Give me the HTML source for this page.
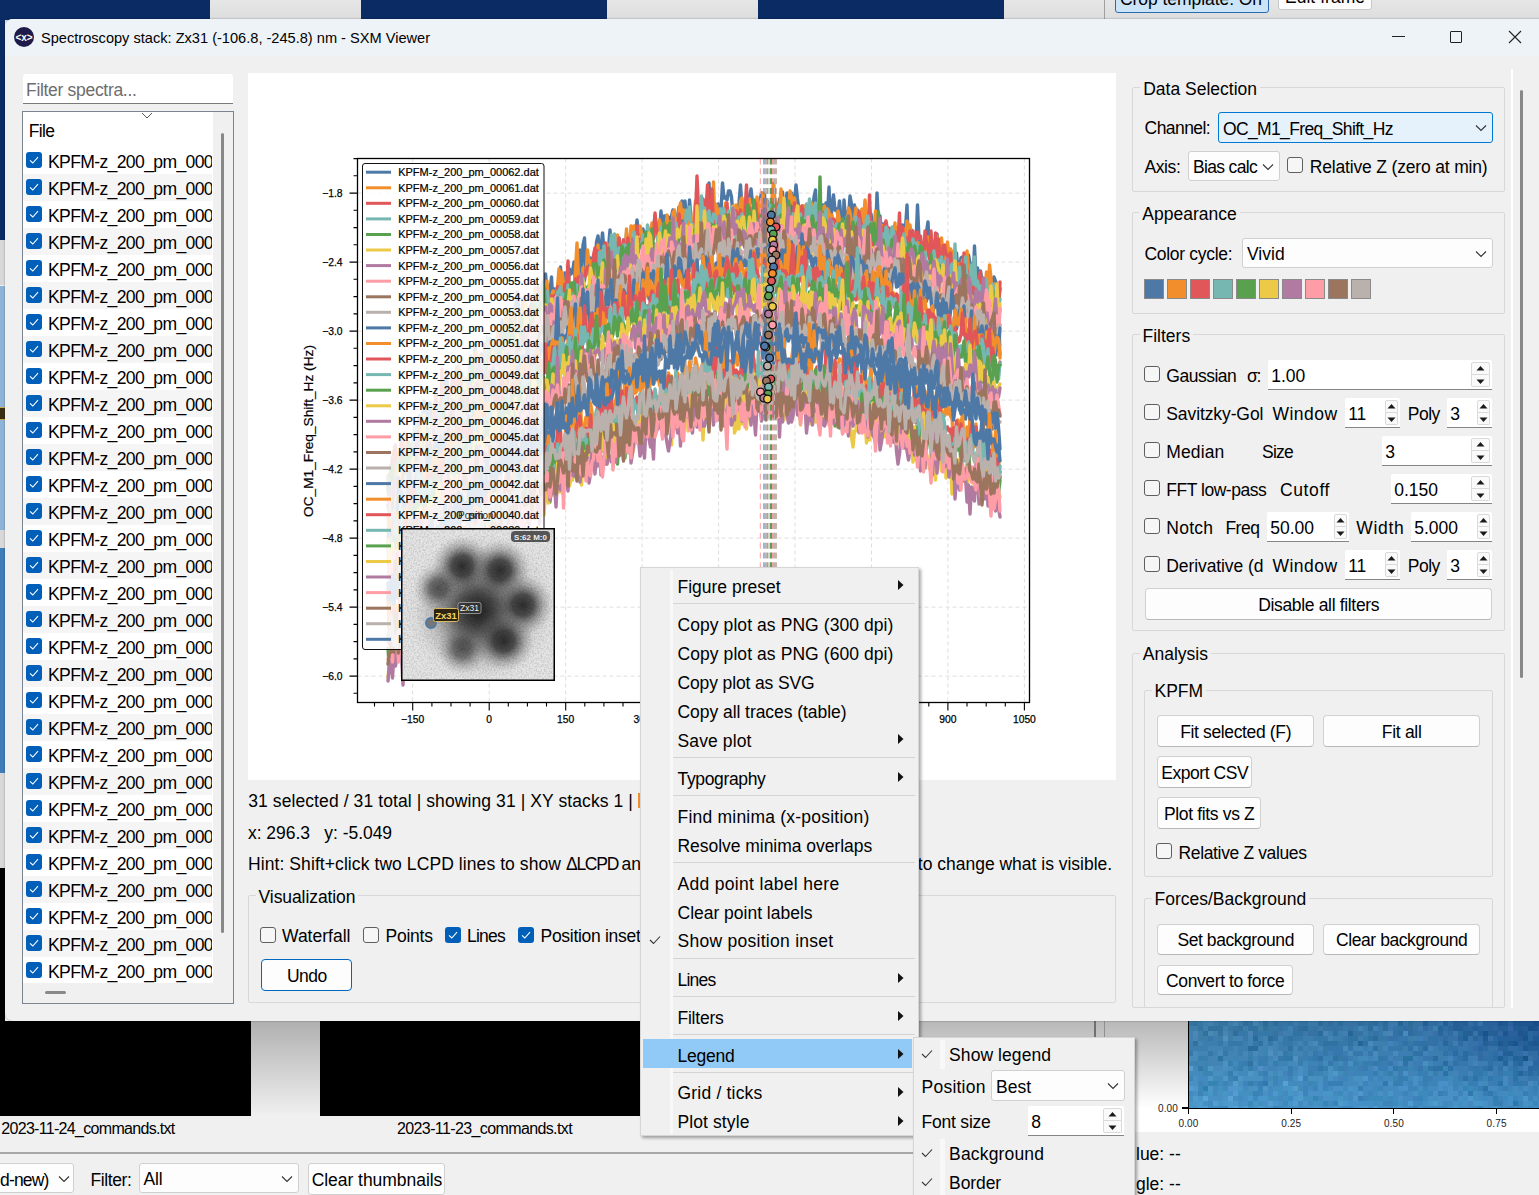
<!DOCTYPE html><html><head><meta charset="utf-8"><style>
html,body{margin:0;padding:0;width:1539px;height:1195px;overflow:hidden;background:#f0f0f0;font-family:"Liberation Sans",sans-serif;}
.a{position:absolute;box-sizing:border-box;}
.t{position:absolute;white-space:pre;line-height:1;}
</style></head><body>
<div class="a" style="left:0px;top:0px;width:1539px;height:22px;background:linear-gradient(#e6e6e6,#dcdcdc)"></div>
<div class="a" style="left:0px;top:0px;width:210px;height:20px;background:#0a2b63"></div>
<div class="a" style="left:361px;top:0px;width:246px;height:20px;background:#0a2b63"></div>
<div class="a" style="left:758px;top:0px;width:246px;height:20px;background:#0a2b63"></div>
<div class="a" style="left:1104px;top:0px;width:1px;height:20px;background:#a0a0a0"></div>
<div class="a" style="left:1115px;top:-6px;width:154px;height:19px;background:#cce4f7;border:1px solid #2b6cb0;border-radius:3px"></div>
<div class="t" style="left:1120.0px;top:-9.2px;font-size:17.5px;color:#000;letter-spacing:-0.058px;">Crop template: On</div>
<div class="a" style="left:1278px;top:-6px;width:94px;height:16px;background:#fdfdfd;border:1px solid #c8c8c8;border-radius:3px"></div>
<div class="t" style="left:1285.0px;top:-10.7px;font-size:17.5px;color:#000;letter-spacing:0.025px;">Edit frame</div>
<div class="a" style="left:0px;top:0px;width:5px;height:240px;background:#0a2b63"></div>
<div class="a" style="left:0px;top:240px;width:5px;height:45px;background:#d8d8d8"></div>
<div class="a" style="left:0px;top:286px;width:5px;height:244px;background:#8fb3d6"></div>
<div class="a" style="left:0px;top:407px;width:5px;height:13px;background:#3b2d12;border-top:1px solid #c8a850;border-bottom:1px solid #c8a850"></div>
<div class="a" style="left:0px;top:530px;width:5px;height:18px;background:#d8d8d8"></div>
<div class="a" style="left:0px;top:548px;width:5px;height:225px;background:#3f7db8"></div>
<div class="a" style="left:0px;top:773px;width:5px;height:95px;background:#d8d8d8"></div>
<div class="a" style="left:0px;top:868px;width:5px;height:153px;background:#000"></div>
<div class="a" style="left:0px;top:1021px;width:1539px;height:174px;background:#f0f0f0"></div>
<div class="a" style="left:0px;top:1021px;width:251px;height:95px;background:#000"></div>
<div class="a" style="left:251px;top:1021px;width:69px;height:95px;background:linear-gradient(#b0b0b0,#f0f0f0)"></div>
<div class="a" style="left:320px;top:1021px;width:320px;height:95px;background:#000"></div>
<div class="a" style="left:640px;top:1021px;width:548px;height:87px;background:linear-gradient(#b8b8b8,#ffffff)"></div>
<div class="a" style="left:1094px;top:1021px;width:2px;height:19px;background:#707070"></div>
<div class="a" style="left:1104px;top:1021px;width:1px;height:19px;background:#909090"></div>
<div class="a" style="left:1113px;top:1108px;width:426px;height:24px;background:#fff"></div>
<svg class="a" style="left:0;top:0" width="1539" height="1195" shape-rendering="crispEdges"><path fill="rgb(54,114,162)" d="M1188 1021h5v5h-5zM1218 1021h5v5h-5zM1223 1021h5v5h-5zM1278 1021h5v5h-5zM1283 1021h5v5h-5zM1298 1021h5v5h-5zM1323 1021h5v5h-5zM1333 1021h5v5h-5zM1343 1021h5v5h-5zM1348 1021h5v5h-5zM1353 1021h5v5h-5zM1378 1021h5v5h-5zM1413 1021h5v5h-5zM1418 1021h5v5h-5zM1198 1026h5v5h-5zM1233 1026h5v5h-5zM1278 1026h5v5h-5zM1293 1026h5v5h-5zM1313 1026h5v5h-5zM1323 1026h5v5h-5zM1328 1026h5v5h-5zM1338 1026h5v5h-5zM1348 1026h5v5h-5zM1218 1031h5v5h-5zM1253 1031h5v5h-5zM1273 1031h5v5h-5zM1308 1031h5v5h-5zM1313 1031h5v5h-5zM1353 1031h5v5h-5zM1358 1031h5v5h-5z"/><path fill="rgb(48,114,156)" d="M1193 1021h5v5h-5zM1248 1021h5v5h-5zM1208 1026h5v5h-5zM1213 1026h5v5h-5zM1218 1026h5v5h-5zM1238 1026h5v5h-5zM1253 1026h5v5h-5zM1263 1026h5v5h-5zM1203 1031h5v5h-5zM1193 1041h5v5h-5z"/><path fill="rgb(54,120,162)" d="M1198 1021h5v5h-5zM1268 1021h5v5h-5zM1228 1026h5v5h-5zM1268 1026h5v5h-5zM1308 1026h5v5h-5z"/><path fill="rgb(60,126,168)" d="M1203 1021h5v5h-5zM1228 1021h5v5h-5zM1188 1026h5v5h-5zM1193 1026h5v5h-5zM1243 1026h5v5h-5zM1258 1026h5v5h-5zM1198 1031h5v5h-5zM1228 1031h5v5h-5zM1198 1036h5v5h-5zM1203 1036h5v5h-5zM1218 1036h5v5h-5zM1228 1036h5v5h-5zM1223 1046h5v5h-5z"/><path fill="rgb(66,126,174)" d="M1208 1021h5v5h-5zM1203 1026h5v5h-5zM1223 1026h5v5h-5zM1288 1026h5v5h-5zM1188 1031h5v5h-5zM1283 1031h5v5h-5zM1188 1036h5v5h-5z"/><path fill="rgb(60,120,168)" d="M1213 1021h5v5h-5zM1238 1021h5v5h-5zM1258 1021h5v5h-5zM1293 1021h5v5h-5zM1308 1021h5v5h-5zM1313 1021h5v5h-5zM1393 1021h5v5h-5zM1318 1026h5v5h-5zM1363 1026h5v5h-5zM1278 1031h5v5h-5zM1303 1031h5v5h-5zM1243 1036h5v5h-5zM1303 1041h5v5h-5z"/><path fill="rgb(66,132,174)" d="M1233 1021h5v5h-5zM1253 1021h5v5h-5zM1213 1031h5v5h-5zM1263 1036h5v5h-5z"/><path fill="rgb(48,108,156)" d="M1243 1021h5v5h-5zM1273 1021h5v5h-5zM1328 1021h5v5h-5zM1358 1021h5v5h-5zM1368 1021h5v5h-5zM1433 1021h5v5h-5zM1298 1026h5v5h-5zM1383 1026h5v5h-5zM1408 1026h5v5h-5zM1233 1031h5v5h-5z"/><path fill="rgb(42,108,150)" d="M1263 1021h5v5h-5zM1318 1021h5v5h-5z"/><path fill="rgb(48,114,162)" d="M1288 1021h5v5h-5zM1303 1021h5v5h-5zM1363 1021h5v5h-5zM1248 1026h5v5h-5zM1333 1026h5v5h-5zM1398 1026h5v5h-5zM1293 1031h5v5h-5zM1298 1031h5v5h-5zM1333 1031h5v5h-5zM1393 1031h5v5h-5zM1413 1031h5v5h-5zM1273 1036h5v5h-5zM1288 1036h5v5h-5zM1348 1036h5v5h-5zM1353 1036h5v5h-5zM1368 1036h5v5h-5zM1428 1036h5v5h-5zM1258 1041h5v5h-5zM1323 1041h5v5h-5zM1328 1041h5v5h-5zM1333 1041h5v5h-5zM1348 1041h5v5h-5zM1363 1041h5v5h-5zM1403 1041h5v5h-5zM1423 1041h5v5h-5zM1448 1041h5v5h-5zM1288 1046h5v5h-5zM1413 1051h5v5h-5zM1318 1056h5v5h-5zM1333 1056h5v5h-5zM1248 1061h5v5h-5z"/><path fill="rgb(42,108,156)" d="M1338 1021h5v5h-5zM1373 1021h5v5h-5zM1383 1021h5v5h-5zM1408 1021h5v5h-5zM1303 1026h5v5h-5zM1368 1026h5v5h-5zM1318 1031h5v5h-5zM1458 1031h5v5h-5zM1253 1036h5v5h-5zM1268 1036h5v5h-5zM1373 1036h5v5h-5zM1248 1046h5v5h-5zM1253 1046h5v5h-5z"/><path fill="rgb(60,120,174)" d="M1388 1021h5v5h-5zM1388 1026h5v5h-5zM1418 1026h5v5h-5zM1428 1031h5v5h-5zM1453 1031h5v5h-5zM1423 1036h5v5h-5z"/><path fill="rgb(36,102,150)" d="M1398 1021h5v5h-5zM1438 1026h5v5h-5zM1348 1031h5v5h-5z"/><path fill="rgb(54,114,168)" d="M1403 1021h5v5h-5zM1438 1021h5v5h-5zM1478 1021h5v5h-5zM1393 1026h5v5h-5zM1413 1026h5v5h-5zM1428 1026h5v5h-5zM1373 1031h5v5h-5zM1418 1031h5v5h-5zM1433 1031h5v5h-5zM1443 1031h5v5h-5zM1473 1031h5v5h-5zM1388 1036h5v5h-5zM1393 1036h5v5h-5zM1438 1036h5v5h-5zM1448 1036h5v5h-5zM1453 1036h5v5h-5zM1468 1036h5v5h-5zM1488 1036h5v5h-5zM1428 1041h5v5h-5zM1468 1041h5v5h-5zM1473 1041h5v5h-5zM1468 1046h5v5h-5zM1488 1046h5v5h-5zM1493 1046h5v5h-5zM1473 1051h5v5h-5zM1483 1051h5v5h-5zM1528 1056h5v5h-5z"/><path fill="rgb(36,96,150)" d="M1423 1021h5v5h-5zM1443 1021h5v5h-5zM1453 1021h5v5h-5zM1463 1021h5v5h-5zM1453 1026h5v5h-5zM1458 1026h5v5h-5zM1473 1026h5v5h-5zM1498 1026h5v5h-5zM1503 1026h5v5h-5zM1463 1031h5v5h-5zM1468 1031h5v5h-5zM1478 1031h5v5h-5zM1488 1031h5v5h-5zM1493 1031h5v5h-5zM1503 1036h5v5h-5zM1513 1036h5v5h-5zM1483 1041h5v5h-5zM1503 1041h5v5h-5zM1523 1041h5v5h-5zM1528 1046h5v5h-5zM1533 1046h5v5h-5zM1503 1051h5v5h-5zM1538 1051h5v5h-5z"/><path fill="rgb(48,108,162)" d="M1428 1021h5v5h-5zM1448 1021h5v5h-5zM1468 1021h5v5h-5zM1403 1026h5v5h-5zM1423 1026h5v5h-5zM1443 1026h5v5h-5zM1398 1031h5v5h-5zM1408 1031h5v5h-5zM1448 1031h5v5h-5zM1443 1036h5v5h-5zM1478 1036h5v5h-5zM1458 1041h5v5h-5zM1513 1046h5v5h-5zM1478 1051h5v5h-5zM1513 1051h5v5h-5zM1528 1051h5v5h-5zM1533 1051h5v5h-5zM1478 1056h5v5h-5zM1533 1056h5v5h-5z"/><path fill="rgb(42,96,150)" d="M1458 1021h5v5h-5z"/><path fill="rgb(42,102,156)" d="M1473 1021h5v5h-5zM1448 1026h5v5h-5zM1463 1026h5v5h-5zM1468 1026h5v5h-5zM1483 1026h5v5h-5zM1493 1026h5v5h-5zM1438 1031h5v5h-5zM1528 1031h5v5h-5zM1458 1036h5v5h-5zM1473 1036h5v5h-5zM1528 1036h5v5h-5zM1443 1041h5v5h-5zM1488 1041h5v5h-5zM1498 1046h5v5h-5z"/><path fill="rgb(42,96,156)" d="M1483 1021h5v5h-5zM1488 1021h5v5h-5zM1493 1021h5v5h-5zM1508 1021h5v5h-5zM1478 1026h5v5h-5zM1488 1026h5v5h-5zM1508 1031h5v5h-5zM1513 1031h5v5h-5zM1533 1031h5v5h-5zM1518 1041h5v5h-5z"/><path fill="rgb(30,84,144)" d="M1498 1021h5v5h-5zM1513 1021h5v5h-5zM1518 1021h5v5h-5zM1523 1021h5v5h-5zM1528 1021h5v5h-5zM1503 1031h5v5h-5zM1518 1031h5v5h-5zM1533 1041h5v5h-5z"/><path fill="rgb(30,90,144)" d="M1503 1021h5v5h-5zM1518 1026h5v5h-5zM1523 1031h5v5h-5zM1498 1041h5v5h-5zM1508 1041h5v5h-5zM1538 1041h5v5h-5zM1523 1046h5v5h-5z"/><path fill="rgb(24,78,138)" d="M1533 1021h5v5h-5zM1538 1021h5v5h-5zM1528 1026h5v5h-5z"/><path fill="rgb(54,120,168)" d="M1273 1026h5v5h-5zM1283 1026h5v5h-5zM1343 1026h5v5h-5zM1353 1026h5v5h-5zM1378 1026h5v5h-5zM1238 1031h5v5h-5zM1243 1031h5v5h-5zM1258 1031h5v5h-5zM1263 1031h5v5h-5zM1268 1031h5v5h-5zM1368 1031h5v5h-5zM1378 1031h5v5h-5zM1423 1031h5v5h-5zM1208 1036h5v5h-5zM1283 1036h5v5h-5zM1293 1036h5v5h-5zM1298 1036h5v5h-5zM1313 1036h5v5h-5zM1318 1036h5v5h-5zM1323 1036h5v5h-5zM1343 1036h5v5h-5zM1363 1036h5v5h-5zM1378 1036h5v5h-5zM1383 1036h5v5h-5zM1218 1041h5v5h-5zM1228 1041h5v5h-5zM1233 1041h5v5h-5zM1238 1041h5v5h-5zM1253 1041h5v5h-5zM1268 1041h5v5h-5zM1283 1041h5v5h-5zM1288 1041h5v5h-5zM1318 1041h5v5h-5zM1338 1041h5v5h-5zM1343 1041h5v5h-5zM1408 1041h5v5h-5zM1298 1046h5v5h-5zM1323 1046h5v5h-5zM1333 1046h5v5h-5zM1388 1046h5v5h-5zM1398 1046h5v5h-5zM1418 1046h5v5h-5zM1188 1051h5v5h-5zM1208 1051h5v5h-5zM1223 1051h5v5h-5zM1283 1051h5v5h-5zM1313 1051h5v5h-5zM1323 1051h5v5h-5zM1353 1051h5v5h-5zM1278 1056h5v5h-5zM1338 1056h5v5h-5zM1198 1066h5v5h-5z"/><path fill="rgb(66,132,180)" d="M1358 1026h5v5h-5zM1383 1031h5v5h-5zM1233 1036h5v5h-5zM1238 1036h5v5h-5zM1248 1036h5v5h-5zM1278 1036h5v5h-5zM1328 1036h5v5h-5zM1198 1041h5v5h-5zM1223 1041h5v5h-5zM1248 1041h5v5h-5zM1263 1041h5v5h-5zM1273 1041h5v5h-5zM1298 1041h5v5h-5zM1308 1041h5v5h-5zM1208 1046h5v5h-5zM1213 1046h5v5h-5zM1218 1046h5v5h-5zM1233 1046h5v5h-5zM1258 1046h5v5h-5zM1273 1046h5v5h-5zM1293 1046h5v5h-5zM1318 1046h5v5h-5zM1353 1046h5v5h-5zM1358 1046h5v5h-5zM1198 1051h5v5h-5zM1203 1051h5v5h-5zM1228 1051h5v5h-5zM1233 1051h5v5h-5zM1258 1051h5v5h-5zM1273 1051h5v5h-5zM1293 1051h5v5h-5zM1298 1051h5v5h-5zM1308 1051h5v5h-5zM1363 1051h5v5h-5zM1208 1056h5v5h-5zM1213 1056h5v5h-5zM1223 1056h5v5h-5zM1228 1056h5v5h-5zM1238 1056h5v5h-5zM1243 1056h5v5h-5zM1253 1056h5v5h-5zM1268 1056h5v5h-5zM1188 1061h5v5h-5zM1198 1061h5v5h-5zM1208 1061h5v5h-5zM1213 1061h5v5h-5zM1218 1061h5v5h-5z"/><path fill="rgb(66,126,180)" d="M1373 1026h5v5h-5zM1343 1031h5v5h-5zM1373 1041h5v5h-5z"/><path fill="rgb(60,126,174)" d="M1433 1026h5v5h-5zM1288 1031h5v5h-5zM1328 1031h5v5h-5zM1338 1031h5v5h-5zM1363 1031h5v5h-5zM1213 1036h5v5h-5zM1258 1036h5v5h-5zM1303 1036h5v5h-5zM1308 1036h5v5h-5zM1333 1036h5v5h-5zM1338 1036h5v5h-5zM1358 1036h5v5h-5zM1408 1036h5v5h-5zM1413 1036h5v5h-5zM1188 1041h5v5h-5zM1203 1041h5v5h-5zM1208 1041h5v5h-5zM1213 1041h5v5h-5zM1243 1041h5v5h-5zM1278 1041h5v5h-5zM1293 1041h5v5h-5zM1353 1041h5v5h-5zM1378 1041h5v5h-5zM1383 1041h5v5h-5zM1393 1041h5v5h-5zM1188 1046h5v5h-5zM1193 1046h5v5h-5zM1198 1046h5v5h-5zM1203 1046h5v5h-5zM1228 1046h5v5h-5zM1238 1046h5v5h-5zM1243 1046h5v5h-5zM1278 1046h5v5h-5zM1283 1046h5v5h-5zM1308 1046h5v5h-5zM1313 1046h5v5h-5zM1378 1046h5v5h-5zM1403 1046h5v5h-5zM1433 1046h5v5h-5zM1238 1051h5v5h-5zM1248 1051h5v5h-5zM1303 1051h5v5h-5zM1343 1051h5v5h-5zM1378 1051h5v5h-5zM1383 1051h5v5h-5zM1408 1051h5v5h-5zM1433 1051h5v5h-5zM1438 1051h5v5h-5zM1203 1056h5v5h-5zM1298 1056h5v5h-5zM1398 1056h5v5h-5zM1438 1056h5v5h-5zM1263 1061h5v5h-5z"/><path fill="rgb(48,102,162)" d="M1508 1026h5v5h-5zM1498 1031h5v5h-5z"/><path fill="rgb(36,90,150)" d="M1513 1026h5v5h-5zM1523 1026h5v5h-5zM1538 1026h5v5h-5zM1538 1031h5v5h-5zM1518 1036h5v5h-5z"/><path fill="rgb(24,84,138)" d="M1533 1026h5v5h-5zM1483 1031h5v5h-5zM1523 1056h5v5h-5z"/><path fill="rgb(72,138,180)" d="M1193 1031h5v5h-5zM1208 1031h5v5h-5z"/><path fill="rgb(72,132,180)" d="M1223 1031h5v5h-5zM1248 1031h5v5h-5zM1323 1031h5v5h-5zM1388 1031h5v5h-5zM1193 1036h5v5h-5z"/><path fill="rgb(72,138,186)" d="M1403 1031h5v5h-5zM1313 1041h5v5h-5zM1368 1041h5v5h-5zM1268 1046h5v5h-5zM1343 1046h5v5h-5zM1193 1051h5v5h-5zM1218 1051h5v5h-5zM1253 1051h5v5h-5zM1278 1051h5v5h-5zM1348 1051h5v5h-5zM1373 1051h5v5h-5zM1393 1051h5v5h-5zM1188 1056h5v5h-5zM1193 1056h5v5h-5zM1293 1061h5v5h-5zM1213 1066h5v5h-5zM1228 1066h5v5h-5z"/><path fill="rgb(78,144,192)" d="M1223 1036h5v5h-5zM1268 1051h5v5h-5zM1293 1056h5v5h-5zM1223 1061h5v5h-5z"/><path fill="rgb(54,120,174)" d="M1398 1036h5v5h-5zM1403 1036h5v5h-5zM1398 1041h5v5h-5zM1438 1041h5v5h-5zM1463 1041h5v5h-5zM1328 1046h5v5h-5zM1338 1046h5v5h-5zM1348 1046h5v5h-5zM1393 1046h5v5h-5zM1438 1046h5v5h-5zM1443 1046h5v5h-5zM1458 1046h5v5h-5zM1463 1046h5v5h-5zM1333 1051h5v5h-5zM1338 1051h5v5h-5zM1358 1051h5v5h-5zM1368 1051h5v5h-5zM1448 1051h5v5h-5zM1458 1051h5v5h-5zM1313 1056h5v5h-5zM1343 1056h5v5h-5zM1383 1056h5v5h-5zM1423 1056h5v5h-5zM1428 1056h5v5h-5zM1453 1056h5v5h-5zM1328 1061h5v5h-5zM1373 1061h5v5h-5zM1388 1061h5v5h-5zM1458 1061h5v5h-5zM1463 1061h5v5h-5zM1493 1061h5v5h-5zM1498 1061h5v5h-5zM1418 1066h5v5h-5zM1468 1066h5v5h-5zM1478 1066h5v5h-5zM1508 1066h5v5h-5zM1518 1066h5v5h-5zM1498 1071h5v5h-5zM1528 1076h5v5h-5zM1533 1076h5v5h-5zM1523 1081h5v5h-5z"/><path fill="rgb(60,126,180)" d="M1418 1036h5v5h-5zM1453 1041h5v5h-5zM1363 1046h5v5h-5zM1318 1051h5v5h-5zM1328 1051h5v5h-5zM1388 1051h5v5h-5zM1398 1051h5v5h-5zM1403 1051h5v5h-5zM1428 1051h5v5h-5zM1258 1056h5v5h-5zM1303 1056h5v5h-5zM1348 1056h5v5h-5zM1393 1056h5v5h-5zM1418 1056h5v5h-5zM1443 1056h5v5h-5zM1468 1056h5v5h-5zM1473 1056h5v5h-5zM1238 1061h5v5h-5zM1318 1061h5v5h-5zM1343 1061h5v5h-5zM1383 1061h5v5h-5zM1413 1061h5v5h-5zM1418 1061h5v5h-5zM1433 1061h5v5h-5zM1448 1061h5v5h-5zM1468 1061h5v5h-5zM1478 1061h5v5h-5zM1483 1061h5v5h-5zM1508 1061h5v5h-5zM1528 1061h5v5h-5zM1308 1066h5v5h-5zM1313 1066h5v5h-5zM1343 1066h5v5h-5zM1358 1066h5v5h-5zM1413 1066h5v5h-5zM1453 1066h5v5h-5zM1458 1066h5v5h-5zM1463 1066h5v5h-5zM1493 1066h5v5h-5zM1523 1066h5v5h-5zM1263 1071h5v5h-5zM1288 1071h5v5h-5zM1398 1071h5v5h-5zM1423 1071h5v5h-5zM1458 1071h5v5h-5zM1493 1071h5v5h-5zM1303 1076h5v5h-5zM1428 1076h5v5h-5zM1508 1076h5v5h-5zM1518 1076h5v5h-5zM1523 1076h5v5h-5zM1538 1076h5v5h-5zM1488 1081h5v5h-5zM1508 1081h5v5h-5z"/><path fill="rgb(48,114,168)" d="M1433 1036h5v5h-5zM1413 1041h5v5h-5zM1418 1041h5v5h-5zM1433 1041h5v5h-5zM1373 1046h5v5h-5zM1408 1046h5v5h-5zM1448 1046h5v5h-5zM1453 1046h5v5h-5zM1418 1051h5v5h-5zM1443 1051h5v5h-5zM1468 1051h5v5h-5zM1488 1051h5v5h-5zM1458 1056h5v5h-5zM1483 1056h5v5h-5zM1488 1056h5v5h-5zM1508 1056h5v5h-5zM1403 1061h5v5h-5zM1453 1061h5v5h-5zM1488 1061h5v5h-5zM1433 1066h5v5h-5zM1483 1066h5v5h-5zM1498 1066h5v5h-5zM1513 1066h5v5h-5zM1523 1071h5v5h-5zM1533 1071h5v5h-5zM1463 1076h5v5h-5zM1473 1076h5v5h-5z"/><path fill="rgb(30,96,150)" d="M1463 1036h5v5h-5zM1508 1051h5v5h-5zM1498 1056h5v5h-5z"/><path fill="rgb(30,90,150)" d="M1483 1036h5v5h-5zM1533 1036h5v5h-5zM1538 1036h5v5h-5zM1528 1041h5v5h-5z"/><path fill="rgb(42,102,162)" d="M1493 1036h5v5h-5zM1478 1046h5v5h-5zM1518 1046h5v5h-5zM1538 1056h5v5h-5zM1533 1061h5v5h-5zM1538 1061h5v5h-5zM1528 1066h5v5h-5z"/><path fill="rgb(36,96,156)" d="M1498 1036h5v5h-5zM1508 1036h5v5h-5zM1538 1046h5v5h-5zM1513 1056h5v5h-5z"/><path fill="rgb(24,84,144)" d="M1523 1036h5v5h-5zM1513 1041h5v5h-5z"/><path fill="rgb(36,102,156)" d="M1358 1041h5v5h-5zM1493 1041h5v5h-5zM1503 1046h5v5h-5zM1518 1056h5v5h-5zM1503 1061h5v5h-5zM1518 1061h5v5h-5zM1518 1071h5v5h-5z"/><path fill="rgb(66,132,186)" d="M1388 1041h5v5h-5zM1383 1046h5v5h-5zM1413 1046h5v5h-5zM1428 1046h5v5h-5zM1423 1051h5v5h-5zM1368 1056h5v5h-5zM1388 1056h5v5h-5zM1448 1056h5v5h-5zM1393 1061h5v5h-5zM1408 1061h5v5h-5zM1428 1061h5v5h-5zM1473 1061h5v5h-5zM1253 1066h5v5h-5zM1268 1066h5v5h-5zM1273 1066h5v5h-5zM1293 1066h5v5h-5zM1368 1066h5v5h-5zM1503 1066h5v5h-5zM1283 1071h5v5h-5zM1348 1071h5v5h-5zM1408 1071h5v5h-5zM1438 1071h5v5h-5zM1453 1071h5v5h-5zM1468 1071h5v5h-5zM1488 1071h5v5h-5zM1338 1076h5v5h-5z"/><path fill="rgb(48,108,168)" d="M1478 1041h5v5h-5zM1473 1046h5v5h-5zM1508 1046h5v5h-5zM1493 1051h5v5h-5zM1518 1051h5v5h-5z"/><path fill="rgb(60,132,180)" d="M1263 1046h5v5h-5zM1303 1046h5v5h-5zM1368 1046h5v5h-5zM1213 1051h5v5h-5zM1263 1051h5v5h-5zM1233 1056h5v5h-5zM1323 1056h5v5h-5zM1328 1056h5v5h-5zM1353 1056h5v5h-5zM1413 1056h5v5h-5zM1193 1061h5v5h-5zM1203 1061h5v5h-5zM1278 1061h5v5h-5zM1283 1061h5v5h-5zM1308 1061h5v5h-5zM1313 1061h5v5h-5zM1333 1061h5v5h-5zM1358 1061h5v5h-5zM1203 1066h5v5h-5zM1233 1066h5v5h-5zM1333 1066h5v5h-5zM1348 1066h5v5h-5zM1353 1066h5v5h-5zM1408 1066h5v5h-5zM1423 1066h5v5h-5zM1443 1066h5v5h-5zM1203 1071h5v5h-5zM1208 1071h5v5h-5zM1258 1071h5v5h-5zM1313 1071h5v5h-5zM1318 1071h5v5h-5zM1343 1071h5v5h-5zM1358 1071h5v5h-5zM1383 1071h5v5h-5zM1448 1071h5v5h-5zM1228 1076h5v5h-5zM1273 1076h5v5h-5zM1323 1076h5v5h-5zM1393 1076h5v5h-5zM1483 1076h5v5h-5zM1223 1081h5v5h-5zM1308 1081h5v5h-5zM1433 1081h5v5h-5zM1453 1081h5v5h-5zM1198 1091h5v5h-5z"/><path fill="rgb(42,108,162)" d="M1423 1046h5v5h-5zM1483 1046h5v5h-5zM1453 1051h5v5h-5zM1463 1051h5v5h-5zM1433 1056h5v5h-5zM1463 1056h5v5h-5zM1493 1056h5v5h-5zM1503 1056h5v5h-5zM1443 1061h5v5h-5zM1513 1061h5v5h-5zM1488 1066h5v5h-5zM1533 1066h5v5h-5zM1538 1066h5v5h-5zM1528 1071h5v5h-5zM1538 1071h5v5h-5z"/><path fill="rgb(66,138,180)" d="M1243 1051h5v5h-5z"/><path fill="rgb(54,126,174)" d="M1288 1051h5v5h-5zM1198 1056h5v5h-5zM1248 1056h5v5h-5zM1263 1056h5v5h-5zM1308 1056h5v5h-5zM1228 1061h5v5h-5zM1243 1061h5v5h-5zM1258 1061h5v5h-5zM1273 1061h5v5h-5zM1298 1061h5v5h-5zM1353 1061h5v5h-5zM1363 1061h5v5h-5zM1368 1061h5v5h-5zM1378 1061h5v5h-5zM1238 1066h5v5h-5zM1248 1066h5v5h-5zM1288 1066h5v5h-5zM1323 1066h5v5h-5zM1338 1066h5v5h-5zM1363 1066h5v5h-5zM1398 1066h5v5h-5zM1228 1071h5v5h-5zM1308 1071h5v5h-5zM1373 1071h5v5h-5zM1388 1071h5v5h-5zM1433 1071h5v5h-5zM1398 1076h5v5h-5zM1423 1076h5v5h-5zM1248 1081h5v5h-5zM1393 1081h5v5h-5z"/><path fill="rgb(54,114,174)" d="M1498 1051h5v5h-5zM1523 1051h5v5h-5z"/><path fill="rgb(42,114,162)" d="M1218 1056h5v5h-5zM1403 1056h5v5h-5zM1408 1056h5v5h-5zM1438 1066h5v5h-5z"/><path fill="rgb(72,138,192)" d="M1273 1056h5v5h-5zM1398 1061h5v5h-5zM1218 1066h5v5h-5zM1283 1066h5v5h-5zM1373 1066h5v5h-5zM1193 1071h5v5h-5zM1503 1076h5v5h-5zM1528 1081h5v5h-5z"/><path fill="rgb(48,120,168)" d="M1283 1056h5v5h-5zM1288 1056h5v5h-5zM1378 1056h5v5h-5zM1318 1066h5v5h-5zM1393 1066h5v5h-5zM1428 1066h5v5h-5zM1473 1066h5v5h-5z"/><path fill="rgb(66,138,186)" d="M1358 1056h5v5h-5zM1363 1056h5v5h-5zM1373 1056h5v5h-5zM1233 1061h5v5h-5zM1253 1061h5v5h-5zM1268 1061h5v5h-5zM1288 1061h5v5h-5zM1303 1061h5v5h-5zM1323 1061h5v5h-5zM1338 1061h5v5h-5zM1193 1066h5v5h-5zM1243 1066h5v5h-5zM1263 1066h5v5h-5zM1278 1066h5v5h-5zM1303 1066h5v5h-5zM1188 1071h5v5h-5zM1198 1071h5v5h-5zM1223 1071h5v5h-5zM1238 1071h5v5h-5zM1243 1071h5v5h-5zM1273 1071h5v5h-5zM1293 1071h5v5h-5zM1303 1071h5v5h-5zM1323 1071h5v5h-5zM1338 1071h5v5h-5zM1378 1071h5v5h-5zM1393 1071h5v5h-5zM1428 1071h5v5h-5zM1213 1076h5v5h-5zM1218 1076h5v5h-5zM1268 1076h5v5h-5zM1278 1076h5v5h-5zM1348 1076h5v5h-5zM1388 1076h5v5h-5zM1408 1076h5v5h-5zM1448 1076h5v5h-5zM1203 1081h5v5h-5zM1218 1081h5v5h-5zM1228 1081h5v5h-5zM1293 1081h5v5h-5zM1343 1081h5v5h-5zM1373 1081h5v5h-5zM1483 1081h5v5h-5zM1213 1086h5v5h-5zM1223 1086h5v5h-5zM1298 1086h5v5h-5z"/><path fill="rgb(72,144,192)" d="M1348 1061h5v5h-5zM1423 1061h5v5h-5zM1223 1066h5v5h-5zM1298 1066h5v5h-5zM1328 1066h5v5h-5zM1213 1071h5v5h-5zM1218 1071h5v5h-5zM1233 1071h5v5h-5zM1253 1071h5v5h-5zM1268 1071h5v5h-5zM1278 1071h5v5h-5zM1328 1071h5v5h-5zM1193 1076h5v5h-5zM1243 1076h5v5h-5zM1248 1076h5v5h-5zM1253 1076h5v5h-5zM1258 1076h5v5h-5zM1293 1076h5v5h-5zM1308 1076h5v5h-5zM1313 1076h5v5h-5zM1318 1076h5v5h-5zM1353 1076h5v5h-5zM1358 1076h5v5h-5zM1193 1081h5v5h-5zM1238 1081h5v5h-5zM1268 1081h5v5h-5zM1358 1081h5v5h-5zM1248 1086h5v5h-5zM1218 1091h5v5h-5z"/><path fill="rgb(54,126,180)" d="M1438 1061h5v5h-5zM1378 1066h5v5h-5zM1383 1066h5v5h-5zM1403 1066h5v5h-5zM1418 1071h5v5h-5zM1463 1071h5v5h-5zM1483 1071h5v5h-5zM1503 1071h5v5h-5zM1508 1071h5v5h-5zM1233 1076h5v5h-5zM1403 1076h5v5h-5zM1458 1076h5v5h-5zM1468 1076h5v5h-5zM1478 1076h5v5h-5zM1493 1076h5v5h-5zM1498 1076h5v5h-5zM1258 1081h5v5h-5zM1328 1081h5v5h-5zM1333 1081h5v5h-5zM1338 1081h5v5h-5zM1398 1081h5v5h-5zM1423 1081h5v5h-5zM1468 1081h5v5h-5zM1473 1081h5v5h-5zM1493 1081h5v5h-5zM1358 1086h5v5h-5zM1478 1086h5v5h-5zM1503 1086h5v5h-5zM1533 1086h5v5h-5zM1438 1091h5v5h-5zM1483 1091h5v5h-5zM1523 1091h5v5h-5zM1358 1096h5v5h-5zM1493 1101h5v5h-5zM1498 1101h5v5h-5z"/><path fill="rgb(60,120,180)" d="M1523 1061h5v5h-5z"/><path fill="rgb(90,156,204)" d="M1188 1066h5v5h-5z"/><path fill="rgb(78,150,198)" d="M1208 1066h5v5h-5zM1248 1071h5v5h-5zM1333 1071h5v5h-5zM1208 1076h5v5h-5zM1223 1076h5v5h-5zM1238 1076h5v5h-5zM1208 1086h5v5h-5zM1263 1086h5v5h-5z"/><path fill="rgb(78,144,198)" d="M1258 1066h5v5h-5z"/><path fill="rgb(66,138,192)" d="M1388 1066h5v5h-5zM1198 1076h5v5h-5zM1203 1076h5v5h-5zM1283 1076h5v5h-5zM1333 1076h5v5h-5zM1373 1076h5v5h-5zM1383 1076h5v5h-5zM1418 1076h5v5h-5zM1278 1081h5v5h-5zM1288 1081h5v5h-5zM1298 1081h5v5h-5zM1348 1081h5v5h-5zM1353 1081h5v5h-5zM1368 1081h5v5h-5zM1378 1081h5v5h-5zM1403 1081h5v5h-5zM1448 1081h5v5h-5zM1463 1081h5v5h-5zM1478 1081h5v5h-5zM1503 1081h5v5h-5zM1243 1086h5v5h-5zM1268 1086h5v5h-5zM1308 1086h5v5h-5zM1328 1086h5v5h-5zM1343 1086h5v5h-5zM1363 1086h5v5h-5zM1368 1086h5v5h-5zM1383 1086h5v5h-5zM1388 1086h5v5h-5zM1393 1086h5v5h-5zM1428 1086h5v5h-5zM1433 1086h5v5h-5zM1443 1086h5v5h-5zM1458 1086h5v5h-5zM1488 1086h5v5h-5zM1493 1086h5v5h-5zM1513 1086h5v5h-5zM1523 1086h5v5h-5zM1538 1086h5v5h-5zM1188 1091h5v5h-5zM1213 1091h5v5h-5zM1268 1091h5v5h-5zM1283 1091h5v5h-5zM1333 1091h5v5h-5zM1348 1091h5v5h-5zM1363 1091h5v5h-5zM1373 1091h5v5h-5zM1383 1091h5v5h-5zM1393 1091h5v5h-5zM1398 1091h5v5h-5zM1408 1091h5v5h-5zM1478 1091h5v5h-5zM1498 1091h5v5h-5zM1503 1091h5v5h-5zM1513 1091h5v5h-5zM1518 1091h5v5h-5zM1538 1091h5v5h-5zM1238 1096h5v5h-5zM1278 1096h5v5h-5zM1318 1096h5v5h-5zM1348 1096h5v5h-5zM1383 1096h5v5h-5zM1393 1096h5v5h-5zM1403 1096h5v5h-5zM1408 1096h5v5h-5zM1478 1096h5v5h-5zM1488 1096h5v5h-5zM1208 1101h5v5h-5zM1298 1101h5v5h-5zM1308 1101h5v5h-5zM1328 1101h5v5h-5zM1373 1101h5v5h-5zM1403 1101h5v5h-5zM1413 1101h5v5h-5zM1448 1101h5v5h-5zM1468 1101h5v5h-5zM1488 1101h5v5h-5zM1503 1101h5v5h-5zM1218 1106h5v2h-5zM1388 1106h5v2h-5zM1408 1106h5v2h-5zM1423 1106h5v2h-5zM1428 1106h5v2h-5zM1468 1106h5v2h-5zM1473 1106h5v2h-5zM1503 1106h5v2h-5zM1513 1106h5v2h-5z"/><path fill="rgb(42,114,168)" d="M1448 1066h5v5h-5zM1443 1071h5v5h-5zM1513 1071h5v5h-5zM1513 1076h5v5h-5zM1498 1081h5v5h-5zM1483 1086h5v5h-5z"/><path fill="rgb(72,144,198)" d="M1298 1071h5v5h-5zM1403 1071h5v5h-5zM1328 1076h5v5h-5zM1413 1076h5v5h-5zM1188 1081h5v5h-5zM1318 1081h5v5h-5zM1388 1081h5v5h-5zM1413 1081h5v5h-5zM1438 1081h5v5h-5zM1443 1081h5v5h-5zM1253 1086h5v5h-5zM1283 1086h5v5h-5zM1318 1086h5v5h-5zM1333 1086h5v5h-5zM1338 1086h5v5h-5zM1353 1086h5v5h-5zM1398 1086h5v5h-5zM1403 1086h5v5h-5zM1438 1086h5v5h-5zM1448 1086h5v5h-5zM1193 1091h5v5h-5zM1228 1091h5v5h-5zM1263 1091h5v5h-5zM1293 1091h5v5h-5zM1308 1091h5v5h-5zM1313 1091h5v5h-5zM1318 1091h5v5h-5zM1343 1091h5v5h-5zM1353 1091h5v5h-5zM1378 1091h5v5h-5zM1413 1091h5v5h-5zM1433 1091h5v5h-5zM1448 1091h5v5h-5zM1453 1091h5v5h-5zM1463 1091h5v5h-5zM1208 1096h5v5h-5zM1213 1096h5v5h-5zM1218 1096h5v5h-5zM1323 1096h5v5h-5zM1328 1096h5v5h-5zM1398 1096h5v5h-5zM1428 1096h5v5h-5zM1438 1096h5v5h-5zM1443 1096h5v5h-5zM1448 1096h5v5h-5zM1458 1096h5v5h-5zM1243 1101h5v5h-5zM1263 1101h5v5h-5zM1278 1101h5v5h-5zM1353 1101h5v5h-5zM1438 1101h5v5h-5zM1453 1101h5v5h-5zM1463 1101h5v5h-5zM1483 1101h5v5h-5zM1523 1101h5v5h-5zM1293 1106h5v2h-5zM1308 1106h5v2h-5zM1318 1106h5v2h-5zM1353 1106h5v2h-5zM1483 1106h5v2h-5z"/><path fill="rgb(60,132,186)" d="M1353 1071h5v5h-5zM1363 1071h5v5h-5zM1368 1071h5v5h-5zM1413 1071h5v5h-5zM1188 1076h5v5h-5zM1263 1076h5v5h-5zM1288 1076h5v5h-5zM1343 1076h5v5h-5zM1368 1076h5v5h-5zM1378 1076h5v5h-5zM1433 1076h5v5h-5zM1438 1076h5v5h-5zM1443 1076h5v5h-5zM1453 1076h5v5h-5zM1198 1081h5v5h-5zM1243 1081h5v5h-5zM1253 1081h5v5h-5zM1273 1081h5v5h-5zM1323 1081h5v5h-5zM1363 1081h5v5h-5zM1408 1081h5v5h-5zM1418 1081h5v5h-5zM1428 1081h5v5h-5zM1458 1081h5v5h-5zM1533 1081h5v5h-5zM1303 1086h5v5h-5zM1313 1086h5v5h-5zM1323 1086h5v5h-5zM1378 1086h5v5h-5zM1408 1086h5v5h-5zM1413 1086h5v5h-5zM1423 1086h5v5h-5zM1453 1086h5v5h-5zM1473 1086h5v5h-5zM1498 1086h5v5h-5zM1508 1086h5v5h-5zM1518 1086h5v5h-5zM1528 1086h5v5h-5zM1258 1091h5v5h-5zM1303 1091h5v5h-5zM1368 1091h5v5h-5zM1403 1091h5v5h-5zM1428 1091h5v5h-5zM1443 1091h5v5h-5zM1458 1091h5v5h-5zM1493 1091h5v5h-5zM1528 1091h5v5h-5zM1363 1096h5v5h-5zM1413 1096h5v5h-5zM1453 1096h5v5h-5zM1498 1096h5v5h-5zM1513 1096h5v5h-5zM1528 1096h5v5h-5zM1538 1096h5v5h-5zM1383 1101h5v5h-5zM1388 1101h5v5h-5zM1518 1101h5v5h-5zM1533 1101h5v5h-5zM1508 1106h5v2h-5z"/><path fill="rgb(48,120,174)" d="M1473 1071h5v5h-5zM1478 1071h5v5h-5zM1488 1076h5v5h-5zM1263 1081h5v5h-5zM1383 1081h5v5h-5zM1513 1081h5v5h-5zM1518 1081h5v5h-5zM1538 1081h5v5h-5zM1468 1091h5v5h-5zM1488 1091h5v5h-5z"/><path fill="rgb(84,156,210)" d="M1298 1076h5v5h-5zM1233 1091h5v5h-5zM1213 1101h5v5h-5zM1268 1101h5v5h-5z"/><path fill="rgb(78,150,204)" d="M1363 1076h5v5h-5zM1193 1086h5v5h-5zM1228 1086h5v5h-5zM1233 1086h5v5h-5zM1273 1091h5v5h-5zM1298 1091h5v5h-5zM1358 1091h5v5h-5zM1293 1096h5v5h-5zM1353 1096h5v5h-5zM1468 1096h5v5h-5zM1193 1101h5v5h-5zM1223 1101h5v5h-5zM1233 1101h5v5h-5zM1363 1106h5v2h-5z"/><path fill="rgb(54,132,180)" d="M1208 1081h5v5h-5zM1213 1081h5v5h-5zM1258 1086h5v5h-5zM1463 1086h5v5h-5zM1253 1091h5v5h-5zM1313 1096h5v5h-5z"/><path fill="rgb(84,156,204)" d="M1233 1081h5v5h-5zM1188 1086h5v5h-5zM1293 1086h5v5h-5z"/><path fill="rgb(84,162,210)" d="M1283 1081h5v5h-5z"/><path fill="rgb(60,138,186)" d="M1303 1081h5v5h-5zM1313 1081h5v5h-5zM1198 1086h5v5h-5zM1373 1086h5v5h-5zM1468 1086h5v5h-5zM1338 1091h5v5h-5zM1418 1091h5v5h-5zM1423 1091h5v5h-5zM1508 1091h5v5h-5zM1368 1096h5v5h-5zM1373 1096h5v5h-5zM1378 1096h5v5h-5zM1388 1096h5v5h-5zM1248 1101h5v5h-5zM1283 1101h5v5h-5zM1273 1106h5v2h-5z"/><path fill="rgb(48,126,174)" d="M1203 1086h5v5h-5z"/><path fill="rgb(66,144,192)" d="M1218 1086h5v5h-5zM1273 1086h5v5h-5zM1278 1086h5v5h-5zM1418 1086h5v5h-5zM1203 1091h5v5h-5zM1238 1091h5v5h-5zM1243 1091h5v5h-5zM1248 1091h5v5h-5zM1278 1091h5v5h-5zM1473 1091h5v5h-5zM1188 1096h5v5h-5zM1233 1096h5v5h-5zM1268 1096h5v5h-5zM1273 1096h5v5h-5zM1283 1096h5v5h-5zM1303 1096h5v5h-5zM1308 1096h5v5h-5zM1343 1096h5v5h-5zM1433 1096h5v5h-5zM1473 1096h5v5h-5zM1533 1096h5v5h-5zM1258 1101h5v5h-5zM1318 1101h5v5h-5zM1378 1101h5v5h-5zM1458 1101h5v5h-5zM1298 1106h5v2h-5zM1323 1106h5v2h-5zM1378 1106h5v2h-5zM1458 1106h5v2h-5z"/><path fill="rgb(72,150,198)" d="M1238 1086h5v5h-5zM1288 1086h5v5h-5zM1348 1086h5v5h-5zM1208 1091h5v5h-5zM1223 1091h5v5h-5zM1288 1091h5v5h-5zM1323 1091h5v5h-5zM1328 1091h5v5h-5zM1388 1091h5v5h-5zM1198 1096h5v5h-5zM1223 1096h5v5h-5zM1338 1096h5v5h-5zM1188 1101h5v5h-5zM1218 1101h5v5h-5zM1253 1101h5v5h-5zM1303 1101h5v5h-5zM1428 1101h5v5h-5zM1193 1106h5v2h-5zM1253 1106h5v2h-5zM1268 1106h5v2h-5zM1393 1106h5v2h-5z"/><path fill="rgb(54,132,186)" d="M1533 1091h5v5h-5zM1418 1096h5v5h-5zM1323 1101h5v5h-5zM1333 1101h5v5h-5zM1413 1106h5v2h-5zM1478 1106h5v2h-5z"/><path fill="rgb(78,156,204)" d="M1193 1096h5v5h-5zM1298 1096h5v5h-5zM1198 1101h5v5h-5zM1228 1101h5v5h-5zM1338 1101h5v5h-5zM1433 1101h5v5h-5zM1258 1106h5v2h-5zM1373 1106h5v2h-5z"/><path fill="rgb(90,162,216)" d="M1203 1096h5v5h-5zM1228 1096h5v5h-5z"/><path fill="rgb(66,144,198)" d="M1243 1096h5v5h-5zM1333 1096h5v5h-5zM1463 1096h5v5h-5zM1508 1096h5v5h-5zM1203 1101h5v5h-5zM1238 1101h5v5h-5zM1313 1101h5v5h-5zM1348 1101h5v5h-5zM1358 1101h5v5h-5zM1363 1101h5v5h-5zM1368 1101h5v5h-5zM1398 1101h5v5h-5zM1423 1101h5v5h-5zM1508 1101h5v5h-5zM1528 1101h5v5h-5zM1538 1101h5v5h-5zM1208 1106h5v2h-5zM1213 1106h5v2h-5zM1248 1106h5v2h-5zM1283 1106h5v2h-5zM1288 1106h5v2h-5zM1303 1106h5v2h-5zM1328 1106h5v2h-5zM1338 1106h5v2h-5zM1368 1106h5v2h-5zM1383 1106h5v2h-5zM1403 1106h5v2h-5zM1418 1106h5v2h-5zM1448 1106h5v2h-5zM1463 1106h5v2h-5zM1488 1106h5v2h-5zM1523 1106h5v2h-5zM1533 1106h5v2h-5z"/><path fill="rgb(72,150,204)" d="M1248 1096h5v5h-5zM1258 1096h5v5h-5zM1263 1096h5v5h-5zM1523 1096h5v5h-5zM1273 1101h5v5h-5zM1288 1101h5v5h-5zM1343 1101h5v5h-5zM1473 1101h5v5h-5zM1478 1101h5v5h-5zM1188 1106h5v2h-5zM1238 1106h5v2h-5zM1263 1106h5v2h-5zM1313 1106h5v2h-5zM1333 1106h5v2h-5zM1358 1106h5v2h-5zM1398 1106h5v2h-5zM1453 1106h5v2h-5zM1493 1106h5v2h-5z"/><path fill="rgb(60,138,192)" d="M1253 1096h5v5h-5zM1288 1096h5v5h-5zM1423 1096h5v5h-5zM1483 1096h5v5h-5zM1503 1096h5v5h-5zM1518 1096h5v5h-5zM1393 1101h5v5h-5zM1418 1101h5v5h-5zM1443 1101h5v5h-5zM1223 1106h5v2h-5zM1278 1106h5v2h-5zM1343 1106h5v2h-5zM1348 1106h5v2h-5zM1433 1106h5v2h-5zM1438 1106h5v2h-5zM1443 1106h5v2h-5zM1498 1106h5v2h-5zM1518 1106h5v2h-5zM1528 1106h5v2h-5zM1538 1106h5v2h-5z"/><path fill="rgb(48,126,180)" d="M1493 1096h5v5h-5z"/><path fill="rgb(78,156,210)" d="M1293 1101h5v5h-5zM1408 1101h5v5h-5zM1198 1106h5v2h-5zM1203 1106h5v2h-5zM1228 1106h5v2h-5zM1243 1106h5v2h-5z"/><path fill="rgb(42,120,174)" d="M1513 1101h5v5h-5z"/><path fill="rgb(84,162,216)" d="M1233 1106h5v2h-5z"/></svg>
<div class="a" style="left:1113px;top:1021px;width:75px;height:87px;background:linear-gradient(#b8b8b8,#ffffff)"></div>
<div class="a" style="left:1187.5px;top:1021px;width:1.5px;height:88px;background:#000"></div>
<div class="a" style="left:1187.5px;top:1107.5px;width:351.5px;height:1.5px;background:#000"></div>
<div class="a" style="left:1182px;top:1107px;width:6px;height:1.5px;background:#000"></div>
<div class="t" style="left:1158.0px;top:1103.6px;font-size:10px;color:#222;letter-spacing:0.134px;">0.00</div>
<div class="a" style="left:1187.9px;top:1109px;width:1.199999999999818px;height:5px;background:#000"></div>
<div class="t" style="left:1178.5px;top:1118.6px;font-size:10px;color:#222;letter-spacing:0.134px;">0.00</div>
<div class="a" style="left:1290.6000000000001px;top:1109px;width:1.199999999999818px;height:5px;background:#000"></div>
<div class="t" style="left:1281.2px;top:1118.6px;font-size:10px;color:#222;letter-spacing:0.134px;">0.25</div>
<div class="a" style="left:1393.3000000000002px;top:1109px;width:1.199999999999818px;height:5px;background:#000"></div>
<div class="t" style="left:1383.9px;top:1118.6px;font-size:10px;color:#222;letter-spacing:0.134px;">0.50</div>
<div class="a" style="left:1496.0px;top:1109px;width:1.199999999999818px;height:5px;background:#000"></div>
<div class="t" style="left:1486.6px;top:1118.6px;font-size:10px;color:#222;letter-spacing:0.134px;">0.75</div>
<div class="t" style="left:1.3px;top:1121.1px;font-size:16px;color:#000;letter-spacing:-0.693px;">2023-11-24_commands.txt</div>
<div class="t" style="left:397.0px;top:1121.1px;font-size:16px;color:#000;letter-spacing:-0.615px;">2023-11-23_commands.txt</div>
<div class="a" style="left:0px;top:1152px;width:913px;height:2px;background:#a8a8a8"></div>
<div class="a" style="left:-10px;top:1163px;width:84px;height:30px;background:#fdfdfd;border:1px solid #d0d0d0;border-radius:3px"></div>
<div class="t" style="left:0.0px;top:1171.8px;font-size:17.5px;color:#000;letter-spacing:-0.832px;">d-new)</div>
<svg class="a" style="left:58px;top:1175px" width="12" height="8"><path d="M1 1.5 L6 6.5 L11 1.5" fill="none" stroke="#333" stroke-width="1.1"/></svg>
<div class="t" style="left:90.5px;top:1171.8px;font-size:17.5px;color:#000;letter-spacing:-0.393px;">Filter:</div>
<div class="a" style="left:139px;top:1163px;width:160px;height:30px;background:#fdfdfd;border:1px solid #d0d0d0;border-radius:3px"></div>
<div class="t" style="left:143.6px;top:1171.0px;font-size:17.5px;color:#000;letter-spacing:-0.150px;">All</div>
<svg class="a" style="left:281px;top:1175px" width="12" height="8"><path d="M1 1.5 L6 6.5 L11 1.5" fill="none" stroke="#333" stroke-width="1.1"/></svg>
<div class="a" style="left:308px;top:1163px;width:137px;height:32px;background:#fdfdfd;border:1px solid #d0d0d0;border-radius:3px"></div>
<div class="t" style="left:311.7px;top:1171.8px;font-size:17.5px;color:#000;letter-spacing:-0.045px;">Clear thumbnails</div>
<div class="t" style="left:1136.0px;top:1145.8px;font-size:17.5px;color:#000;">lue: --</div>
<div class="t" style="left:1136.0px;top:1175.8px;font-size:17.5px;color:#000;">gle: --</div>
<div class="a" style="left:5px;top:19px;width:1560px;height:1002px;background:#f0f0f0;border-radius:8px 0 0 8px;box-shadow:0 0 2px rgba(0,0,0,.4)"></div>
<div class="a" style="left:5px;top:19px;width:1560px;height:37px;background:#eef3f8;border-radius:8px 0 0 0"></div>
<svg class="a" style="left:14px;top:27px" width="20" height="20"><circle cx="10" cy="10" r="10" fill="#1e1b4b"/><text x="10" y="13.8" text-anchor="middle" font-family="Liberation Sans" font-size="10" font-weight="bold" fill="#fff">&lt;x&gt;</text></svg>
<div class="t" style="left:41.0px;top:31.2px;font-size:14.6px;color:#000;">Spectroscopy stack: Zx31 (-106.8, -245.8) nm - SXM Viewer</div>
<div class="a" style="left:1392px;top:36px;width:13px;height:1px;background:#222"></div>
<div class="a" style="left:1450px;top:31px;width:12px;height:12px;border:1px solid #222;border-radius:1px"></div>
<svg class="a" style="left:1508px;top:30px" width="14" height="14"><path d="M1 1 L13 13 M13 1 L1 13" stroke="#222" stroke-width="1.1"/></svg>
<div class="a" style="left:23px;top:74px;width:210px;height:30px;background:#fff;border-bottom:1px solid #7a7a7a;border-radius:3px 3px 0 0"></div>
<div class="t" style="left:26.0px;top:81.8px;font-size:17.5px;color:#6d6d6d;letter-spacing:-0.307px;">Filter spectra...</div>
<div class="a" style="left:22px;top:111px;width:212px;height:893px;background:#f0f0f0;border:1px solid #7b8491"></div>
<div class="a" style="left:23px;top:112px;width:190px;height:871px;background:#fff"></div>
<div class="t" style="left:28.7px;top:123.3px;font-size:17.5px;color:#000;letter-spacing:-0.675px;">File</div>
<svg class="a" style="left:141px;top:112px" width="12" height="7"><path d="M1 1 L6 6 L11 1" fill="none" stroke="#555" stroke-width="1"/></svg>
<div class="a" style="left:23px;top:147px;width:189px;height:836px;overflow:hidden">
<div class="a" style="left:3px;top:5px;width:16px;height:16px;background:#005fb8;border-radius:3px"><svg width="16" height="16" style="position:absolute;left:0;top:0"><path d="M4 8.3 L6.8 11 L12 5.2" fill="none" stroke="#fff" stroke-width="1.1"/></svg></div>
<div class="t" style="left:25px;top:7.3px;font-size:17.6px;letter-spacing:-0.653px">KPFM-z_200_pm_00062.dat</div>
<div class="a" style="left:0;top:27px;width:190px;height:27px;background:#f5f5f5"></div>
<div class="a" style="left:3px;top:32px;width:16px;height:16px;background:#005fb8;border-radius:3px"><svg width="16" height="16" style="position:absolute;left:0;top:0"><path d="M4 8.3 L6.8 11 L12 5.2" fill="none" stroke="#fff" stroke-width="1.1"/></svg></div>
<div class="t" style="left:25px;top:34.3px;font-size:17.6px;letter-spacing:-0.653px">KPFM-z_200_pm_00061.dat</div>
<div class="a" style="left:3px;top:59px;width:16px;height:16px;background:#005fb8;border-radius:3px"><svg width="16" height="16" style="position:absolute;left:0;top:0"><path d="M4 8.3 L6.8 11 L12 5.2" fill="none" stroke="#fff" stroke-width="1.1"/></svg></div>
<div class="t" style="left:25px;top:61.3px;font-size:17.6px;letter-spacing:-0.653px">KPFM-z_200_pm_00060.dat</div>
<div class="a" style="left:0;top:81px;width:190px;height:27px;background:#f5f5f5"></div>
<div class="a" style="left:3px;top:86px;width:16px;height:16px;background:#005fb8;border-radius:3px"><svg width="16" height="16" style="position:absolute;left:0;top:0"><path d="M4 8.3 L6.8 11 L12 5.2" fill="none" stroke="#fff" stroke-width="1.1"/></svg></div>
<div class="t" style="left:25px;top:88.3px;font-size:17.6px;letter-spacing:-0.653px">KPFM-z_200_pm_00059.dat</div>
<div class="a" style="left:3px;top:113px;width:16px;height:16px;background:#005fb8;border-radius:3px"><svg width="16" height="16" style="position:absolute;left:0;top:0"><path d="M4 8.3 L6.8 11 L12 5.2" fill="none" stroke="#fff" stroke-width="1.1"/></svg></div>
<div class="t" style="left:25px;top:115.3px;font-size:17.6px;letter-spacing:-0.653px">KPFM-z_200_pm_00058.dat</div>
<div class="a" style="left:0;top:135px;width:190px;height:27px;background:#f5f5f5"></div>
<div class="a" style="left:3px;top:140px;width:16px;height:16px;background:#005fb8;border-radius:3px"><svg width="16" height="16" style="position:absolute;left:0;top:0"><path d="M4 8.3 L6.8 11 L12 5.2" fill="none" stroke="#fff" stroke-width="1.1"/></svg></div>
<div class="t" style="left:25px;top:142.3px;font-size:17.6px;letter-spacing:-0.653px">KPFM-z_200_pm_00057.dat</div>
<div class="a" style="left:3px;top:167px;width:16px;height:16px;background:#005fb8;border-radius:3px"><svg width="16" height="16" style="position:absolute;left:0;top:0"><path d="M4 8.3 L6.8 11 L12 5.2" fill="none" stroke="#fff" stroke-width="1.1"/></svg></div>
<div class="t" style="left:25px;top:169.3px;font-size:17.6px;letter-spacing:-0.653px">KPFM-z_200_pm_00056.dat</div>
<div class="a" style="left:0;top:189px;width:190px;height:27px;background:#f5f5f5"></div>
<div class="a" style="left:3px;top:194px;width:16px;height:16px;background:#005fb8;border-radius:3px"><svg width="16" height="16" style="position:absolute;left:0;top:0"><path d="M4 8.3 L6.8 11 L12 5.2" fill="none" stroke="#fff" stroke-width="1.1"/></svg></div>
<div class="t" style="left:25px;top:196.3px;font-size:17.6px;letter-spacing:-0.653px">KPFM-z_200_pm_00055.dat</div>
<div class="a" style="left:3px;top:221px;width:16px;height:16px;background:#005fb8;border-radius:3px"><svg width="16" height="16" style="position:absolute;left:0;top:0"><path d="M4 8.3 L6.8 11 L12 5.2" fill="none" stroke="#fff" stroke-width="1.1"/></svg></div>
<div class="t" style="left:25px;top:223.3px;font-size:17.6px;letter-spacing:-0.653px">KPFM-z_200_pm_00054.dat</div>
<div class="a" style="left:0;top:243px;width:190px;height:27px;background:#f5f5f5"></div>
<div class="a" style="left:3px;top:248px;width:16px;height:16px;background:#005fb8;border-radius:3px"><svg width="16" height="16" style="position:absolute;left:0;top:0"><path d="M4 8.3 L6.8 11 L12 5.2" fill="none" stroke="#fff" stroke-width="1.1"/></svg></div>
<div class="t" style="left:25px;top:250.3px;font-size:17.6px;letter-spacing:-0.653px">KPFM-z_200_pm_00053.dat</div>
<div class="a" style="left:3px;top:275px;width:16px;height:16px;background:#005fb8;border-radius:3px"><svg width="16" height="16" style="position:absolute;left:0;top:0"><path d="M4 8.3 L6.8 11 L12 5.2" fill="none" stroke="#fff" stroke-width="1.1"/></svg></div>
<div class="t" style="left:25px;top:277.3px;font-size:17.6px;letter-spacing:-0.653px">KPFM-z_200_pm_00052.dat</div>
<div class="a" style="left:0;top:297px;width:190px;height:27px;background:#f5f5f5"></div>
<div class="a" style="left:3px;top:302px;width:16px;height:16px;background:#005fb8;border-radius:3px"><svg width="16" height="16" style="position:absolute;left:0;top:0"><path d="M4 8.3 L6.8 11 L12 5.2" fill="none" stroke="#fff" stroke-width="1.1"/></svg></div>
<div class="t" style="left:25px;top:304.3px;font-size:17.6px;letter-spacing:-0.653px">KPFM-z_200_pm_00051.dat</div>
<div class="a" style="left:3px;top:329px;width:16px;height:16px;background:#005fb8;border-radius:3px"><svg width="16" height="16" style="position:absolute;left:0;top:0"><path d="M4 8.3 L6.8 11 L12 5.2" fill="none" stroke="#fff" stroke-width="1.1"/></svg></div>
<div class="t" style="left:25px;top:331.3px;font-size:17.6px;letter-spacing:-0.653px">KPFM-z_200_pm_00050.dat</div>
<div class="a" style="left:0;top:351px;width:190px;height:27px;background:#f5f5f5"></div>
<div class="a" style="left:3px;top:356px;width:16px;height:16px;background:#005fb8;border-radius:3px"><svg width="16" height="16" style="position:absolute;left:0;top:0"><path d="M4 8.3 L6.8 11 L12 5.2" fill="none" stroke="#fff" stroke-width="1.1"/></svg></div>
<div class="t" style="left:25px;top:358.3px;font-size:17.6px;letter-spacing:-0.653px">KPFM-z_200_pm_00049.dat</div>
<div class="a" style="left:3px;top:383px;width:16px;height:16px;background:#005fb8;border-radius:3px"><svg width="16" height="16" style="position:absolute;left:0;top:0"><path d="M4 8.3 L6.8 11 L12 5.2" fill="none" stroke="#fff" stroke-width="1.1"/></svg></div>
<div class="t" style="left:25px;top:385.3px;font-size:17.6px;letter-spacing:-0.653px">KPFM-z_200_pm_00048.dat</div>
<div class="a" style="left:0;top:405px;width:190px;height:27px;background:#f5f5f5"></div>
<div class="a" style="left:3px;top:410px;width:16px;height:16px;background:#005fb8;border-radius:3px"><svg width="16" height="16" style="position:absolute;left:0;top:0"><path d="M4 8.3 L6.8 11 L12 5.2" fill="none" stroke="#fff" stroke-width="1.1"/></svg></div>
<div class="t" style="left:25px;top:412.3px;font-size:17.6px;letter-spacing:-0.653px">KPFM-z_200_pm_00047.dat</div>
<div class="a" style="left:3px;top:437px;width:16px;height:16px;background:#005fb8;border-radius:3px"><svg width="16" height="16" style="position:absolute;left:0;top:0"><path d="M4 8.3 L6.8 11 L12 5.2" fill="none" stroke="#fff" stroke-width="1.1"/></svg></div>
<div class="t" style="left:25px;top:439.3px;font-size:17.6px;letter-spacing:-0.653px">KPFM-z_200_pm_00046.dat</div>
<div class="a" style="left:0;top:459px;width:190px;height:27px;background:#f5f5f5"></div>
<div class="a" style="left:3px;top:464px;width:16px;height:16px;background:#005fb8;border-radius:3px"><svg width="16" height="16" style="position:absolute;left:0;top:0"><path d="M4 8.3 L6.8 11 L12 5.2" fill="none" stroke="#fff" stroke-width="1.1"/></svg></div>
<div class="t" style="left:25px;top:466.3px;font-size:17.6px;letter-spacing:-0.653px">KPFM-z_200_pm_00045.dat</div>
<div class="a" style="left:3px;top:491px;width:16px;height:16px;background:#005fb8;border-radius:3px"><svg width="16" height="16" style="position:absolute;left:0;top:0"><path d="M4 8.3 L6.8 11 L12 5.2" fill="none" stroke="#fff" stroke-width="1.1"/></svg></div>
<div class="t" style="left:25px;top:493.3px;font-size:17.6px;letter-spacing:-0.653px">KPFM-z_200_pm_00044.dat</div>
<div class="a" style="left:0;top:513px;width:190px;height:27px;background:#f5f5f5"></div>
<div class="a" style="left:3px;top:518px;width:16px;height:16px;background:#005fb8;border-radius:3px"><svg width="16" height="16" style="position:absolute;left:0;top:0"><path d="M4 8.3 L6.8 11 L12 5.2" fill="none" stroke="#fff" stroke-width="1.1"/></svg></div>
<div class="t" style="left:25px;top:520.3px;font-size:17.6px;letter-spacing:-0.653px">KPFM-z_200_pm_00043.dat</div>
<div class="a" style="left:3px;top:545px;width:16px;height:16px;background:#005fb8;border-radius:3px"><svg width="16" height="16" style="position:absolute;left:0;top:0"><path d="M4 8.3 L6.8 11 L12 5.2" fill="none" stroke="#fff" stroke-width="1.1"/></svg></div>
<div class="t" style="left:25px;top:547.3px;font-size:17.6px;letter-spacing:-0.653px">KPFM-z_200_pm_00042.dat</div>
<div class="a" style="left:0;top:567px;width:190px;height:27px;background:#f5f5f5"></div>
<div class="a" style="left:3px;top:572px;width:16px;height:16px;background:#005fb8;border-radius:3px"><svg width="16" height="16" style="position:absolute;left:0;top:0"><path d="M4 8.3 L6.8 11 L12 5.2" fill="none" stroke="#fff" stroke-width="1.1"/></svg></div>
<div class="t" style="left:25px;top:574.3px;font-size:17.6px;letter-spacing:-0.653px">KPFM-z_200_pm_00041.dat</div>
<div class="a" style="left:3px;top:599px;width:16px;height:16px;background:#005fb8;border-radius:3px"><svg width="16" height="16" style="position:absolute;left:0;top:0"><path d="M4 8.3 L6.8 11 L12 5.2" fill="none" stroke="#fff" stroke-width="1.1"/></svg></div>
<div class="t" style="left:25px;top:601.3px;font-size:17.6px;letter-spacing:-0.653px">KPFM-z_200_pm_00040.dat</div>
<div class="a" style="left:0;top:621px;width:190px;height:27px;background:#f5f5f5"></div>
<div class="a" style="left:3px;top:626px;width:16px;height:16px;background:#005fb8;border-radius:3px"><svg width="16" height="16" style="position:absolute;left:0;top:0"><path d="M4 8.3 L6.8 11 L12 5.2" fill="none" stroke="#fff" stroke-width="1.1"/></svg></div>
<div class="t" style="left:25px;top:628.3px;font-size:17.6px;letter-spacing:-0.653px">KPFM-z_200_pm_00039.dat</div>
<div class="a" style="left:3px;top:653px;width:16px;height:16px;background:#005fb8;border-radius:3px"><svg width="16" height="16" style="position:absolute;left:0;top:0"><path d="M4 8.3 L6.8 11 L12 5.2" fill="none" stroke="#fff" stroke-width="1.1"/></svg></div>
<div class="t" style="left:25px;top:655.3px;font-size:17.6px;letter-spacing:-0.653px">KPFM-z_200_pm_00038.dat</div>
<div class="a" style="left:0;top:675px;width:190px;height:27px;background:#f5f5f5"></div>
<div class="a" style="left:3px;top:680px;width:16px;height:16px;background:#005fb8;border-radius:3px"><svg width="16" height="16" style="position:absolute;left:0;top:0"><path d="M4 8.3 L6.8 11 L12 5.2" fill="none" stroke="#fff" stroke-width="1.1"/></svg></div>
<div class="t" style="left:25px;top:682.3px;font-size:17.6px;letter-spacing:-0.653px">KPFM-z_200_pm_00037.dat</div>
<div class="a" style="left:3px;top:707px;width:16px;height:16px;background:#005fb8;border-radius:3px"><svg width="16" height="16" style="position:absolute;left:0;top:0"><path d="M4 8.3 L6.8 11 L12 5.2" fill="none" stroke="#fff" stroke-width="1.1"/></svg></div>
<div class="t" style="left:25px;top:709.3px;font-size:17.6px;letter-spacing:-0.653px">KPFM-z_200_pm_00036.dat</div>
<div class="a" style="left:0;top:729px;width:190px;height:27px;background:#f5f5f5"></div>
<div class="a" style="left:3px;top:734px;width:16px;height:16px;background:#005fb8;border-radius:3px"><svg width="16" height="16" style="position:absolute;left:0;top:0"><path d="M4 8.3 L6.8 11 L12 5.2" fill="none" stroke="#fff" stroke-width="1.1"/></svg></div>
<div class="t" style="left:25px;top:736.3px;font-size:17.6px;letter-spacing:-0.653px">KPFM-z_200_pm_00035.dat</div>
<div class="a" style="left:3px;top:761px;width:16px;height:16px;background:#005fb8;border-radius:3px"><svg width="16" height="16" style="position:absolute;left:0;top:0"><path d="M4 8.3 L6.8 11 L12 5.2" fill="none" stroke="#fff" stroke-width="1.1"/></svg></div>
<div class="t" style="left:25px;top:763.3px;font-size:17.6px;letter-spacing:-0.653px">KPFM-z_200_pm_00034.dat</div>
<div class="a" style="left:0;top:783px;width:190px;height:27px;background:#f5f5f5"></div>
<div class="a" style="left:3px;top:788px;width:16px;height:16px;background:#005fb8;border-radius:3px"><svg width="16" height="16" style="position:absolute;left:0;top:0"><path d="M4 8.3 L6.8 11 L12 5.2" fill="none" stroke="#fff" stroke-width="1.1"/></svg></div>
<div class="t" style="left:25px;top:790.3px;font-size:17.6px;letter-spacing:-0.653px">KPFM-z_200_pm_00033.dat</div>
<div class="a" style="left:3px;top:815px;width:16px;height:16px;background:#005fb8;border-radius:3px"><svg width="16" height="16" style="position:absolute;left:0;top:0"><path d="M4 8.3 L6.8 11 L12 5.2" fill="none" stroke="#fff" stroke-width="1.1"/></svg></div>
<div class="t" style="left:25px;top:817.3px;font-size:17.6px;letter-spacing:-0.653px">KPFM-z_200_pm_00032.dat</div>
</div>
<div class="a" style="left:213px;top:112px;width:20px;height:891px;background:#f0f0f0"></div>
<div class="a" style="left:221px;top:133px;width:3px;height:800px;background:#888;border-radius:2px"></div>
<div class="a" style="left:45px;top:991px;width:21px;height:3px;background:#888;border-radius:2px"></div>
<div class="a" style="left:248px;top:73px;width:868px;height:707px;background:#fff"></div>
<svg class="a" style="left:0;top:0" width="1539" height="1195">
<defs><clipPath id="ax"><rect x="357.5" y="158.5" width="672.0" height="544.0"/></clipPath></defs>
<path d="M412.7 158.5V702.5M489.2 158.5V702.5M565.7 158.5V702.5M642.1 158.5V702.5M718.6 158.5V702.5M795.0 158.5V702.5M871.5 158.5V702.5M947.9 158.5V702.5M1024.4 158.5V702.5M357.5 193.1H1029.5M357.5 262.1H1029.5M357.5 331.1H1029.5M357.5 400.1H1029.5M357.5 469.1H1029.5M357.5 538.1H1029.5M357.5 607.1H1029.5M357.5 676.1H1029.5" stroke="#dedede" stroke-width="1" stroke-dasharray="4 3" fill="none"/>
<g clip-path="url(#ax)" fill="none" stroke-width="3.4" stroke-linejoin="round" stroke-linecap="round">
<path d="M388 477 389.5 489 391 486 392.5 457 394 465 395.5 460 397 470 398.5 461 400 468 401.5 437 403 473 404.5 452 406 459 407.5 442 409 443 410.5 450 412 452 413.5 439 415 430 416.5 445 418 424 419.5 416 421 428 422.5 422 424 401 425.5 416 427 418 428.5 408 430 403 431.5 418 433 426 434.5 411 436 404 437.5 414 439 416 440.5 402 442 410 443.5 414 445 396 446.5 371 448 399 449.5 398 451 406 452.5 378 454 383 455.5 379 457 367 458.5 386 460 383 461.5 373 463 395 464.5 387 466 383 467.5 379 469 383 470.5 356 472 376 473.5 374 475 346 476.5 368 478 360 479.5 370 481 354 482.5 358 484 360 485.5 345 487 359 488.5 350 490 339 491.5 342 493 359 494.5 349 496 342 497.5 339 499 354 500.5 359 502 320 503.5 346 505 340 506.5 332 508 320 509.5 344 511 312 512.5 320 514 340 515.5 307 517 292 518.5 307 520 313 521.5 335 523 339 524.5 296 526 308 527.5 321 529 329 530.5 315 532 301 533.5 307 535 306 536.5 291 538 296 539.5 307 541 305 542.5 282 544 296 545.5 274 547 291 548.5 308 550 292 551.5 277 553 306 554.5 289 556 312 557.5 288 559 281 560.5 267 562 299 563.5 311 565 273 566.5 274 568 286 569.5 269 571 274 572.5 272 574 262 575.5 286 577 273 578.5 282 580 250 581.5 273 583 245 584.5 238 586 275 587.5 259 589 271 590.5 258 592 277 593.5 270 595 272 596.5 242 598 236 599.5 250 601 249 602.5 233 604 249 605.5 253 607 256 608.5 248 610 230 611.5 250 613 252 614.5 261 616 254 617.5 240 619 238 620.5 257 622 253 623.5 240 625 266 626.5 233 628 245 629.5 245 631 246 632.5 245 634 240 635.5 239 637 220 638.5 234 640 227 641.5 236 643 229 644.5 240 646 241 647.5 235 649 234 650.5 231 652 225 653.5 227 655 216 656.5 232 658 227 659.5 233 661 211 662.5 235 664 216 665.5 216 667 221 668.5 217 670 226 671.5 216 673 210 674.5 212 676 235 677.5 220 679 207 680.5 218 682 201 683.5 238 685 201 686.5 222 688 223 689.5 200 691 219 692.5 226 694 220 695.5 217 697 224 698.5 215 700 209 701.5 212 703 219 704.5 202 706 221 707.5 203 709 183 710.5 215 712 229 713.5 221 715 204 716.5 217 718 204 719.5 208 721 210 722.5 183 724 198 725.5 197 727 200 728.5 191 730 191 731.5 197 733 216 734.5 225 736 206 737.5 216 739 203 740.5 185 742 208 743.5 211 745 201 746.5 209 748 212 749.5 196 751 189 752.5 203 754 203 755.5 201 757 216 758.5 224 760 200 761.5 193 763 215 764.5 195 766 213 767.5 201 769 213 770.5 227 772 214 773.5 184 775 212 776.5 219 778 209 779.5 199 781 218 782.5 192 784 211 785.5 205 787 193 788.5 219 790 210 791.5 193 793 213 794.5 202 796 185 797.5 199 799 210 800.5 214 802 209 803.5 208 805 211 806.5 205 808 221 809.5 210 811 211 812.5 214 814 197 815.5 190 817 226 818.5 213 820 206 821.5 211 823 205 824.5 213 826 203 827.5 214 829 187 830.5 226 832 206 833.5 195 835 210 836.5 209 838 215 839.5 201 841 218 842.5 254 844 200 845.5 219 847 212 848.5 218 850 196 851.5 204 853 222 854.5 205 856 236 857.5 210 859 220 860.5 251 862 211 863.5 210 865 220 866.5 220 868 230 869.5 223 871 214 872.5 225 874 252 875.5 238 877 193 878.5 223 880 216 881.5 233 883 224 884.5 248 886 238 887.5 238 889 231 890.5 229 892 233 893.5 244 895 237 896.5 228 898 246 899.5 235 901 232 902.5 225 904 228 905.5 228 907 205 908.5 248 910 243 911.5 230 913 250 914.5 244 916 244 917.5 205 919 239 920.5 247 922 260 923.5 264 925 260 926.5 232 928 222 929.5 253 931 248 932.5 259 934 247 935.5 252 937 234 938.5 256 940 247 941.5 257 943 259 944.5 253 946 259 947.5 256 949 265 950.5 263 952 253 953.5 253 955 280 956.5 253 958 273 959.5 267 961 258 962.5 257 964 267 965.5 270 967 274 968.5 255 970 263 971.5 269 973 289 974.5 246 976 278 977.5 268 979 280 980.5 271 982 281 983.5 296 985 283 986.5 285 988 285 989.5 274 991 289 992.5 282 994 277 995.5 281 997 285 998.5 297 1000 289" stroke="#4e79a7"/>
<path d="M388 476 389.5 483 391 484 392.5 471 394 458 395.5 477 397 456 398.5 456 400 452 401.5 471 403 458 404.5 433 406 464 407.5 476 409 471 410.5 443 412 448 413.5 451 415 453 416.5 442 418 428 419.5 446 421 442 422.5 419 424 428 425.5 433 427 428 428.5 432 430 433 431.5 428 433 419 434.5 403 436 423 437.5 430 439 433 440.5 410 442 409 443.5 423 445 421 446.5 407 448 407 449.5 391 451 404 452.5 387 454 393 455.5 391 457 383 458.5 366 460 377 461.5 377 463 383 464.5 378 466 385 467.5 386 469 376 470.5 366 472 374 473.5 368 475 355 476.5 352 478 364 479.5 356 481 388 482.5 361 484 358 485.5 345 487 378 488.5 346 490 350 491.5 344 493 350 494.5 349 496 360 497.5 331 499 345 500.5 360 502 336 503.5 339 505 329 506.5 309 508 335 509.5 343 511 328 512.5 311 514 333 515.5 330 517 338 518.5 336 520 314 521.5 328 523 302 524.5 327 526 304 527.5 330 529 328 530.5 309 532 312 533.5 303 535 288 536.5 308 538 310 539.5 291 541 314 542.5 300 544 308 545.5 294 547 281 548.5 308 550 305 551.5 296 553 291 554.5 292 556 292 557.5 287 559 269 560.5 299 562 272 563.5 284 565 283 566.5 288 568 266 569.5 296 571 289 572.5 289 574 294 575.5 270 577 243 578.5 280 580 290 581.5 287 583 268 584.5 271 586 275 587.5 250 589 262 590.5 261 592 277 593.5 259 595 278 596.5 257 598 245 599.5 287 601 251 602.5 267 604 279 605.5 253 607 244 608.5 268 610 257 611.5 242 613 243 614.5 249 616 263 617.5 235 619 258 620.5 268 622 263 623.5 264 625 261 626.5 229 628 260 629.5 249 631 226 632.5 232 634 226 635.5 230 637 241 638.5 228 640 226 641.5 233 643 246 644.5 235 646 236 647.5 251 649 232 650.5 242 652 223 653.5 238 655 235 656.5 235 658 227 659.5 220 661 228 662.5 225 664 241 665.5 239 667 215 668.5 235 670 222 671.5 232 673 213 674.5 210 676 237 677.5 230 679 211 680.5 203 682 218 683.5 210 685 218 686.5 229 688 238 689.5 217 691 236 692.5 233 694 215 695.5 201 697 228 698.5 225 700 243 701.5 234 703 226 704.5 236 706 205 707.5 216 709 213 710.5 226 712 222 713.5 182 715 230 716.5 205 718 223 719.5 209 721 217 722.5 221 724 216 725.5 203 727 228 728.5 217 730 212 731.5 220 733 206 734.5 233 736 205 737.5 216 739 215 740.5 201 742 198 743.5 214 745 215 746.5 226 748 216 749.5 199 751 216 752.5 220 754 222 755.5 214 757 197 758.5 223 760 202 761.5 217 763 193 764.5 219 766 202 767.5 222 769 230 770.5 223 772 197 773.5 184 775 201 776.5 212 778 213 779.5 212 781 189 782.5 217 784 218 785.5 229 787 210 788.5 213 790 191 791.5 197 793 204 794.5 198 796 214 797.5 223 799 207 800.5 207 802 206 803.5 206 805 206 806.5 209 808 216 809.5 217 811 202 812.5 214 814 215 815.5 233 817 214 818.5 223 820 215 821.5 210 823 208 824.5 206 826 216 827.5 209 829 212 830.5 230 832 215 833.5 230 835 220 836.5 227 838 211 839.5 220 841 248 842.5 228 844 230 845.5 222 847 230 848.5 208 850 212 851.5 226 853 231 854.5 218 856 208 857.5 219 859 221 860.5 211 862 209 863.5 224 865 200 866.5 215 868 219 869.5 215 871 230 872.5 223 874 227 875.5 211 877 221 878.5 235 880 234 881.5 225 883 235 884.5 234 886 234 887.5 250 889 229 890.5 236 892 239 893.5 232 895 223 896.5 244 898 240 899.5 238 901 238 902.5 239 904 229 905.5 243 907 221 908.5 241 910 225 911.5 239 913 251 914.5 241 916 239 917.5 251 919 243 920.5 242 922 243 923.5 265 925 256 926.5 255 928 237 929.5 258 931 238 932.5 258 934 241 935.5 276 937 236 938.5 259 940 265 941.5 238 943 256 944.5 275 946 272 947.5 242 949 256 950.5 249 952 252 953.5 257 955 285 956.5 267 958 264 959.5 264 961 276 962.5 260 964 260 965.5 287 967 251 968.5 270 970 279 971.5 294 973 272 974.5 280 976 292 977.5 286 979 292 980.5 292 982 285 983.5 290 985 294 986.5 272 988 304 989.5 265 991 278 992.5 305 994 295 995.5 284 997 297 998.5 305 1000 288" stroke="#f28e2b"/>
<path d="M388 490 389.5 474 391 473 392.5 472 394 451 395.5 445 397 481 398.5 464 400 467 401.5 439 403 458 404.5 471 406 461 407.5 444 409 473 410.5 454 412 448 413.5 463 415 429 416.5 452 418 432 419.5 434 421 433 422.5 432 424 438 425.5 438 427 435 428.5 446 430 447 431.5 435 433 433 434.5 419 436 390 437.5 426 439 418 440.5 425 442 369 443.5 442 445 396 446.5 409 448 417 449.5 389 451 392 452.5 379 454 383 455.5 376 457 397 458.5 395 460 382 461.5 405 463 404 464.5 387 466 383 467.5 381 469 377 470.5 395 472 381 473.5 373 475 373 476.5 380 478 368 479.5 374 481 368 482.5 382 484 378 485.5 344 487 346 488.5 369 490 354 491.5 367 493 360 494.5 361 496 352 497.5 355 499 356 500.5 332 502 337 503.5 334 505 363 506.5 346 508 345 509.5 342 511 332 512.5 328 514 345 515.5 330 517 350 518.5 333 520 331 521.5 326 523 326 524.5 326 526 341 527.5 336 529 309 530.5 306 532 327 533.5 307 535 309 536.5 310 538 287 539.5 309 541 310 542.5 309 544 309 545.5 290 547 331 548.5 307 550 313 551.5 296 553 301 554.5 296 556 297 557.5 287 559 287 560.5 292 562 302 563.5 298 565 284 566.5 294 568 261 569.5 299 571 287 572.5 289 574 290 575.5 279 577 293 578.5 277 580 287 581.5 275 583 282 584.5 281 586 269 587.5 267 589 271 590.5 277 592 303 593.5 255 595 248 596.5 262 598 251 599.5 262 601 264 602.5 255 604 257 605.5 243 607 265 608.5 254 610 273 611.5 272 613 240 614.5 255 616 243 617.5 265 619 238 620.5 255 622 275 623.5 240 625 255 626.5 252 628 238 629.5 261 631 251 632.5 251 634 241 635.5 256 637 226 638.5 252 640 239 641.5 247 643 236 644.5 234 646 244 647.5 242 649 238 650.5 238 652 241 653.5 239 655 213 656.5 229 658 235 659.5 245 661 251 662.5 226 664 257 665.5 236 667 226 668.5 228 670 227 671.5 242 673 230 674.5 231 676 241 677.5 250 679 214 680.5 228 682 229 683.5 249 685 256 686.5 227 688 232 689.5 237 691 239 692.5 223 694 235 695.5 214 697 176 698.5 209 700 227 701.5 233 703 199 704.5 203 706 210 707.5 185 709 226 710.5 233 712 189 713.5 230 715 219 716.5 237 718 224 719.5 218 721 222 722.5 230 724 222 725.5 214 727 203 728.5 224 730 219 731.5 239 733 218 734.5 217 736 211 737.5 226 739 216 740.5 210 742 222 743.5 237 745 212 746.5 185 748 230 749.5 208 751 248 752.5 215 754 228 755.5 203 757 216 758.5 229 760 222 761.5 211 763 244 764.5 225 766 214 767.5 210 769 214 770.5 232 772 208 773.5 217 775 204 776.5 231 778 215 779.5 227 781 223 782.5 211 784 225 785.5 228 787 205 788.5 225 790 257 791.5 214 793 225 794.5 203 796 223 797.5 212 799 227 800.5 218 802 206 803.5 231 805 217 806.5 208 808 220 809.5 209 811 224 812.5 219 814 216 815.5 228 817 207 818.5 227 820 199 821.5 239 823 224 824.5 219 826 214 827.5 229 829 221 830.5 221 832 235 833.5 219 835 222 836.5 229 838 237 839.5 224 841 227 842.5 226 844 235 845.5 243 847 217 848.5 226 850 227 851.5 235 853 245 854.5 229 856 225 857.5 242 859 212 860.5 222 862 226 863.5 232 865 235 866.5 227 868 253 869.5 195 871 232 872.5 247 874 244 875.5 235 877 240 878.5 246 880 236 881.5 245 883 228 884.5 226 886 221 887.5 230 889 228 890.5 255 892 236 893.5 245 895 232 896.5 241 898 241 899.5 213 901 255 902.5 227 904 245 905.5 277 907 238 908.5 249 910 231 911.5 249 913 231 914.5 258 916 235 917.5 232 919 238 920.5 236 922 251 923.5 265 925 231 926.5 243 928 248 929.5 259 931 231 932.5 261 934 265 935.5 233 937 275 938.5 239 940 261 941.5 277 943 246 944.5 245 946 254 947.5 255 949 266 950.5 253 952 264 953.5 265 955 269 956.5 263 958 277 959.5 274 961 264 962.5 296 964 253 965.5 286 967 270 968.5 284 970 287 971.5 291 973 299 974.5 274 976 317 977.5 290 979 278 980.5 272 982 315 983.5 308 985 291 986.5 300 988 308 989.5 295 991 290 992.5 289 994 303 995.5 299 997 286 998.5 309 1000 282" stroke="#e15759"/>
<path d="M388 478 389.5 500 391 497 392.5 488 394 489 395.5 496 397 469 398.5 460 400 462 401.5 478 403 471 404.5 450 406 478 407.5 464 409 466 410.5 470 412 451 413.5 441 415 422 416.5 441 418 445 419.5 451 421 459 422.5 432 424 448 425.5 439 427 434 428.5 447 430 429 431.5 446 433 425 434.5 417 436 422 437.5 407 439 408 440.5 417 442 418 443.5 404 445 392 446.5 398 448 413 449.5 415 451 396 452.5 408 454 406 455.5 413 457 392 458.5 414 460 393 461.5 410 463 399 464.5 380 466 386 467.5 391 469 374 470.5 369 472 374 473.5 388 475 377 476.5 366 478 366 479.5 379 481 362 482.5 374 484 364 485.5 368 487 337 488.5 378 490 374 491.5 377 493 370 494.5 340 496 373 497.5 356 499 364 500.5 344 502 348 503.5 347 505 366 506.5 349 508 343 509.5 330 511 347 512.5 341 514 333 515.5 348 517 344 518.5 335 520 336 521.5 333 523 339 524.5 337 526 328 527.5 318 529 323 530.5 334 532 311 533.5 326 535 316 536.5 292 538 317 539.5 327 541 307 542.5 306 544 324 545.5 299 547 291 548.5 305 550 314 551.5 313 553 299 554.5 300 556 304 557.5 292 559 291 560.5 287 562 306 563.5 294 565 327 566.5 301 568 285 569.5 292 571 295 572.5 294 574 294 575.5 293 577 285 578.5 293 580 309 581.5 279 583 278 584.5 289 586 294 587.5 288 589 292 590.5 277 592 274 593.5 283 595 282 596.5 292 598 290 599.5 252 601 279 602.5 262 604 246 605.5 272 607 265 608.5 262 610 251 611.5 235 613 261 614.5 234 616 260 617.5 262 619 248 620.5 262 622 258 623.5 245 625 245 626.5 255 628 266 629.5 256 631 248 632.5 255 634 232 635.5 240 637 246 638.5 249 640 245 641.5 245 643 235 644.5 241 646 249 647.5 225 649 232 650.5 240 652 260 653.5 243 655 259 656.5 256 658 236 659.5 240 661 227 662.5 252 664 247 665.5 245 667 233 668.5 242 670 239 671.5 239 673 249 674.5 226 676 223 677.5 234 679 239 680.5 235 682 230 683.5 241 685 233 686.5 210 688 219 689.5 207 691 227 692.5 224 694 234 695.5 252 697 222 698.5 228 700 223 701.5 196 703 218 704.5 208 706 229 707.5 216 709 211 710.5 231 712 224 713.5 214 715 216 716.5 220 718 232 719.5 239 721 209 722.5 235 724 209 725.5 226 727 233 728.5 211 730 231 731.5 207 733 216 734.5 212 736 239 737.5 239 739 217 740.5 226 742 214 743.5 236 745 235 746.5 230 748 219 749.5 216 751 219 752.5 234 754 209 755.5 221 757 237 758.5 229 760 238 761.5 224 763 224 764.5 234 766 226 767.5 223 769 214 770.5 203 772 236 773.5 215 775 211 776.5 229 778 210 779.5 205 781 214 782.5 219 784 223 785.5 226 787 231 788.5 219 790 224 791.5 219 793 214 794.5 225 796 225 797.5 241 799 228 800.5 214 802 228 803.5 219 805 239 806.5 204 808 215 809.5 199 811 224 812.5 222 814 206 815.5 203 817 226 818.5 240 820 240 821.5 220 823 230 824.5 216 826 210 827.5 239 829 229 830.5 223 832 222 833.5 230 835 231 836.5 224 838 231 839.5 228 841 224 842.5 221 844 239 845.5 224 847 217 848.5 250 850 244 851.5 237 853 229 854.5 234 856 217 857.5 233 859 236 860.5 231 862 239 863.5 226 865 237 866.5 218 868 216 869.5 230 871 223 872.5 232 874 238 875.5 232 877 249 878.5 232 880 250 881.5 248 883 234 884.5 257 886 227 887.5 230 889 244 890.5 252 892 227 893.5 232 895 237 896.5 246 898 248 899.5 248 901 245 902.5 241 904 234 905.5 245 907 256 908.5 262 910 246 911.5 264 913 239 914.5 262 916 243 917.5 258 919 246 920.5 246 922 252 923.5 274 925 252 926.5 266 928 262 929.5 264 931 265 932.5 261 934 251 935.5 265 937 269 938.5 260 940 271 941.5 257 943 276 944.5 262 946 261 947.5 280 949 284 950.5 267 952 264 953.5 285 955 244 956.5 291 958 291 959.5 267 961 292 962.5 284 964 286 965.5 257 967 277 968.5 282 970 280 971.5 265 973 284 974.5 257 976 286 977.5 281 979 290 980.5 286 982 293 983.5 297 985 314 986.5 280 988 315 989.5 290 991 289 992.5 284 994 310 995.5 286 997 313 998.5 308 1000 299" stroke="#76b7b2"/>
<path d="M388 487 389.5 504 391 465 392.5 475 394 485 395.5 487 397 481 398.5 482 400 462 401.5 479 403 460 404.5 456 406 474 407.5 458 409 445 410.5 470 412 449 413.5 465 415 482 416.5 452 418 463 419.5 459 421 435 422.5 432 424 445 425.5 419 427 441 428.5 442 430 442 431.5 440 433 448 434.5 428 436 445 437.5 434 439 432 440.5 422 442 433 443.5 412 445 411 446.5 429 448 408 449.5 403 451 403 452.5 409 454 412 455.5 416 457 415 458.5 414 460 392 461.5 395 463 384 464.5 405 466 387 467.5 389 469 389 470.5 388 472 359 473.5 385 475 377 476.5 381 478 369 479.5 380 481 383 482.5 396 484 386 485.5 379 487 371 488.5 355 490 363 491.5 351 493 364 494.5 375 496 373 497.5 370 499 353 500.5 368 502 353 503.5 332 505 354 506.5 352 508 330 509.5 342 511 320 512.5 340 514 358 515.5 335 517 356 518.5 342 520 330 521.5 317 523 344 524.5 342 526 316 527.5 327 529 343 530.5 321 532 332 533.5 305 535 315 536.5 328 538 309 539.5 305 541 304 542.5 314 544 286 545.5 315 547 321 548.5 331 550 308 551.5 329 553 310 554.5 306 556 313 557.5 323 559 322 560.5 312 562 302 563.5 300 565 303 566.5 291 568 299 569.5 317 571 283 572.5 284 574 282 575.5 300 577 304 578.5 306 580 286 581.5 289 583 296 584.5 288 586 289 587.5 287 589 286 590.5 281 592 286 593.5 264 595 264 596.5 264 598 277 599.5 268 601 282 602.5 289 604 260 605.5 264 607 276 608.5 287 610 279 611.5 274 613 268 614.5 263 616 271 617.5 264 619 267 620.5 258 622 246 623.5 253 625 258 626.5 248 628 259 629.5 244 631 255 632.5 260 634 266 635.5 256 637 261 638.5 248 640 246 641.5 245 643 243 644.5 250 646 232 647.5 263 649 258 650.5 241 652 229 653.5 251 655 251 656.5 260 658 267 659.5 248 661 243 662.5 242 664 223 665.5 228 667 233 668.5 235 670 223 671.5 227 673 254 674.5 233 676 248 677.5 244 679 239 680.5 234 682 236 683.5 227 685 235 686.5 237 688 237 689.5 236 691 231 692.5 246 694 232 695.5 229 697 244 698.5 222 700 232 701.5 249 703 233 704.5 247 706 228 707.5 225 709 229 710.5 224 712 226 713.5 225 715 238 716.5 233 718 226 719.5 220 721 257 722.5 226 724 243 725.5 215 727 219 728.5 232 730 215 731.5 215 733 226 734.5 218 736 223 737.5 228 739 235 740.5 228 742 218 743.5 240 745 241 746.5 221 748 205 749.5 214 751 237 752.5 220 754 200 755.5 220 757 242 758.5 222 760 220 761.5 217 763 212 764.5 256 766 220 767.5 226 769 221 770.5 236 772 213 773.5 203 775 218 776.5 228 778 250 779.5 224 781 215 782.5 222 784 216 785.5 216 787 226 788.5 201 790 215 791.5 238 793 225 794.5 227 796 220 797.5 230 799 231 800.5 234 802 218 803.5 234 805 221 806.5 228 808 236 809.5 244 811 223 812.5 216 814 230 815.5 242 817 223 818.5 256 820 177 821.5 246 823 243 824.5 242 826 221 827.5 246 829 244 830.5 245 832 227 833.5 229 835 247 836.5 236 838 229 839.5 224 841 236 842.5 219 844 241 845.5 236 847 218 848.5 240 850 238 851.5 239 853 222 854.5 230 856 247 857.5 223 859 234 860.5 251 862 236 863.5 233 865 249 866.5 258 868 245 869.5 227 871 224 872.5 240 874 223 875.5 243 877 254 878.5 212 880 243 881.5 249 883 240 884.5 251 886 253 887.5 260 889 278 890.5 250 892 240 893.5 239 895 237 896.5 259 898 245 899.5 258 901 256 902.5 272 904 267 905.5 267 907 248 908.5 253 910 243 911.5 251 913 260 914.5 246 916 253 917.5 283 919 260 920.5 246 922 249 923.5 263 925 264 926.5 264 928 276 929.5 270 931 255 932.5 277 934 264 935.5 291 937 264 938.5 270 940 266 941.5 270 943 279 944.5 273 946 289 947.5 281 949 295 950.5 279 952 294 953.5 294 955 280 956.5 310 958 300 959.5 290 961 283 962.5 285 964 285 965.5 291 967 276 968.5 290 970 284 971.5 310 973 301 974.5 312 976 321 977.5 301 979 319 980.5 302 982 306 983.5 289 985 302 986.5 318 988 308 989.5 300 991 305 992.5 298 994 300 995.5 292 997 322 998.5 317 1000 310" stroke="#59a14f"/>
<path d="M388 498 389.5 508 391 502 392.5 485 394 482 395.5 492 397 493 398.5 480 400 468 401.5 484 403 467 404.5 472 406 471 407.5 468 409 464 410.5 469 412 463 413.5 458 415 471 416.5 455 418 457 419.5 459 421 433 422.5 434 424 415 425.5 451 427 449 428.5 438 430 436 431.5 437 433 431 434.5 436 436 429 437.5 423 439 447 440.5 440 442 423 443.5 449 445 451 446.5 436 448 433 449.5 412 451 413 452.5 397 454 408 455.5 421 457 405 458.5 389 460 424 461.5 426 463 419 464.5 384 466 408 467.5 388 469 385 470.5 402 472 409 473.5 384 475 385 476.5 374 478 386 479.5 374 481 377 482.5 389 484 379 485.5 379 487 379 488.5 384 490 388 491.5 359 493 352 494.5 374 496 375 497.5 381 499 373 500.5 382 502 367 503.5 352 505 355 506.5 347 508 348 509.5 354 511 349 512.5 361 514 345 515.5 368 517 335 518.5 353 520 339 521.5 358 523 328 524.5 348 526 303 527.5 329 529 354 530.5 336 532 334 533.5 341 535 357 536.5 317 538 327 539.5 321 541 333 542.5 316 544 305 545.5 305 547 328 548.5 321 550 327 551.5 299 553 305 554.5 308 556 322 557.5 317 559 309 560.5 298 562 310 563.5 302 565 316 566.5 324 568 305 569.5 290 571 328 572.5 297 574 302 575.5 300 577 299 578.5 297 580 298 581.5 278 583 281 584.5 291 586 293 587.5 292 589 287 590.5 268 592 276 593.5 279 595 287 596.5 281 598 305 599.5 278 601 279 602.5 263 604 300 605.5 280 607 276 608.5 270 610 277 611.5 271 613 288 614.5 264 616 268 617.5 256 619 277 620.5 274 622 280 623.5 274 625 274 626.5 267 628 276 629.5 271 631 268 632.5 246 634 258 635.5 255 637 237 638.5 275 640 276 641.5 271 643 265 644.5 274 646 239 647.5 263 649 233 650.5 236 652 256 653.5 258 655 260 656.5 260 658 244 659.5 233 661 242 662.5 252 664 246 665.5 231 667 259 668.5 235 670 242 671.5 236 673 238 674.5 252 676 238 677.5 229 679 237 680.5 232 682 226 683.5 253 685 255 686.5 226 688 252 689.5 261 691 225 692.5 245 694 237 695.5 248 697 206 698.5 245 700 234 701.5 243 703 238 704.5 211 706 236 707.5 236 709 243 710.5 248 712 235 713.5 227 715 243 716.5 226 718 243 719.5 232 721 232 722.5 235 724 216 725.5 230 727 220 728.5 243 730 246 731.5 216 733 207 734.5 234 736 225 737.5 221 739 253 740.5 227 742 218 743.5 217 745 234 746.5 248 748 234 749.5 217 751 225 752.5 251 754 211 755.5 230 757 243 758.5 233 760 228 761.5 220 763 232 764.5 236 766 232 767.5 241 769 232 770.5 240 772 232 773.5 240 775 227 776.5 249 778 244 779.5 238 781 220 782.5 233 784 198 785.5 227 787 233 788.5 221 790 233 791.5 238 793 251 794.5 232 796 214 797.5 206 799 230 800.5 242 802 245 803.5 226 805 225 806.5 225 808 231 809.5 234 811 240 812.5 235 814 256 815.5 236 817 240 818.5 246 820 245 821.5 228 823 218 824.5 221 826 228 827.5 243 829 240 830.5 246 832 251 833.5 229 835 266 836.5 268 838 245 839.5 237 841 242 842.5 224 844 240 845.5 231 847 240 848.5 238 850 264 851.5 232 853 246 854.5 238 856 261 857.5 255 859 227 860.5 234 862 248 863.5 230 865 251 866.5 247 868 235 869.5 244 871 253 872.5 248 874 250 875.5 254 877 249 878.5 265 880 237 881.5 257 883 246 884.5 257 886 263 887.5 261 889 262 890.5 263 892 262 893.5 254 895 265 896.5 261 898 268 899.5 254 901 262 902.5 238 904 252 905.5 259 907 273 908.5 276 910 265 911.5 252 913 270 914.5 276 916 275 917.5 259 919 256 920.5 258 922 257 923.5 281 925 274 926.5 295 928 290 929.5 284 931 266 932.5 282 934 270 935.5 260 937 263 938.5 269 940 292 941.5 275 943 265 944.5 282 946 269 947.5 269 949 305 950.5 276 952 297 953.5 294 955 261 956.5 287 958 289 959.5 286 961 299 962.5 292 964 273 965.5 295 967 282 968.5 293 970 299 971.5 296 973 310 974.5 298 976 295 977.5 320 979 310 980.5 302 982 304 983.5 301 985 307 986.5 297 988 324 989.5 302 991 286 992.5 301 994 312 995.5 307 997 284 998.5 324 1000 304" stroke="#edc948"/>
<path d="M388 506 389.5 499 391 488 392.5 506 394 481 395.5 478 397 509 398.5 493 400 496 401.5 499 403 469 404.5 496 406 480 407.5 482 409 483 410.5 480 412 466 413.5 468 415 468 416.5 476 418 438 419.5 469 421 449 422.5 481 424 460 425.5 472 427 442 428.5 468 430 452 431.5 450 433 449 434.5 414 436 417 437.5 420 439 437 440.5 432 442 441 443.5 434 445 442 446.5 419 448 429 449.5 416 451 409 452.5 400 454 417 455.5 406 457 409 458.5 402 460 399 461.5 440 463 408 464.5 391 466 402 467.5 403 469 384 470.5 411 472 387 473.5 401 475 389 476.5 383 478 422 479.5 361 481 370 482.5 380 484 373 485.5 392 487 386 488.5 366 490 397 491.5 374 493 360 494.5 385 496 377 497.5 359 499 356 500.5 365 502 358 503.5 370 505 366 506.5 348 508 348 509.5 355 511 371 512.5 341 514 360 515.5 345 517 348 518.5 343 520 353 521.5 337 523 337 524.5 366 526 353 527.5 327 529 353 530.5 337 532 352 533.5 321 535 334 536.5 329 538 324 539.5 318 541 351 542.5 328 544 323 545.5 307 547 337 548.5 326 550 304 551.5 306 553 326 554.5 318 556 301 557.5 339 559 323 560.5 303 562 304 563.5 320 565 324 566.5 316 568 314 569.5 303 571 329 572.5 302 574 307 575.5 307 577 299 578.5 310 580 317 581.5 274 583 296 584.5 311 586 312 587.5 290 589 301 590.5 295 592 294 593.5 284 595 301 596.5 298 598 306 599.5 290 601 287 602.5 298 604 322 605.5 270 607 282 608.5 302 610 268 611.5 252 613 281 614.5 294 616 289 617.5 288 619 288 620.5 267 622 286 623.5 262 625 255 626.5 269 628 257 629.5 258 631 262 632.5 239 634 270 635.5 256 637 260 638.5 264 640 267 641.5 270 643 272 644.5 265 646 267 647.5 269 649 261 650.5 262 652 249 653.5 262 655 261 656.5 250 658 272 659.5 251 661 268 662.5 271 664 257 665.5 250 667 259 668.5 249 670 238 671.5 264 673 218 674.5 250 676 242 677.5 260 679 244 680.5 269 682 243 683.5 223 685 280 686.5 247 688 245 689.5 246 691 242 692.5 249 694 236 695.5 269 697 236 698.5 251 700 258 701.5 240 703 252 704.5 236 706 231 707.5 233 709 253 710.5 253 712 230 713.5 252 715 230 716.5 230 718 247 719.5 216 721 246 722.5 235 724 222 725.5 246 727 241 728.5 231 730 234 731.5 223 733 208 734.5 234 736 225 737.5 231 739 241 740.5 245 742 241 743.5 231 745 233 746.5 246 748 242 749.5 230 751 230 752.5 224 754 224 755.5 230 757 257 758.5 250 760 220 761.5 243 763 232 764.5 199 766 231 767.5 214 769 238 770.5 241 772 228 773.5 240 775 236 776.5 226 778 217 779.5 260 781 226 782.5 236 784 238 785.5 245 787 220 788.5 208 790 237 791.5 219 793 233 794.5 259 796 229 797.5 238 799 224 800.5 270 802 232 803.5 241 805 235 806.5 230 808 249 809.5 235 811 228 812.5 232 814 235 815.5 239 817 240 818.5 230 820 212 821.5 262 823 228 824.5 255 826 235 827.5 244 829 222 830.5 219 832 235 833.5 251 835 256 836.5 254 838 236 839.5 239 841 230 842.5 246 844 239 845.5 246 847 236 848.5 246 850 246 851.5 251 853 238 854.5 243 856 239 857.5 238 859 219 860.5 238 862 250 863.5 238 865 267 866.5 264 868 270 869.5 250 871 249 872.5 256 874 263 875.5 270 877 243 878.5 253 880 218 881.5 253 883 264 884.5 264 886 284 887.5 264 889 248 890.5 251 892 263 893.5 279 895 236 896.5 251 898 263 899.5 259 901 274 902.5 259 904 265 905.5 263 907 267 908.5 282 910 253 911.5 249 913 252 914.5 266 916 272 917.5 277 919 275 920.5 274 922 253 923.5 259 925 280 926.5 262 928 271 929.5 272 931 273 932.5 269 934 261 935.5 276 937 273 938.5 291 940 276 941.5 281 943 279 944.5 280 946 281 947.5 259 949 295 950.5 280 952 282 953.5 273 955 294 956.5 283 958 300 959.5 309 961 281 962.5 278 964 310 965.5 320 967 299 968.5 277 970 283 971.5 306 973 313 974.5 302 976 290 977.5 302 979 292 980.5 300 982 302 983.5 278 985 317 986.5 301 988 315 989.5 326 991 328 992.5 332 994 313 995.5 299 997 322 998.5 322 1000 325" stroke="#b07aa1"/>
<path d="M388 502 389.5 498 391 497 392.5 520 394 511 395.5 501 397 497 398.5 498 400 482 401.5 496 403 483 404.5 489 406 484 407.5 481 409 475 410.5 488 412 480 413.5 466 415 477 416.5 467 418 472 419.5 476 421 459 422.5 455 424 461 425.5 459 427 479 428.5 459 430 441 431.5 452 433 443 434.5 474 436 439 437.5 421 439 450 440.5 434 442 434 443.5 434 445 421 446.5 428 448 407 449.5 428 451 427 452.5 446 454 425 455.5 431 457 402 458.5 434 460 441 461.5 419 463 410 464.5 412 466 427 467.5 395 469 421 470.5 389 472 395 473.5 405 475 399 476.5 409 478 412 479.5 382 481 395 482.5 401 484 394 485.5 392 487 388 488.5 383 490 360 491.5 363 493 390 494.5 367 496 367 497.5 384 499 374 500.5 385 502 365 503.5 377 505 368 506.5 352 508 345 509.5 363 511 376 512.5 375 514 366 515.5 368 517 367 518.5 354 520 369 521.5 356 523 347 524.5 393 526 357 527.5 347 529 355 530.5 332 532 331 533.5 364 535 348 536.5 315 538 321 539.5 336 541 325 542.5 349 544 313 545.5 346 547 320 548.5 316 550 329 551.5 314 553 316 554.5 319 556 297 557.5 310 559 325 560.5 298 562 304 563.5 308 565 327 566.5 308 568 331 569.5 303 571 321 572.5 314 574 296 575.5 315 577 308 578.5 300 580 294 581.5 287 583 309 584.5 308 586 298 587.5 290 589 293 590.5 307 592 300 593.5 277 595 297 596.5 300 598 287 599.5 288 601 285 602.5 298 604 286 605.5 289 607 289 608.5 304 610 270 611.5 311 613 272 614.5 282 616 274 617.5 284 619 287 620.5 305 622 293 623.5 272 625 281 626.5 279 628 269 629.5 273 631 275 632.5 269 634 266 635.5 281 637 271 638.5 285 640 280 641.5 257 643 246 644.5 269 646 261 647.5 256 649 259 650.5 282 652 263 653.5 286 655 273 656.5 244 658 264 659.5 279 661 242 662.5 247 664 239 665.5 254 667 278 668.5 249 670 272 671.5 242 673 248 674.5 260 676 262 677.5 257 679 273 680.5 275 682 276 683.5 253 685 263 686.5 250 688 251 689.5 227 691 245 692.5 249 694 245 695.5 268 697 235 698.5 241 700 236 701.5 236 703 234 704.5 259 706 248 707.5 224 709 224 710.5 256 712 246 713.5 229 715 246 716.5 232 718 254 719.5 231 721 238 722.5 250 724 245 725.5 256 727 249 728.5 227 730 246 731.5 230 733 259 734.5 260 736 249 737.5 267 739 251 740.5 259 742 253 743.5 252 745 252 746.5 245 748 262 749.5 230 751 224 752.5 233 754 239 755.5 238 757 223 758.5 232 760 246 761.5 241 763 254 764.5 238 766 249 767.5 232 769 247 770.5 275 772 239 773.5 240 775 252 776.5 230 778 236 779.5 235 781 244 782.5 226 784 257 785.5 243 787 235 788.5 240 790 242 791.5 217 793 253 794.5 233 796 252 797.5 241 799 241 800.5 249 802 262 803.5 227 805 237 806.5 249 808 217 809.5 229 811 233 812.5 241 814 230 815.5 254 817 242 818.5 247 820 246 821.5 243 823 239 824.5 261 826 256 827.5 264 829 246 830.5 251 832 252 833.5 245 835 248 836.5 231 838 236 839.5 240 841 238 842.5 255 844 255 845.5 256 847 249 848.5 263 850 263 851.5 259 853 250 854.5 271 856 241 857.5 237 859 241 860.5 269 862 257 863.5 250 865 231 866.5 255 868 247 869.5 235 871 271 872.5 257 874 275 875.5 247 877 267 878.5 254 880 269 881.5 258 883 270 884.5 266 886 252 887.5 265 889 267 890.5 258 892 265 893.5 278 895 282 896.5 269 898 244 899.5 278 901 291 902.5 269 904 262 905.5 276 907 276 908.5 284 910 268 911.5 293 913 286 914.5 266 916 289 917.5 277 919 287 920.5 284 922 281 923.5 285 925 277 926.5 275 928 281 929.5 281 931 289 932.5 282 934 269 935.5 297 937 288 938.5 299 940 297 941.5 294 943 298 944.5 277 946 310 947.5 316 949 302 950.5 290 952 305 953.5 294 955 308 956.5 292 958 288 959.5 292 961 294 962.5 311 964 304 965.5 308 967 295 968.5 322 970 308 971.5 312 973 328 974.5 315 976 307 977.5 311 979 327 980.5 320 982 308 983.5 330 985 303 986.5 290 988 310 989.5 301 991 321 992.5 321 994 322 995.5 318 997 316 998.5 339 1000 308" stroke="#ff9da7"/>
<path d="M388 506 389.5 513 391 521 392.5 506 394 496 395.5 496 397 505 398.5 502 400 487 401.5 502 403 489 404.5 469 406 487 407.5 493 409 490 410.5 485 412 481 413.5 486 415 483 416.5 456 418 466 419.5 472 421 469 422.5 470 424 476 425.5 465 427 447 428.5 478 430 443 431.5 455 433 476 434.5 459 436 457 437.5 449 439 460 440.5 476 442 447 443.5 439 445 452 446.5 458 448 440 449.5 418 451 414 452.5 423 454 439 455.5 425 457 431 458.5 425 460 431 461.5 399 463 399 464.5 419 466 419 467.5 398 469 426 470.5 404 472 414 473.5 402 475 403 476.5 399 478 385 479.5 394 481 413 482.5 385 484 382 485.5 376 487 404 488.5 376 490 371 491.5 386 493 392 494.5 371 496 382 497.5 388 499 381 500.5 371 502 382 503.5 388 505 399 506.5 387 508 354 509.5 384 511 380 512.5 368 514 373 515.5 376 517 360 518.5 349 520 358 521.5 366 523 330 524.5 349 526 341 527.5 359 529 341 530.5 348 532 342 533.5 351 535 358 536.5 370 538 337 539.5 333 541 345 542.5 326 544 334 545.5 345 547 338 548.5 345 550 327 551.5 328 553 331 554.5 340 556 342 557.5 342 559 329 560.5 319 562 321 563.5 324 565 301 566.5 310 568 302 569.5 323 571 321 572.5 307 574 308 575.5 316 577 313 578.5 310 580 315 581.5 298 583 303 584.5 294 586 314 587.5 306 589 316 590.5 297 592 291 593.5 308 595 311 596.5 285 598 311 599.5 291 601 314 602.5 303 604 290 605.5 293 607 292 608.5 248 610 300 611.5 289 613 299 614.5 260 616 297 617.5 289 619 276 620.5 308 622 295 623.5 275 625 276 626.5 290 628 302 629.5 288 631 277 632.5 300 634 273 635.5 293 637 286 638.5 276 640 270 641.5 270 643 275 644.5 281 646 274 647.5 264 649 283 650.5 280 652 273 653.5 284 655 269 656.5 289 658 268 659.5 261 661 257 662.5 269 664 268 665.5 257 667 260 668.5 251 670 259 671.5 281 673 261 674.5 252 676 255 677.5 254 679 257 680.5 252 682 273 683.5 237 685 257 686.5 274 688 258 689.5 271 691 253 692.5 266 694 280 695.5 247 697 262 698.5 244 700 255 701.5 223 703 256 704.5 241 706 231 707.5 252 709 254 710.5 267 712 255 713.5 253 715 243 716.5 230 718 253 719.5 228 721 266 722.5 266 724 256 725.5 263 727 249 728.5 215 730 275 731.5 247 733 263 734.5 240 736 253 737.5 258 739 230 740.5 232 742 240 743.5 244 745 248 746.5 240 748 240 749.5 236 751 236 752.5 251 754 242 755.5 235 757 234 758.5 238 760 230 761.5 249 763 251 764.5 216 766 241 767.5 243 769 256 770.5 239 772 236 773.5 225 775 236 776.5 240 778 283 779.5 259 781 251 782.5 250 784 231 785.5 237 787 256 788.5 248 790 260 791.5 248 793 254 794.5 250 796 245 797.5 253 799 261 800.5 243 802 247 803.5 242 805 249 806.5 243 808 251 809.5 229 811 243 812.5 245 814 247 815.5 244 817 247 818.5 261 820 258 821.5 267 823 235 824.5 241 826 239 827.5 244 829 261 830.5 245 832 248 833.5 257 835 269 836.5 272 838 248 839.5 247 841 254 842.5 274 844 285 845.5 263 847 264 848.5 216 850 259 851.5 240 853 253 854.5 269 856 227 857.5 286 859 255 860.5 270 862 256 863.5 270 865 257 866.5 263 868 227 869.5 275 871 272 872.5 262 874 262 875.5 254 877 249 878.5 270 880 271 881.5 277 883 282 884.5 281 886 270 887.5 275 889 269 890.5 286 892 265 893.5 265 895 278 896.5 259 898 272 899.5 259 901 267 902.5 315 904 260 905.5 289 907 273 908.5 258 910 264 911.5 288 913 278 914.5 279 916 301 917.5 269 919 261 920.5 269 922 301 923.5 289 925 303 926.5 301 928 293 929.5 282 931 293 932.5 304 934 295 935.5 293 937 299 938.5 295 940 305 941.5 295 943 311 944.5 298 946 302 947.5 281 949 278 950.5 300 952 298 953.5 306 955 297 956.5 295 958 316 959.5 286 961 310 962.5 295 964 265 965.5 292 967 311 968.5 309 970 311 971.5 305 973 317 974.5 320 976 319 977.5 337 979 331 980.5 311 982 315 983.5 303 985 326 986.5 336 988 343 989.5 329 991 322 992.5 318 994 313 995.5 351 997 329 998.5 329 1000 355" stroke="#9c755f"/>
<path d="M388 536 389.5 506 391 519 392.5 518 394 511 395.5 509 397 488 398.5 490 400 512 401.5 508 403 485 404.5 497 406 476 407.5 492 409 492 410.5 474 412 503 413.5 470 415 479 416.5 463 418 487 419.5 456 421 470 422.5 459 424 475 425.5 460 427 465 428.5 468 430 452 431.5 455 433 463 434.5 447 436 460 437.5 430 439 475 440.5 463 442 426 443.5 438 445 441 446.5 449 448 450 449.5 451 451 451 452.5 418 454 436 455.5 431 457 437 458.5 427 460 408 461.5 420 463 451 464.5 414 466 434 467.5 418 469 414 470.5 416 472 412 473.5 422 475 406 476.5 389 478 417 479.5 412 481 400 482.5 401 484 398 485.5 404 487 387 488.5 411 490 423 491.5 393 493 381 494.5 399 496 402 497.5 377 499 367 500.5 369 502 377 503.5 369 505 375 506.5 373 508 358 509.5 379 511 378 512.5 343 514 368 515.5 364 517 359 518.5 367 520 353 521.5 372 523 346 524.5 349 526 363 527.5 358 529 354 530.5 354 532 341 533.5 373 535 324 536.5 353 538 364 539.5 341 541 345 542.5 336 544 364 545.5 332 547 316 548.5 327 550 358 551.5 349 553 328 554.5 326 556 359 557.5 325 559 331 560.5 322 562 356 563.5 320 565 307 566.5 327 568 327 569.5 320 571 314 572.5 301 574 310 575.5 340 577 300 578.5 331 580 341 581.5 330 583 318 584.5 327 586 320 587.5 296 589 317 590.5 298 592 286 593.5 318 595 298 596.5 309 598 290 599.5 315 601 309 602.5 298 604 291 605.5 292 607 301 608.5 291 610 286 611.5 303 613 299 614.5 306 616 303 617.5 280 619 291 620.5 281 622 275 623.5 291 625 286 626.5 293 628 283 629.5 294 631 284 632.5 268 634 296 635.5 303 637 277 638.5 260 640 264 641.5 294 643 289 644.5 289 646 296 647.5 275 649 272 650.5 291 652 285 653.5 265 655 282 656.5 275 658 256 659.5 286 661 276 662.5 265 664 267 665.5 281 667 259 668.5 258 670 274 671.5 279 673 279 674.5 278 676 271 677.5 251 679 246 680.5 265 682 259 683.5 284 685 259 686.5 268 688 273 689.5 251 691 250 692.5 277 694 276 695.5 244 697 262 698.5 259 700 252 701.5 249 703 261 704.5 256 706 254 707.5 230 709 246 710.5 254 712 260 713.5 277 715 284 716.5 272 718 259 719.5 244 721 243 722.5 255 724 241 725.5 258 727 269 728.5 239 730 247 731.5 271 733 261 734.5 265 736 257 737.5 243 739 269 740.5 250 742 259 743.5 260 745 259 746.5 241 748 259 749.5 239 751 257 752.5 249 754 264 755.5 247 757 251 758.5 251 760 232 761.5 250 763 252 764.5 244 766 251 767.5 256 769 257 770.5 259 772 256 773.5 265 775 250 776.5 256 778 253 779.5 234 781 247 782.5 241 784 255 785.5 264 787 249 788.5 248 790 236 791.5 239 793 242 794.5 256 796 236 797.5 272 799 263 800.5 255 802 248 803.5 265 805 251 806.5 276 808 254 809.5 261 811 247 812.5 251 814 238 815.5 248 817 275 818.5 248 820 237 821.5 236 823 250 824.5 254 826 254 827.5 264 829 271 830.5 251 832 273 833.5 254 835 250 836.5 269 838 270 839.5 269 841 251 842.5 277 844 267 845.5 255 847 256 848.5 266 850 264 851.5 258 853 283 854.5 260 856 266 857.5 257 859 270 860.5 250 862 290 863.5 285 865 268 866.5 282 868 261 869.5 279 871 265 872.5 255 874 265 875.5 266 877 265 878.5 252 880 271 881.5 281 883 275 884.5 267 886 294 887.5 274 889 281 890.5 276 892 270 893.5 281 895 259 896.5 268 898 261 899.5 284 901 289 902.5 282 904 277 905.5 277 907 294 908.5 280 910 286 911.5 282 913 287 914.5 292 916 296 917.5 287 919 311 920.5 284 922 292 923.5 296 925 289 926.5 272 928 296 929.5 282 931 295 932.5 304 934 295 935.5 288 937 295 938.5 324 940 301 941.5 322 943 295 944.5 304 946 322 947.5 297 949 287 950.5 319 952 326 953.5 319 955 316 956.5 306 958 317 959.5 323 961 311 962.5 298 964 329 965.5 305 967 304 968.5 301 970 332 971.5 308 973 323 974.5 343 976 329 977.5 311 979 318 980.5 311 982 343 983.5 315 985 332 986.5 342 988 327 989.5 332 991 346 992.5 337 994 350 995.5 340 997 355 998.5 325 1000 345" stroke="#bab0ac"/>
<path d="M388 546 389.5 524 391 543 392.5 527 394 538 395.5 523 397 520 398.5 478 400 494 401.5 492 403 502 404.5 514 406 504 407.5 506 409 465 410.5 483 412 491 413.5 496 415 488 416.5 477 418 468 419.5 494 421 470 422.5 477 424 474 425.5 480 427 463 428.5 446 430 467 431.5 458 433 457 434.5 447 436 439 437.5 446 439 483 440.5 436 442 449 443.5 449 445 433 446.5 435 448 437 449.5 444 451 461 452.5 457 454 461 455.5 434 457 440 458.5 451 460 441 461.5 436 463 433 464.5 440 466 422 467.5 430 469 416 470.5 432 472 428 473.5 413 475 403 476.5 415 478 433 479.5 407 481 415 482.5 390 484 396 485.5 396 487 415 488.5 413 490 395 491.5 422 493 368 494.5 380 496 393 497.5 409 499 412 500.5 381 502 374 503.5 372 505 376 506.5 390 508 379 509.5 378 511 388 512.5 377 514 380 515.5 393 517 367 518.5 375 520 364 521.5 377 523 356 524.5 358 526 374 527.5 343 529 385 530.5 370 532 360 533.5 356 535 365 536.5 362 538 345 539.5 357 541 344 542.5 347 544 351 545.5 351 547 346 548.5 347 550 342 551.5 342 553 362 554.5 359 556 332 557.5 298 559 349 560.5 359 562 335 563.5 341 565 336 566.5 338 568 327 569.5 332 571 328 572.5 314 574 312 575.5 304 577 339 578.5 327 580 327 581.5 316 583 289 584.5 319 586 315 587.5 292 589 331 590.5 334 592 313 593.5 321 595 331 596.5 307 598 280 599.5 326 601 290 602.5 304 604 326 605.5 299 607 290 608.5 305 610 289 611.5 280 613 306 614.5 302 616 300 617.5 301 619 301 620.5 314 622 296 623.5 290 625 293 626.5 299 628 302 629.5 284 631 299 632.5 299 634 280 635.5 297 637 290 638.5 306 640 308 641.5 292 643 273 644.5 286 646 276 647.5 276 649 299 650.5 274 652 280 653.5 271 655 284 656.5 297 658 288 659.5 283 661 283 662.5 295 664 288 665.5 280 667 254 668.5 285 670 279 671.5 276 673 288 674.5 266 676 275 677.5 276 679 258 680.5 260 682 274 683.5 285 685 278 686.5 271 688 280 689.5 247 691 265 692.5 261 694 275 695.5 288 697 260 698.5 279 700 277 701.5 286 703 255 704.5 272 706 257 707.5 261 709 274 710.5 275 712 264 713.5 277 715 265 716.5 263 718 265 719.5 265 721 276 722.5 275 724 259 725.5 261 727 257 728.5 269 730 266 731.5 268 733 250 734.5 265 736 255 737.5 249 739 262 740.5 257 742 266 743.5 266 745 260 746.5 266 748 264 749.5 260 751 251 752.5 271 754 270 755.5 272 757 249 758.5 249 760 262 761.5 257 763 260 764.5 272 766 248 767.5 266 769 239 770.5 251 772 248 773.5 267 775 254 776.5 260 778 270 779.5 254 781 259 782.5 250 784 275 785.5 250 787 248 788.5 265 790 276 791.5 242 793 269 794.5 274 796 265 797.5 247 799 251 800.5 267 802 234 803.5 257 805 281 806.5 248 808 250 809.5 258 811 256 812.5 271 814 259 815.5 258 817 263 818.5 269 820 271 821.5 264 823 281 824.5 283 826 275 827.5 251 829 259 830.5 265 832 273 833.5 282 835 258 836.5 274 838 255 839.5 260 841 264 842.5 267 844 284 845.5 266 847 272 848.5 290 850 274 851.5 257 853 260 854.5 267 856 276 857.5 277 859 255 860.5 262 862 261 863.5 265 865 280 866.5 266 868 283 869.5 275 871 279 872.5 295 874 288 875.5 274 877 276 878.5 293 880 281 881.5 274 883 276 884.5 269 886 286 887.5 279 889 289 890.5 310 892 281 893.5 273 895 268 896.5 287 898 286 899.5 274 901 284 902.5 274 904 279 905.5 290 907 298 908.5 285 910 309 911.5 285 913 283 914.5 308 916 292 917.5 284 919 288 920.5 304 922 292 923.5 295 925 281 926.5 287 928 298 929.5 288 931 299 932.5 317 934 307 935.5 307 937 293 938.5 315 940 304 941.5 318 943 299 944.5 313 946 303 947.5 313 949 318 950.5 312 952 290 953.5 308 955 310 956.5 329 958 321 959.5 310 961 325 962.5 327 964 306 965.5 339 967 330 968.5 358 970 334 971.5 311 973 335 974.5 333 976 327 977.5 336 979 341 980.5 331 982 326 983.5 344 985 342 986.5 326 988 355 989.5 338 991 364 992.5 359 994 343 995.5 355 997 336 998.5 350 1000 328" stroke="#4e79a7"/>
<path d="M388 516 389.5 530 391 523 392.5 521 394 529 395.5 513 397 516 398.5 517 400 522 401.5 545 403 523 404.5 510 406 513 407.5 508 409 505 410.5 504 412 502 413.5 500 415 507 416.5 503 418 513 419.5 497 421 495 422.5 507 424 470 425.5 487 427 488 428.5 466 430 472 431.5 472 433 459 434.5 453 436 450 437.5 478 439 465 440.5 454 442 479 443.5 462 445 449 446.5 459 448 447 449.5 433 451 454 452.5 457 454 430 455.5 443 457 453 458.5 448 460 447 461.5 438 463 454 464.5 438 466 435 467.5 439 469 429 470.5 427 472 424 473.5 418 475 418 476.5 409 478 429 479.5 424 481 382 482.5 403 484 417 485.5 403 487 418 488.5 405 490 402 491.5 398 493 409 494.5 407 496 429 497.5 420 499 403 500.5 400 502 399 503.5 399 505 371 506.5 393 508 388 509.5 391 511 376 512.5 361 514 366 515.5 403 517 392 518.5 397 520 377 521.5 371 523 360 524.5 381 526 359 527.5 365 529 379 530.5 388 532 367 533.5 378 535 369 536.5 371 538 350 539.5 364 541 363 542.5 365 544 364 545.5 360 547 363 548.5 348 550 359 551.5 344 553 340 554.5 346 556 342 557.5 343 559 342 560.5 356 562 338 563.5 349 565 349 566.5 366 568 341 569.5 329 571 308 572.5 339 574 342 575.5 329 577 345 578.5 313 580 308 581.5 323 583 337 584.5 340 586 316 587.5 344 589 332 590.5 324 592 341 593.5 325 595 314 596.5 325 598 309 599.5 332 601 316 602.5 298 604 331 605.5 321 607 310 608.5 316 610 321 611.5 312 613 315 614.5 317 616 306 617.5 309 619 329 620.5 286 622 299 623.5 307 625 306 626.5 296 628 301 629.5 296 631 322 632.5 315 634 305 635.5 309 637 284 638.5 290 640 301 641.5 312 643 280 644.5 299 646 292 647.5 268 649 295 650.5 281 652 308 653.5 286 655 295 656.5 278 658 269 659.5 270 661 305 662.5 318 664 289 665.5 291 667 309 668.5 279 670 289 671.5 277 673 293 674.5 283 676 296 677.5 294 679 271 680.5 275 682 284 683.5 288 685 280 686.5 287 688 289 689.5 275 691 279 692.5 274 694 265 695.5 289 697 298 698.5 275 700 296 701.5 294 703 256 704.5 272 706 269 707.5 286 709 290 710.5 269 712 257 713.5 275 715 288 716.5 268 718 273 719.5 255 721 279 722.5 269 724 273 725.5 270 727 258 728.5 261 730 270 731.5 276 733 290 734.5 264 736 259 737.5 291 739 282 740.5 262 742 267 743.5 271 745 286 746.5 269 748 280 749.5 272 751 261 752.5 271 754 251 755.5 262 757 276 758.5 260 760 265 761.5 255 763 269 764.5 250 766 264 767.5 277 769 260 770.5 279 772 273 773.5 276 775 253 776.5 268 778 258 779.5 261 781 264 782.5 275 784 287 785.5 255 787 286 788.5 240 790 245 791.5 289 793 283 794.5 272 796 273 797.5 271 799 246 800.5 278 802 256 803.5 247 805 277 806.5 279 808 286 809.5 283 811 269 812.5 280 814 272 815.5 274 817 294 818.5 270 820 246 821.5 269 823 257 824.5 258 826 291 827.5 280 829 260 830.5 274 832 268 833.5 274 835 295 836.5 266 838 280 839.5 279 841 268 842.5 282 844 286 845.5 287 847 257 848.5 281 850 287 851.5 294 853 285 854.5 282 856 274 857.5 299 859 282 860.5 300 862 285 863.5 288 865 276 866.5 271 868 289 869.5 284 871 297 872.5 272 874 273 875.5 300 877 279 878.5 267 880 267 881.5 280 883 295 884.5 301 886 271 887.5 296 889 282 890.5 285 892 301 893.5 293 895 298 896.5 303 898 303 899.5 301 901 307 902.5 293 904 289 905.5 290 907 301 908.5 292 910 304 911.5 301 913 320 914.5 291 916 318 917.5 313 919 332 920.5 290 922 314 923.5 303 925 300 926.5 314 928 322 929.5 328 931 309 932.5 306 934 316 935.5 328 937 323 938.5 325 940 328 941.5 319 943 327 944.5 343 946 320 947.5 316 949 319 950.5 322 952 329 953.5 333 955 310 956.5 320 958 325 959.5 319 961 309 962.5 318 964 328 965.5 319 967 352 968.5 336 970 338 971.5 358 973 360 974.5 317 976 352 977.5 348 979 335 980.5 340 982 335 983.5 364 985 376 986.5 332 988 340 989.5 342 991 331 992.5 344 994 356 995.5 340 997 337 998.5 339 1000 358" stroke="#f28e2b"/>
<path d="M388 541 389.5 537 391 548 392.5 539 394 519 395.5 535 397 543 398.5 533 400 519 401.5 517 403 521 404.5 529 406 524 407.5 512 409 523 410.5 488 412 489 413.5 512 415 481 416.5 520 418 504 419.5 501 421 511 422.5 517 424 495 425.5 491 427 480 428.5 474 430 472 431.5 499 433 471 434.5 497 436 466 437.5 467 439 477 440.5 484 442 461 443.5 464 445 460 446.5 486 448 468 449.5 467 451 453 452.5 457 454 448 455.5 480 457 452 458.5 429 460 436 461.5 423 463 432 464.5 425 466 455 467.5 438 469 426 470.5 460 472 431 473.5 453 475 430 476.5 432 478 437 479.5 439 481 427 482.5 443 484 414 485.5 443 487 425 488.5 421 490 415 491.5 419 493 421 494.5 415 496 396 497.5 431 499 402 500.5 397 502 373 503.5 412 505 394 506.5 398 508 417 509.5 407 511 397 512.5 384 514 393 515.5 398 517 380 518.5 382 520 395 521.5 384 523 401 524.5 370 526 377 527.5 373 529 384 530.5 371 532 388 533.5 397 535 375 536.5 379 538 367 539.5 384 541 361 542.5 367 544 373 545.5 344 547 373 548.5 362 550 366 551.5 358 553 347 554.5 361 556 358 557.5 359 559 352 560.5 345 562 349 563.5 354 565 369 566.5 346 568 354 569.5 336 571 350 572.5 343 574 336 575.5 337 577 335 578.5 359 580 342 581.5 359 583 336 584.5 306 586 336 587.5 340 589 332 590.5 318 592 314 593.5 350 595 321 596.5 335 598 339 599.5 337 601 292 602.5 308 604 310 605.5 308 607 317 608.5 308 610 327 611.5 321 613 319 614.5 303 616 321 617.5 303 619 314 620.5 318 622 316 623.5 292 625 311 626.5 319 628 312 629.5 276 631 301 632.5 309 634 319 635.5 296 637 300 638.5 311 640 293 641.5 311 643 289 644.5 305 646 306 647.5 306 649 313 650.5 298 652 291 653.5 294 655 322 656.5 310 658 287 659.5 283 661 294 662.5 280 664 281 665.5 307 667 306 668.5 304 670 311 671.5 270 673 294 674.5 284 676 302 677.5 280 679 295 680.5 299 682 294 683.5 306 685 305 686.5 284 688 270 689.5 291 691 303 692.5 299 694 264 695.5 275 697 292 698.5 290 700 285 701.5 285 703 275 704.5 286 706 302 707.5 275 709 264 710.5 274 712 287 713.5 287 715 273 716.5 271 718 282 719.5 278 721 282 722.5 279 724 279 725.5 271 727 258 728.5 265 730 274 731.5 287 733 268 734.5 294 736 264 737.5 269 739 286 740.5 283 742 293 743.5 286 745 283 746.5 273 748 279 749.5 280 751 269 752.5 281 754 253 755.5 269 757 271 758.5 277 760 281 761.5 280 763 279 764.5 260 766 278 767.5 271 769 290 770.5 279 772 278 773.5 273 775 276 776.5 240 778 272 779.5 300 781 284 782.5 270 784 272 785.5 271 787 275 788.5 291 790 282 791.5 260 793 245 794.5 296 796 290 797.5 277 799 282 800.5 274 802 257 803.5 305 805 250 806.5 275 808 284 809.5 285 811 271 812.5 270 814 282 815.5 268 817 268 818.5 287 820 272 821.5 289 823 280 824.5 297 826 295 827.5 271 829 283 830.5 283 832 295 833.5 280 835 299 836.5 286 838 299 839.5 286 841 287 842.5 274 844 282 845.5 304 847 304 848.5 262 850 310 851.5 307 853 281 854.5 297 856 300 857.5 262 859 289 860.5 292 862 289 863.5 277 865 291 866.5 299 868 298 869.5 282 871 320 872.5 283 874 284 875.5 302 877 291 878.5 291 880 292 881.5 297 883 325 884.5 296 886 287 887.5 288 889 303 890.5 308 892 293 893.5 298 895 308 896.5 294 898 296 899.5 313 901 320 902.5 299 904 285 905.5 313 907 254 908.5 330 910 313 911.5 312 913 315 914.5 323 916 321 917.5 319 919 317 920.5 298 922 323 923.5 314 925 320 926.5 329 928 310 929.5 311 931 330 932.5 314 934 317 935.5 318 937 331 938.5 322 940 328 941.5 341 943 334 944.5 323 946 329 947.5 326 949 315 950.5 330 952 345 953.5 354 955 328 956.5 336 958 342 959.5 341 961 334 962.5 313 964 335 965.5 334 967 339 968.5 342 970 319 971.5 348 973 339 974.5 332 976 331 977.5 349 979 355 980.5 363 982 336 983.5 351 985 341 986.5 358 988 342 989.5 329 991 373 992.5 348 994 355 995.5 367 997 369 998.5 366 1000 362" stroke="#e15759"/>
<path d="M388 540 389.5 549 391 538 392.5 549 394 538 395.5 517 397 531 398.5 536 400 549 401.5 509 403 550 404.5 531 406 541 407.5 533 409 527 410.5 510 412 507 413.5 524 415 519 416.5 534 418 473 419.5 500 421 476 422.5 525 424 493 425.5 483 427 483 428.5 504 430 480 431.5 484 433 487 434.5 505 436 478 437.5 484 439 493 440.5 482 442 475 443.5 478 445 490 446.5 460 448 483 449.5 459 451 465 452.5 459 454 476 455.5 451 457 443 458.5 464 460 470 461.5 480 463 436 464.5 438 466 465 467.5 456 469 442 470.5 449 472 455 473.5 448 475 421 476.5 439 478 440 479.5 449 481 448 482.5 435 484 418 485.5 426 487 419 488.5 430 490 410 491.5 401 493 407 494.5 427 496 413 497.5 417 499 433 500.5 419 502 402 503.5 425 505 410 506.5 391 508 400 509.5 400 511 408 512.5 402 514 407 515.5 400 517 396 518.5 394 520 394 521.5 390 523 377 524.5 382 526 397 527.5 377 529 403 530.5 391 532 384 533.5 367 535 381 536.5 378 538 377 539.5 392 541 389 542.5 385 544 385 545.5 384 547 381 548.5 379 550 364 551.5 371 553 364 554.5 348 556 387 557.5 363 559 371 560.5 338 562 363 563.5 344 565 358 566.5 345 568 345 569.5 337 571 368 572.5 345 574 340 575.5 330 577 348 578.5 367 580 347 581.5 327 583 344 584.5 327 586 341 587.5 334 589 358 590.5 357 592 336 593.5 329 595 341 596.5 327 598 347 599.5 329 601 332 602.5 327 604 331 605.5 331 607 330 608.5 335 610 309 611.5 334 613 330 614.5 305 616 326 617.5 317 619 323 620.5 310 622 308 623.5 329 625 332 626.5 326 628 325 629.5 325 631 318 632.5 317 634 311 635.5 303 637 324 638.5 312 640 331 641.5 318 643 303 644.5 316 646 306 647.5 323 649 310 650.5 304 652 308 653.5 295 655 308 656.5 299 658 307 659.5 317 661 291 662.5 303 664 320 665.5 301 667 295 668.5 304 670 304 671.5 302 673 313 674.5 281 676 314 677.5 295 679 305 680.5 309 682 290 683.5 319 685 291 686.5 291 688 314 689.5 303 691 319 692.5 291 694 280 695.5 298 697 273 698.5 302 700 293 701.5 266 703 290 704.5 281 706 270 707.5 280 709 281 710.5 291 712 279 713.5 303 715 313 716.5 295 718 279 719.5 288 721 288 722.5 278 724 284 725.5 296 727 278 728.5 297 730 284 731.5 275 733 274 734.5 284 736 285 737.5 279 739 283 740.5 274 742 287 743.5 295 745 296 746.5 305 748 292 749.5 260 751 289 752.5 259 754 279 755.5 276 757 289 758.5 283 760 279 761.5 285 763 266 764.5 273 766 290 767.5 296 769 277 770.5 298 772 263 773.5 297 775 270 776.5 287 778 297 779.5 271 781 284 782.5 274 784 281 785.5 288 787 281 788.5 277 790 286 791.5 276 793 281 794.5 277 796 287 797.5 276 799 275 800.5 275 802 266 803.5 290 805 295 806.5 284 808 271 809.5 267 811 282 812.5 282 814 287 815.5 287 817 294 818.5 279 820 310 821.5 277 823 285 824.5 287 826 280 827.5 262 829 302 830.5 328 832 303 833.5 271 835 292 836.5 289 838 302 839.5 278 841 291 842.5 285 844 298 845.5 290 847 298 848.5 299 850 296 851.5 295 853 292 854.5 296 856 282 857.5 248 859 287 860.5 301 862 294 863.5 291 865 300 866.5 289 868 289 869.5 296 871 303 872.5 302 874 317 875.5 300 877 279 878.5 293 880 298 881.5 303 883 287 884.5 312 886 313 887.5 299 889 321 890.5 297 892 299 893.5 304 895 299 896.5 323 898 305 899.5 326 901 292 902.5 314 904 320 905.5 313 907 312 908.5 303 910 309 911.5 341 913 308 914.5 320 916 341 917.5 343 919 340 920.5 323 922 339 923.5 326 925 315 926.5 330 928 333 929.5 345 931 323 932.5 320 934 335 935.5 338 937 351 938.5 318 940 329 941.5 336 943 368 944.5 316 946 338 947.5 358 949 341 950.5 326 952 335 953.5 351 955 333 956.5 347 958 346 959.5 353 961 346 962.5 357 964 352 965.5 358 967 350 968.5 342 970 352 971.5 360 973 366 974.5 377 976 353 977.5 347 979 348 980.5 363 982 339 983.5 347 985 366 986.5 363 988 349 989.5 374 991 369 992.5 377 994 374 995.5 370 997 373 998.5 379 1000 363" stroke="#76b7b2"/>
<path d="M388 548 389.5 565 391 546 392.5 555 394 537 395.5 553 397 551 398.5 549 400 531 401.5 538 403 540 404.5 549 406 530 407.5 535 409 528 410.5 515 412 508 413.5 507 415 529 416.5 494 418 513 419.5 499 421 512 422.5 506 424 520 425.5 509 427 495 428.5 511 430 496 431.5 506 433 491 434.5 473 436 501 437.5 488 439 515 440.5 490 442 471 443.5 479 445 500 446.5 479 448 473 449.5 475 451 476 452.5 468 454 460 455.5 454 457 479 458.5 497 460 470 461.5 479 463 470 464.5 464 466 443 467.5 457 469 458 470.5 452 472 448 473.5 451 475 449 476.5 444 478 440 479.5 443 481 446 482.5 444 484 444 485.5 449 487 421 488.5 443 490 447 491.5 423 493 430 494.5 429 496 429 497.5 417 499 448 500.5 402 502 415 503.5 426 505 400 506.5 403 508 416 509.5 406 511 419 512.5 392 514 397 515.5 427 517 408 518.5 408 520 383 521.5 396 523 407 524.5 387 526 389 527.5 407 529 383 530.5 395 532 389 533.5 378 535 391 536.5 392 538 366 539.5 398 541 375 542.5 376 544 378 545.5 390 547 392 548.5 363 550 378 551.5 387 553 369 554.5 367 556 373 557.5 364 559 380 560.5 374 562 367 563.5 356 565 358 566.5 347 568 379 569.5 368 571 362 572.5 359 574 364 575.5 338 577 373 578.5 364 580 347 581.5 353 583 377 584.5 362 586 368 587.5 352 589 341 590.5 345 592 360 593.5 350 595 340 596.5 316 598 341 599.5 354 601 342 602.5 342 604 340 605.5 326 607 342 608.5 324 610 336 611.5 339 613 334 614.5 317 616 323 617.5 336 619 317 620.5 320 622 336 623.5 324 625 333 626.5 327 628 329 629.5 323 631 313 632.5 309 634 331 635.5 328 637 302 638.5 341 640 325 641.5 322 643 326 644.5 311 646 311 647.5 311 649 316 650.5 327 652 323 653.5 306 655 326 656.5 346 658 305 659.5 330 661 269 662.5 306 664 313 665.5 286 667 308 668.5 314 670 322 671.5 313 673 313 674.5 280 676 306 677.5 299 679 332 680.5 320 682 297 683.5 297 685 292 686.5 301 688 292 689.5 317 691 308 692.5 316 694 310 695.5 301 697 293 698.5 285 700 301 701.5 305 703 305 704.5 299 706 306 707.5 289 709 300 710.5 282 712 280 713.5 295 715 313 716.5 291 718 290 719.5 278 721 304 722.5 280 724 295 725.5 280 727 286 728.5 271 730 282 731.5 300 733 302 734.5 302 736 294 737.5 286 739 291 740.5 318 742 314 743.5 298 745 279 746.5 296 748 301 749.5 281 751 298 752.5 299 754 292 755.5 285 757 307 758.5 286 760 298 761.5 302 763 285 764.5 299 766 307 767.5 300 769 289 770.5 285 772 290 773.5 286 775 292 776.5 290 778 286 779.5 284 781 277 782.5 297 784 286 785.5 304 787 292 788.5 295 790 290 791.5 305 793 277 794.5 293 796 298 797.5 279 799 289 800.5 291 802 321 803.5 310 805 294 806.5 320 808 318 809.5 292 811 297 812.5 281 814 283 815.5 292 817 293 818.5 303 820 283 821.5 308 823 289 824.5 298 826 285 827.5 300 829 278 830.5 298 832 308 833.5 280 835 297 836.5 289 838 296 839.5 293 841 309 842.5 304 844 298 845.5 291 847 263 848.5 292 850 306 851.5 295 853 312 854.5 309 856 306 857.5 306 859 312 860.5 315 862 300 863.5 311 865 289 866.5 315 868 323 869.5 318 871 311 872.5 315 874 319 875.5 298 877 340 878.5 316 880 316 881.5 309 883 323 884.5 315 886 318 887.5 323 889 302 890.5 317 892 328 893.5 330 895 316 896.5 303 898 311 899.5 344 901 330 902.5 336 904 295 905.5 325 907 330 908.5 327 910 336 911.5 341 913 333 914.5 318 916 299 917.5 328 919 313 920.5 332 922 351 923.5 325 925 344 926.5 342 928 326 929.5 336 931 326 932.5 338 934 346 935.5 332 937 339 938.5 338 940 353 941.5 359 943 337 944.5 322 946 351 947.5 345 949 332 950.5 359 952 351 953.5 357 955 335 956.5 349 958 351 959.5 357 961 357 962.5 354 964 341 965.5 362 967 366 968.5 354 970 363 971.5 351 973 354 974.5 358 976 351 977.5 360 979 346 980.5 356 982 382 983.5 375 985 370 986.5 368 988 357 989.5 372 991 390 992.5 383 994 356 995.5 361 997 382 998.5 366 1000 365" stroke="#59a14f"/>
<path d="M388 540 389.5 559 391 572 392.5 543 394 560 395.5 578 397 550 398.5 557 400 550 401.5 563 403 576 404.5 533 406 535 407.5 546 409 556 410.5 514 412 530 413.5 530 415 525 416.5 545 418 510 419.5 532 421 507 422.5 523 424 513 425.5 534 427 520 428.5 504 430 509 431.5 502 433 499 434.5 503 436 504 437.5 488 439 483 440.5 500 442 499 443.5 485 445 500 446.5 485 448 486 449.5 503 451 475 452.5 486 454 488 455.5 487 457 476 458.5 487 460 478 461.5 463 463 468 464.5 465 466 473 467.5 466 469 463 470.5 451 472 467 473.5 456 475 433 476.5 438 478 459 479.5 449 481 426 482.5 455 484 441 485.5 454 487 438 488.5 458 490 446 491.5 424 493 441 494.5 405 496 426 497.5 442 499 425 500.5 433 502 439 503.5 427 505 440 506.5 416 508 422 509.5 419 511 427 512.5 407 514 403 515.5 398 517 412 518.5 419 520 409 521.5 409 523 419 524.5 390 526 400 527.5 389 529 415 530.5 405 532 415 533.5 376 535 383 536.5 390 538 398 539.5 398 541 400 542.5 396 544 379 545.5 381 547 380 548.5 401 550 398 551.5 392 553 374 554.5 384 556 384 557.5 405 559 388 560.5 371 562 373 563.5 355 565 381 566.5 363 568 375 569.5 357 571 376 572.5 374 574 368 575.5 361 577 389 578.5 373 580 368 581.5 351 583 364 584.5 370 586 362 587.5 369 589 354 590.5 364 592 357 593.5 351 595 356 596.5 350 598 352 599.5 353 601 353 602.5 336 604 356 605.5 346 607 357 608.5 352 610 338 611.5 336 613 350 614.5 341 616 342 617.5 340 619 351 620.5 342 622 324 623.5 331 625 332 626.5 342 628 318 629.5 330 631 329 632.5 340 634 324 635.5 330 637 329 638.5 331 640 318 641.5 341 643 357 644.5 320 646 338 647.5 329 649 336 650.5 324 652 334 653.5 337 655 337 656.5 310 658 326 659.5 338 661 337 662.5 318 664 313 665.5 341 667 316 668.5 316 670 326 671.5 317 673 308 674.5 323 676 307 677.5 314 679 322 680.5 320 682 329 683.5 325 685 305 686.5 325 688 300 689.5 332 691 298 692.5 310 694 295 695.5 312 697 312 698.5 308 700 288 701.5 298 703 295 704.5 296 706 307 707.5 300 709 323 710.5 294 712 298 713.5 301 715 314 716.5 304 718 297 719.5 312 721 311 722.5 283 724 317 725.5 309 727 304 728.5 308 730 335 731.5 308 733 300 734.5 298 736 294 737.5 321 739 330 740.5 313 742 308 743.5 321 745 294 746.5 304 748 310 749.5 303 751 310 752.5 281 754 279 755.5 302 757 295 758.5 316 760 308 761.5 285 763 307 764.5 293 766 270 767.5 324 769 311 770.5 295 772 298 773.5 319 775 307 776.5 331 778 303 779.5 289 781 300 782.5 315 784 303 785.5 297 787 292 788.5 306 790 313 791.5 324 793 286 794.5 293 796 305 797.5 302 799 298 800.5 307 802 292 803.5 277 805 318 806.5 294 808 295 809.5 312 811 292 812.5 294 814 317 815.5 302 817 309 818.5 307 820 298 821.5 318 823 307 824.5 304 826 327 827.5 299 829 293 830.5 308 832 295 833.5 304 835 299 836.5 341 838 321 839.5 301 841 299 842.5 280 844 315 845.5 331 847 307 848.5 299 850 334 851.5 319 853 303 854.5 328 856 317 857.5 315 859 308 860.5 301 862 311 863.5 333 865 322 866.5 323 868 302 869.5 352 871 316 872.5 323 874 342 875.5 316 877 298 878.5 309 880 308 881.5 322 883 328 884.5 342 886 345 887.5 339 889 320 890.5 318 892 334 893.5 334 895 324 896.5 321 898 317 899.5 325 901 313 902.5 337 904 329 905.5 354 907 339 908.5 338 910 340 911.5 345 913 338 914.5 323 916 331 917.5 337 919 349 920.5 354 922 355 923.5 348 925 349 926.5 332 928 364 929.5 338 931 320 932.5 350 934 350 935.5 340 937 354 938.5 361 940 360 941.5 336 943 343 944.5 330 946 352 947.5 370 949 361 950.5 337 952 353 953.5 378 955 363 956.5 354 958 372 959.5 368 961 369 962.5 384 964 372 965.5 364 967 367 968.5 374 970 345 971.5 374 973 364 974.5 368 976 358 977.5 394 979 361 980.5 363 982 380 983.5 366 985 380 986.5 376 988 378 989.5 393 991 404 992.5 387 994 382 995.5 391 997 389 998.5 387 1000 384" stroke="#edc948"/>
<path d="M388 562 389.5 570 391 578 392.5 579 394 553 395.5 565 397 555 398.5 552 400 560 401.5 555 403 545 404.5 536 406 550 407.5 553 409 537 410.5 520 412 530 413.5 519 415 536 416.5 538 418 543 419.5 519 421 536 422.5 530 424 520 425.5 529 427 518 428.5 533 430 515 431.5 523 433 540 434.5 515 436 502 437.5 515 439 505 440.5 505 442 514 443.5 472 445 513 446.5 493 448 469 449.5 513 451 481 452.5 487 454 491 455.5 489 457 501 458.5 486 460 481 461.5 467 463 479 464.5 487 466 474 467.5 485 469 470 470.5 458 472 479 473.5 451 475 472 476.5 461 478 458 479.5 446 481 465 482.5 467 484 460 485.5 458 487 441 488.5 467 490 457 491.5 447 493 461 494.5 437 496 437 497.5 448 499 441 500.5 457 502 434 503.5 444 505 433 506.5 436 508 426 509.5 428 511 417 512.5 427 514 431 515.5 432 517 427 518.5 434 520 413 521.5 411 523 412 524.5 401 526 410 527.5 394 529 410 530.5 418 532 415 533.5 392 535 427 536.5 416 538 397 539.5 389 541 407 542.5 404 544 396 545.5 395 547 400 548.5 402 550 413 551.5 385 553 387 554.5 395 556 390 557.5 357 559 392 560.5 406 562 398 563.5 395 565 387 566.5 390 568 367 569.5 367 571 370 572.5 351 574 381 575.5 371 577 378 578.5 376 580 379 581.5 382 583 366 584.5 350 586 357 587.5 364 589 361 590.5 350 592 362 593.5 368 595 351 596.5 352 598 349 599.5 353 601 360 602.5 352 604 363 605.5 349 607 362 608.5 369 610 340 611.5 346 613 354 614.5 342 616 349 617.5 358 619 360 620.5 340 622 347 623.5 367 625 351 626.5 346 628 347 629.5 353 631 339 632.5 330 634 326 635.5 348 637 332 638.5 324 640 322 641.5 354 643 356 644.5 337 646 348 647.5 344 649 310 650.5 343 652 337 653.5 327 655 332 656.5 318 658 342 659.5 338 661 326 662.5 327 664 315 665.5 340 667 330 668.5 333 670 329 671.5 314 673 339 674.5 342 676 327 677.5 317 679 312 680.5 333 682 327 683.5 345 685 328 686.5 308 688 306 689.5 317 691 328 692.5 310 694 321 695.5 318 697 313 698.5 304 700 323 701.5 307 703 296 704.5 292 706 312 707.5 316 709 312 710.5 319 712 318 713.5 315 715 314 716.5 319 718 331 719.5 318 721 308 722.5 315 724 323 725.5 303 727 305 728.5 315 730 299 731.5 320 733 308 734.5 305 736 302 737.5 292 739 302 740.5 292 742 296 743.5 289 745 310 746.5 305 748 313 749.5 296 751 307 752.5 305 754 311 755.5 305 757 314 758.5 303 760 317 761.5 326 763 319 764.5 310 766 310 767.5 316 769 297 770.5 300 772 305 773.5 305 775 305 776.5 327 778 336 779.5 312 781 295 782.5 312 784 309 785.5 282 787 316 788.5 304 790 300 791.5 302 793 322 794.5 302 796 311 797.5 306 799 302 800.5 307 802 322 803.5 332 805 308 806.5 311 808 311 809.5 314 811 318 812.5 321 814 313 815.5 293 817 329 818.5 320 820 302 821.5 317 823 317 824.5 319 826 295 827.5 331 829 311 830.5 328 832 322 833.5 310 835 308 836.5 328 838 328 839.5 324 841 314 842.5 326 844 335 845.5 327 847 301 848.5 315 850 321 851.5 337 853 315 854.5 309 856 317 857.5 341 859 334 860.5 330 862 351 863.5 306 865 308 866.5 312 868 311 869.5 320 871 313 872.5 336 874 329 875.5 345 877 344 878.5 309 880 334 881.5 328 883 308 884.5 362 886 339 887.5 322 889 351 890.5 333 892 338 893.5 351 895 335 896.5 344 898 323 899.5 321 901 349 902.5 344 904 345 905.5 354 907 331 908.5 334 910 335 911.5 340 913 351 914.5 354 916 347 917.5 348 919 361 920.5 330 922 339 923.5 371 925 341 926.5 349 928 354 929.5 370 931 366 932.5 351 934 341 935.5 368 937 356 938.5 345 940 372 941.5 348 943 352 944.5 372 946 344 947.5 382 949 382 950.5 344 952 366 953.5 379 955 377 956.5 380 958 349 959.5 372 961 368 962.5 368 964 372 965.5 385 967 372 968.5 377 970 365 971.5 366 973 386 974.5 352 976 371 977.5 394 979 384 980.5 382 982 397 983.5 391 985 403 986.5 399 988 385 989.5 393 991 393 992.5 387 994 399 995.5 390 997 399 998.5 397 1000 388" stroke="#b07aa1"/>
<path d="M388 579 389.5 563 391 583 392.5 564 394 553 395.5 570 397 572 398.5 567 400 554 401.5 541 403 565 404.5 572 406 549 407.5 558 409 538 410.5 541 412 554 413.5 545 415 536 416.5 533 418 542 419.5 539 421 533 422.5 527 424 543 425.5 508 427 544 428.5 531 430 532 431.5 508 433 514 434.5 518 436 508 437.5 527 439 525 440.5 524 442 507 443.5 494 445 474 446.5 509 448 496 449.5 482 451 495 452.5 515 454 495 455.5 491 457 502 458.5 493 460 486 461.5 474 463 465 464.5 459 466 472 467.5 498 469 490 470.5 457 472 473 473.5 457 475 475 476.5 479 478 461 479.5 472 481 449 482.5 473 484 486 485.5 471 487 448 488.5 454 490 451 491.5 455 493 460 494.5 450 496 462 497.5 481 499 444 500.5 457 502 426 503.5 443 505 421 506.5 427 508 468 509.5 453 511 454 512.5 424 514 429 515.5 427 517 439 518.5 431 520 427 521.5 419 523 415 524.5 427 526 411 527.5 416 529 432 530.5 428 532 419 533.5 429 535 400 536.5 422 538 413 539.5 425 541 403 542.5 396 544 412 545.5 391 547 399 548.5 394 550 415 551.5 410 553 390 554.5 399 556 395 557.5 385 559 406 560.5 396 562 412 563.5 378 565 390 566.5 386 568 373 569.5 380 571 368 572.5 388 574 392 575.5 390 577 374 578.5 387 580 388 581.5 410 583 385 584.5 366 586 354 587.5 368 589 388 590.5 368 592 375 593.5 356 595 373 596.5 379 598 372 599.5 384 601 369 602.5 374 604 375 605.5 383 607 356 608.5 332 610 366 611.5 353 613 359 614.5 355 616 360 617.5 349 619 360 620.5 362 622 361 623.5 335 625 357 626.5 337 628 358 629.5 341 631 344 632.5 367 634 355 635.5 354 637 353 638.5 339 640 357 641.5 344 643 343 644.5 356 646 339 647.5 347 649 352 650.5 336 652 361 653.5 352 655 343 656.5 351 658 337 659.5 314 661 342 662.5 344 664 347 665.5 339 667 337 668.5 341 670 326 671.5 329 673 344 674.5 340 676 343 677.5 334 679 341 680.5 329 682 289 683.5 323 685 337 686.5 334 688 318 689.5 326 691 317 692.5 332 694 349 695.5 333 697 333 698.5 339 700 321 701.5 325 703 321 704.5 317 706 314 707.5 320 709 320 710.5 344 712 324 713.5 320 715 346 716.5 321 718 320 719.5 325 721 308 722.5 317 724 315 725.5 332 727 314 728.5 311 730 319 731.5 317 733 318 734.5 317 736 320 737.5 321 739 326 740.5 299 742 335 743.5 324 745 312 746.5 323 748 309 749.5 317 751 335 752.5 334 754 318 755.5 345 757 326 758.5 285 760 313 761.5 322 763 323 764.5 336 766 321 767.5 327 769 343 770.5 319 772 318 773.5 330 775 336 776.5 343 778 328 779.5 335 781 291 782.5 314 784 306 785.5 332 787 304 788.5 320 790 293 791.5 322 793 338 794.5 308 796 318 797.5 295 799 324 800.5 303 802 326 803.5 323 805 305 806.5 331 808 334 809.5 323 811 331 812.5 318 814 320 815.5 341 817 322 818.5 321 820 307 821.5 303 823 312 824.5 347 826 285 827.5 336 829 332 830.5 315 832 323 833.5 323 835 330 836.5 333 838 330 839.5 344 841 329 842.5 339 844 342 845.5 307 847 334 848.5 315 850 336 851.5 332 853 330 854.5 339 856 328 857.5 330 859 341 860.5 341 862 343 863.5 338 865 348 866.5 322 868 339 869.5 338 871 326 872.5 339 874 326 875.5 301 877 318 878.5 349 880 351 881.5 349 883 336 884.5 348 886 322 887.5 323 889 351 890.5 349 892 334 893.5 351 895 361 896.5 327 898 372 899.5 340 901 326 902.5 346 904 356 905.5 356 907 339 908.5 336 910 362 911.5 372 913 355 914.5 347 916 356 917.5 358 919 352 920.5 373 922 357 923.5 327 925 355 926.5 353 928 382 929.5 374 931 373 932.5 363 934 373 935.5 371 937 377 938.5 380 940 382 941.5 369 943 378 944.5 360 946 380 947.5 370 949 358 950.5 377 952 385 953.5 390 955 376 956.5 375 958 370 959.5 390 961 400 962.5 381 964 390 965.5 397 967 379 968.5 394 970 397 971.5 387 973 390 974.5 375 976 397 977.5 392 979 401 980.5 403 982 396 983.5 414 985 386 986.5 394 988 397 989.5 405 991 393 992.5 414 994 407 995.5 412 997 395 998.5 405 1000 414" stroke="#ff9da7"/>
<path d="M388 599 389.5 586 391 589 392.5 595 394 587 395.5 561 397 575 398.5 578 400 565 401.5 584 403 574 404.5 564 406 587 407.5 540 409 567 410.5 553 412 565 413.5 522 415 563 416.5 519 418 537 419.5 569 421 539 422.5 569 424 548 425.5 554 427 539 428.5 550 430 527 431.5 548 433 521 434.5 516 436 520 437.5 514 439 516 440.5 520 442 511 443.5 521 445 518 446.5 523 448 524 449.5 515 451 516 452.5 496 454 495 455.5 516 457 501 458.5 493 460 505 461.5 497 463 508 464.5 471 466 480 467.5 486 469 503 470.5 501 472 508 473.5 486 475 480 476.5 446 478 487 479.5 485 481 483 482.5 477 484 496 485.5 454 487 488 488.5 474 490 446 491.5 472 493 477 494.5 442 496 446 497.5 483 499 467 500.5 443 502 425 503.5 455 505 458 506.5 465 508 460 509.5 440 511 443 512.5 440 514 457 515.5 434 517 443 518.5 428 520 433 521.5 443 523 446 524.5 435 526 442 527.5 417 529 426 530.5 436 532 430 533.5 399 535 423 536.5 412 538 423 539.5 422 541 419 542.5 413 544 424 545.5 443 547 422 548.5 414 550 408 551.5 414 553 408 554.5 399 556 395 557.5 412 559 402 560.5 398 562 398 563.5 424 565 389 566.5 402 568 400 569.5 385 571 406 572.5 364 574 389 575.5 397 577 405 578.5 379 580 364 581.5 389 583 369 584.5 356 586 372 587.5 381 589 379 590.5 377 592 357 593.5 373 595 375 596.5 392 598 360 599.5 377 601 381 602.5 373 604 372 605.5 371 607 370 608.5 356 610 379 611.5 367 613 371 614.5 348 616 375 617.5 346 619 349 620.5 385 622 360 623.5 358 625 363 626.5 367 628 368 629.5 362 631 350 632.5 365 634 364 635.5 355 637 373 638.5 347 640 350 641.5 355 643 360 644.5 350 646 351 647.5 348 649 352 650.5 333 652 342 653.5 368 655 347 656.5 351 658 331 659.5 360 661 359 662.5 344 664 350 665.5 352 667 350 668.5 340 670 363 671.5 339 673 327 674.5 337 676 327 677.5 347 679 354 680.5 325 682 320 683.5 356 685 332 686.5 331 688 349 689.5 342 691 328 692.5 334 694 337 695.5 318 697 329 698.5 332 700 331 701.5 335 703 335 704.5 323 706 335 707.5 317 709 336 710.5 329 712 314 713.5 327 715 312 716.5 325 718 333 719.5 329 721 334 722.5 322 724 338 725.5 333 727 339 728.5 305 730 342 731.5 322 733 325 734.5 328 736 317 737.5 338 739 339 740.5 325 742 322 743.5 317 745 323 746.5 329 748 339 749.5 328 751 318 752.5 334 754 316 755.5 330 757 311 758.5 326 760 323 761.5 316 763 319 764.5 328 766 320 767.5 331 769 301 770.5 317 772 340 773.5 330 775 319 776.5 331 778 343 779.5 335 781 329 782.5 348 784 328 785.5 327 787 303 788.5 324 790 333 791.5 301 793 344 794.5 314 796 334 797.5 323 799 334 800.5 342 802 309 803.5 321 805 334 806.5 339 808 315 809.5 330 811 320 812.5 308 814 312 815.5 339 817 325 818.5 330 820 329 821.5 328 823 316 824.5 314 826 332 827.5 343 829 340 830.5 321 832 346 833.5 318 835 355 836.5 328 838 326 839.5 344 841 321 842.5 336 844 339 845.5 346 847 350 848.5 337 850 347 851.5 352 853 332 854.5 339 856 339 857.5 341 859 330 860.5 357 862 332 863.5 330 865 365 866.5 341 868 356 869.5 357 871 350 872.5 341 874 335 875.5 350 877 311 878.5 338 880 375 881.5 340 883 362 884.5 349 886 349 887.5 357 889 367 890.5 342 892 362 893.5 354 895 351 896.5 357 898 371 899.5 364 901 373 902.5 362 904 372 905.5 370 907 353 908.5 356 910 359 911.5 364 913 381 914.5 366 916 368 917.5 380 919 351 920.5 373 922 359 923.5 373 925 364 926.5 347 928 365 929.5 372 931 379 932.5 354 934 355 935.5 381 937 380 938.5 363 940 387 941.5 399 943 387 944.5 379 946 393 947.5 361 949 384 950.5 396 952 396 953.5 389 955 381 956.5 397 958 385 959.5 393 961 368 962.5 393 964 394 965.5 392 967 387 968.5 406 970 411 971.5 406 973 395 974.5 383 976 406 977.5 400 979 393 980.5 407 982 391 983.5 429 985 370 986.5 414 988 427 989.5 410 991 412 992.5 429 994 402 995.5 402 997 413 998.5 410 1000 416" stroke="#9c755f"/>
<path d="M388 603 389.5 596 391 609 392.5 583 394 584 395.5 578 397 582 398.5 597 400 562 401.5 562 403 600 404.5 570 406 562 407.5 581 409 571 410.5 562 412 565 413.5 569 415 558 416.5 560 418 555 419.5 535 421 561 422.5 564 424 546 425.5 549 427 551 428.5 534 430 542 431.5 529 433 534 434.5 541 436 507 437.5 503 439 514 440.5 518 442 535 443.5 508 445 523 446.5 532 448 525 449.5 535 451 516 452.5 513 454 503 455.5 519 457 502 458.5 514 460 515 461.5 508 463 491 464.5 507 466 522 467.5 515 469 491 470.5 489 472 494 473.5 489 475 497 476.5 506 478 499 479.5 480 481 491 482.5 472 484 464 485.5 484 487 484 488.5 478 490 479 491.5 452 493 465 494.5 443 496 457 497.5 462 499 455 500.5 463 502 470 503.5 457 505 452 506.5 453 508 466 509.5 459 511 469 512.5 433 514 460 515.5 452 517 458 518.5 422 520 454 521.5 435 523 452 524.5 466 526 443 527.5 426 529 441 530.5 426 532 436 533.5 434 535 431 536.5 429 538 455 539.5 423 541 409 542.5 442 544 409 545.5 431 547 428 548.5 422 550 425 551.5 411 553 415 554.5 418 556 416 557.5 430 559 419 560.5 413 562 406 563.5 405 565 409 566.5 418 568 409 569.5 387 571 405 572.5 402 574 405 575.5 376 577 383 578.5 410 580 420 581.5 394 583 377 584.5 385 586 405 587.5 399 589 385 590.5 370 592 385 593.5 382 595 387 596.5 400 598 404 599.5 377 601 396 602.5 351 604 398 605.5 388 607 369 608.5 358 610 355 611.5 387 613 387 614.5 364 616 385 617.5 357 619 382 620.5 375 622 345 623.5 375 625 365 626.5 346 628 377 629.5 363 631 349 632.5 370 634 375 635.5 355 637 359 638.5 380 640 368 641.5 362 643 353 644.5 376 646 364 647.5 353 649 360 650.5 358 652 352 653.5 346 655 361 656.5 363 658 365 659.5 358 661 357 662.5 349 664 335 665.5 338 667 350 668.5 346 670 347 671.5 351 673 321 674.5 346 676 346 677.5 342 679 351 680.5 354 682 360 683.5 351 685 363 686.5 322 688 354 689.5 355 691 365 692.5 341 694 345 695.5 350 697 349 698.5 349 700 341 701.5 340 703 310 704.5 344 706 345 707.5 349 709 319 710.5 360 712 317 713.5 328 715 313 716.5 337 718 353 719.5 333 721 357 722.5 328 724 356 725.5 332 727 326 728.5 320 730 343 731.5 318 733 326 734.5 320 736 335 737.5 334 739 342 740.5 349 742 327 743.5 330 745 327 746.5 329 748 346 749.5 354 751 334 752.5 331 754 317 755.5 315 757 330 758.5 327 760 319 761.5 321 763 327 764.5 345 766 351 767.5 334 769 342 770.5 330 772 339 773.5 340 775 330 776.5 321 778 332 779.5 324 781 314 782.5 312 784 342 785.5 335 787 327 788.5 325 790 336 791.5 335 793 328 794.5 334 796 335 797.5 341 799 326 800.5 341 802 332 803.5 335 805 325 806.5 335 808 346 809.5 317 811 329 812.5 323 814 329 815.5 341 817 340 818.5 336 820 314 821.5 348 823 329 824.5 338 826 356 827.5 348 829 351 830.5 348 832 324 833.5 336 835 330 836.5 336 838 340 839.5 335 841 344 842.5 320 844 351 845.5 339 847 357 848.5 370 850 348 851.5 334 853 337 854.5 347 856 330 857.5 357 859 347 860.5 342 862 345 863.5 362 865 322 866.5 348 868 355 869.5 368 871 354 872.5 340 874 354 875.5 354 877 359 878.5 347 880 363 881.5 347 883 360 884.5 353 886 346 887.5 351 889 350 890.5 384 892 367 893.5 366 895 373 896.5 376 898 365 899.5 348 901 360 902.5 362 904 366 905.5 362 907 363 908.5 325 910 363 911.5 357 913 373 914.5 364 916 370 917.5 376 919 379 920.5 383 922 366 923.5 372 925 380 926.5 383 928 366 929.5 374 931 400 932.5 363 934 355 935.5 369 937 385 938.5 393 940 382 941.5 377 943 366 944.5 388 946 401 947.5 397 949 394 950.5 385 952 404 953.5 405 955 382 956.5 383 958 402 959.5 381 961 404 962.5 399 964 393 965.5 412 967 389 968.5 400 970 402 971.5 396 973 415 974.5 392 976 396 977.5 399 979 397 980.5 416 982 425 983.5 398 985 410 986.5 406 988 401 989.5 415 991 422 992.5 419 994 423 995.5 430 997 417 998.5 421 1000 422" stroke="#bab0ac"/>
<path d="M388 583 389.5 617 391 583 392.5 575 394 596 395.5 589 397 598 398.5 581 400 589 401.5 564 403 572 404.5 564 406 559 407.5 571 409 595 410.5 564 412 577 413.5 555 415 577 416.5 550 418 567 419.5 560 421 532 422.5 542 424 562 425.5 554 427 535 428.5 531 430 537 431.5 519 433 541 434.5 564 436 530 437.5 527 439 539 440.5 526 442 522 443.5 533 445 502 446.5 518 448 539 449.5 511 451 522 452.5 525 454 507 455.5 508 457 533 458.5 512 460 503 461.5 495 463 521 464.5 517 466 503 467.5 513 469 499 470.5 495 472 486 473.5 490 475 488 476.5 490 478 498 479.5 502 481 468 482.5 487 484 484 485.5 488 487 458 488.5 472 490 470 491.5 486 493 492 494.5 471 496 480 497.5 463 499 477 500.5 475 502 464 503.5 466 505 450 506.5 456 508 431 509.5 464 511 457 512.5 429 514 445 515.5 428 517 464 518.5 448 520 453 521.5 450 523 430 524.5 447 526 459 527.5 450 529 425 530.5 428 532 444 533.5 460 535 422 536.5 435 538 454 539.5 437 541 439 542.5 419 544 418 545.5 404 547 436 548.5 432 550 447 551.5 407 553 437 554.5 421 556 418 557.5 403 559 423 560.5 421 562 420 563.5 420 565 418 566.5 408 568 427 569.5 428 571 417 572.5 381 574 396 575.5 396 577 426 578.5 387 580 413 581.5 407 583 401 584.5 395 586 404 587.5 415 589 398 590.5 380 592 393 593.5 402 595 404 596.5 375 598 397 599.5 402 601 391 602.5 380 604 386 605.5 380 607 387 608.5 378 610 436 611.5 370 613 371 614.5 378 616 378 617.5 363 619 359 620.5 378 622 363 623.5 382 625 371 626.5 386 628 371 629.5 375 631 380 632.5 383 634 364 635.5 375 637 360 638.5 374 640 361 641.5 355 643 382 644.5 336 646 382 647.5 360 649 360 650.5 373 652 348 653.5 369 655 371 656.5 341 658 340 659.5 357 661 344 662.5 353 664 351 665.5 359 667 361 668.5 361 670 357 671.5 363 673 350 674.5 368 676 347 677.5 335 679 355 680.5 353 682 345 683.5 352 685 332 686.5 340 688 346 689.5 358 691 358 692.5 343 694 347 695.5 347 697 325 698.5 326 700 343 701.5 332 703 350 704.5 348 706 334 707.5 361 709 344 710.5 344 712 359 713.5 335 715 324 716.5 374 718 321 719.5 345 721 341 722.5 331 724 328 725.5 335 727 358 728.5 327 730 339 731.5 336 733 358 734.5 347 736 341 737.5 332 739 351 740.5 351 742 351 743.5 336 745 331 746.5 323 748 337 749.5 325 751 349 752.5 362 754 335 755.5 323 757 342 758.5 333 760 337 761.5 338 763 351 764.5 345 766 324 767.5 328 769 360 770.5 327 772 332 773.5 328 775 321 776.5 340 778 353 779.5 324 781 356 782.5 341 784 353 785.5 332 787 329 788.5 341 790 336 791.5 337 793 336 794.5 344 796 313 797.5 336 799 350 800.5 337 802 335 803.5 347 805 338 806.5 338 808 347 809.5 351 811 349 812.5 336 814 325 815.5 354 817 334 818.5 328 820 332 821.5 330 823 338 824.5 330 826 338 827.5 355 829 348 830.5 335 832 335 833.5 338 835 346 836.5 332 838 351 839.5 327 841 344 842.5 344 844 365 845.5 354 847 378 848.5 344 850 357 851.5 327 853 340 854.5 357 856 337 857.5 340 859 347 860.5 345 862 373 863.5 354 865 335 866.5 338 868 362 869.5 362 871 364 872.5 349 874 360 875.5 359 877 366 878.5 354 880 361 881.5 361 883 359 884.5 355 886 352 887.5 352 889 341 890.5 362 892 338 893.5 363 895 370 896.5 386 898 367 899.5 360 901 359 902.5 360 904 387 905.5 358 907 369 908.5 382 910 374 911.5 370 913 385 914.5 368 916 385 917.5 378 919 383 920.5 370 922 398 923.5 365 925 383 926.5 370 928 378 929.5 393 931 371 932.5 383 934 388 935.5 369 937 361 938.5 392 940 386 941.5 390 943 392 944.5 392 946 393 947.5 388 949 405 950.5 402 952 404 953.5 404 955 399 956.5 388 958 401 959.5 410 961 402 962.5 413 964 410 965.5 419 967 404 968.5 411 970 419 971.5 413 973 374 974.5 412 976 419 977.5 398 979 410 980.5 419 982 406 983.5 420 985 410 986.5 424 988 421 989.5 419 991 414 992.5 422 994 413 995.5 428 997 413 998.5 427 1000 449" stroke="#4e79a7"/>
<path d="M388 597 389.5 641 391 631 392.5 598 394 610 395.5 605 397 621 398.5 609 400 605 401.5 599 403 596 404.5 601 406 595 407.5 596 409 599 410.5 610 412 585 413.5 574 415 595 416.5 598 418 577 419.5 567 421 574 422.5 567 424 569 425.5 551 427 560 428.5 564 430 545 431.5 574 433 564 434.5 570 436 554 437.5 562 439 562 440.5 537 442 548 443.5 541 445 539 446.5 552 448 546 449.5 539 451 534 452.5 548 454 559 455.5 543 457 545 458.5 523 460 525 461.5 540 463 527 464.5 528 466 542 467.5 515 469 513 470.5 520 472 513 473.5 535 475 508 476.5 504 478 505 479.5 528 481 501 482.5 520 484 516 485.5 503 487 498 488.5 510 490 485 491.5 492 493 480 494.5 490 496 483 497.5 492 499 498 500.5 483 502 486 503.5 487 505 482 506.5 472 508 482 509.5 472 511 491 512.5 487 514 470 515.5 486 517 485 518.5 470 520 462 521.5 460 523 468 524.5 462 526 479 527.5 459 529 436 530.5 456 532 468 533.5 457 535 432 536.5 438 538 464 539.5 462 541 471 542.5 436 544 474 545.5 456 547 458 548.5 436 550 445 551.5 460 553 450 554.5 447 556 460 557.5 427 559 446 560.5 442 562 450 563.5 446 565 443 566.5 416 568 433 569.5 438 571 435 572.5 380 574 417 575.5 434 577 437 578.5 431 580 387 581.5 428 583 433 584.5 425 586 417 587.5 422 589 430 590.5 403 592 412 593.5 436 595 423 596.5 412 598 436 599.5 428 601 410 602.5 385 604 409 605.5 406 607 384 608.5 410 610 396 611.5 419 613 411 614.5 411 616 399 617.5 390 619 372 620.5 390 622 395 623.5 410 625 374 626.5 397 628 405 629.5 368 631 387 632.5 396 634 381 635.5 393 637 391 638.5 387 640 378 641.5 401 643 384 644.5 379 646 384 647.5 400 649 393 650.5 381 652 364 653.5 384 655 381 656.5 373 658 376 659.5 385 661 388 662.5 378 664 378 665.5 384 667 382 668.5 373 670 379 671.5 376 673 385 674.5 402 676 372 677.5 373 679 381 680.5 381 682 392 683.5 365 685 365 686.5 373 688 389 689.5 362 691 370 692.5 386 694 381 695.5 358 697 365 698.5 387 700 370 701.5 385 703 356 704.5 361 706 332 707.5 374 709 356 710.5 352 712 363 713.5 369 715 353 716.5 365 718 367 719.5 372 721 372 722.5 349 724 361 725.5 374 727 355 728.5 373 730 370 731.5 366 733 373 734.5 350 736 358 737.5 365 739 353 740.5 359 742 359 743.5 363 745 358 746.5 379 748 345 749.5 362 751 357 752.5 373 754 359 755.5 378 757 370 758.5 378 760 362 761.5 363 763 374 764.5 367 766 366 767.5 385 769 355 770.5 371 772 351 773.5 348 775 369 776.5 365 778 348 779.5 363 781 360 782.5 365 784 339 785.5 373 787 362 788.5 378 790 375 791.5 360 793 348 794.5 388 796 359 797.5 378 799 346 800.5 345 802 380 803.5 370 805 363 806.5 345 808 378 809.5 324 811 378 812.5 347 814 331 815.5 358 817 353 818.5 361 820 357 821.5 372 823 372 824.5 372 826 372 827.5 355 829 371 830.5 379 832 363 833.5 372 835 370 836.5 363 838 367 839.5 359 841 360 842.5 361 844 381 845.5 367 847 371 848.5 389 850 374 851.5 351 853 371 854.5 370 856 361 857.5 372 859 377 860.5 397 862 382 863.5 371 865 364 866.5 398 868 381 869.5 386 871 368 872.5 396 874 394 875.5 397 877 381 878.5 395 880 380 881.5 386 883 371 884.5 399 886 361 887.5 383 889 380 890.5 412 892 404 893.5 388 895 375 896.5 397 898 376 899.5 387 901 388 902.5 411 904 395 905.5 388 907 407 908.5 408 910 412 911.5 409 913 422 914.5 391 916 387 917.5 415 919 412 920.5 405 922 411 923.5 413 925 391 926.5 410 928 403 929.5 406 931 426 932.5 392 934 419 935.5 411 937 408 938.5 406 940 397 941.5 413 943 412 944.5 416 946 406 947.5 414 949 408 950.5 416 952 419 953.5 439 955 428 956.5 428 958 420 959.5 449 961 423 962.5 415 964 442 965.5 446 967 427 968.5 453 970 416 971.5 435 973 437 974.5 447 976 424 977.5 445 979 453 980.5 431 982 454 983.5 439 985 460 986.5 434 988 450 989.5 414 991 436 992.5 447 994 461 995.5 432 997 456 998.5 460 1000 478" stroke="#f28e2b"/>
<path d="M388 638 389.5 644 391 626 392.5 642 394 609 395.5 626 397 624 398.5 618 400 599 401.5 616 403 620 404.5 613 406 613 407.5 626 409 602 410.5 613 412 591 413.5 594 415 575 416.5 609 418 587 419.5 580 421 596 422.5 574 424 577 425.5 582 427 583 428.5 590 430 570 431.5 574 433 577 434.5 564 436 566 437.5 588 439 572 440.5 569 442 582 443.5 568 445 573 446.5 554 448 569 449.5 563 451 538 452.5 562 454 569 455.5 543 457 546 458.5 556 460 526 461.5 543 463 529 464.5 534 466 539 467.5 546 469 522 470.5 524 472 515 473.5 510 475 541 476.5 520 478 523 479.5 530 481 537 482.5 532 484 522 485.5 486 487 509 488.5 520 490 507 491.5 505 493 510 494.5 524 496 518 497.5 505 499 490 500.5 488 502 509 503.5 511 505 488 506.5 491 508 473 509.5 479 511 481 512.5 489 514 503 515.5 485 517 469 518.5 479 520 472 521.5 477 523 485 524.5 473 526 482 527.5 460 529 484 530.5 462 532 470 533.5 474 535 455 536.5 454 538 461 539.5 458 541 453 542.5 456 544 447 545.5 446 547 453 548.5 466 550 453 551.5 469 553 456 554.5 444 556 455 557.5 434 559 418 560.5 430 562 461 563.5 457 565 443 566.5 453 568 432 569.5 429 571 453 572.5 457 574 442 575.5 433 577 424 578.5 421 580 416 581.5 441 583 431 584.5 444 586 428 587.5 453 589 443 590.5 415 592 432 593.5 434 595 420 596.5 418 598 402 599.5 420 601 419 602.5 397 604 421 605.5 402 607 437 608.5 403 610 416 611.5 390 613 437 614.5 423 616 427 617.5 404 619 428 620.5 394 622 391 623.5 415 625 418 626.5 388 628 416 629.5 424 631 399 632.5 397 634 409 635.5 401 637 397 638.5 420 640 395 641.5 402 643 403 644.5 403 646 396 647.5 385 649 393 650.5 390 652 395 653.5 402 655 399 656.5 403 658 397 659.5 407 661 399 662.5 383 664 381 665.5 385 667 392 668.5 376 670 391 671.5 394 673 399 674.5 381 676 399 677.5 395 679 377 680.5 402 682 393 683.5 383 685 384 686.5 398 688 391 689.5 384 691 398 692.5 369 694 381 695.5 383 697 384 698.5 375 700 391 701.5 375 703 388 704.5 388 706 364 707.5 378 709 362 710.5 400 712 355 713.5 380 715 363 716.5 348 718 370 719.5 402 721 379 722.5 385 724 370 725.5 390 727 368 728.5 385 730 361 731.5 365 733 370 734.5 395 736 370 737.5 372 739 386 740.5 375 742 354 743.5 390 745 394 746.5 375 748 381 749.5 359 751 373 752.5 349 754 367 755.5 366 757 376 758.5 367 760 359 761.5 380 763 381 764.5 375 766 375 767.5 366 769 362 770.5 377 772 363 773.5 385 775 363 776.5 362 778 361 779.5 382 781 384 782.5 378 784 368 785.5 375 787 363 788.5 362 790 369 791.5 364 793 388 794.5 365 796 380 797.5 372 799 363 800.5 379 802 366 803.5 385 805 370 806.5 367 808 386 809.5 380 811 386 812.5 375 814 378 815.5 371 817 367 818.5 381 820 357 821.5 370 823 387 824.5 386 826 349 827.5 362 829 371 830.5 377 832 388 833.5 383 835 360 836.5 386 838 376 839.5 384 841 375 842.5 390 844 354 845.5 390 847 376 848.5 395 850 362 851.5 390 853 372 854.5 404 856 356 857.5 383 859 392 860.5 376 862 388 863.5 404 865 392 866.5 386 868 392 869.5 402 871 381 872.5 401 874 386 875.5 391 877 397 878.5 393 880 386 881.5 411 883 383 884.5 395 886 394 887.5 396 889 394 890.5 414 892 393 893.5 397 895 400 896.5 400 898 389 899.5 396 901 402 902.5 411 904 428 905.5 396 907 411 908.5 414 910 420 911.5 403 913 414 914.5 388 916 423 917.5 401 919 406 920.5 394 922 405 923.5 420 925 410 926.5 413 928 411 929.5 420 931 416 932.5 413 934 401 935.5 424 937 429 938.5 419 940 404 941.5 447 943 441 944.5 426 946 430 947.5 427 949 431 950.5 429 952 442 953.5 428 955 439 956.5 421 958 437 959.5 440 961 424 962.5 441 964 434 965.5 442 967 447 968.5 439 970 448 971.5 425 973 443 974.5 438 976 427 977.5 444 979 447 980.5 452 982 469 983.5 451 985 439 986.5 441 988 456 989.5 450 991 461 992.5 469 994 455 995.5 478 997 459 998.5 469 1000 472" stroke="#e15759"/>
<path d="M388 635 389.5 639 391 633 392.5 650 394 628 395.5 620 397 633 398.5 626 400 638 401.5 634 403 611 404.5 630 406 629 407.5 627 409 598 410.5 616 412 600 413.5 607 415 597 416.5 611 418 573 419.5 588 421 587 422.5 590 424 608 425.5 601 427 592 428.5 601 430 575 431.5 594 433 577 434.5 592 436 574 437.5 580 439 574 440.5 566 442 579 443.5 586 445 562 446.5 568 448 586 449.5 567 451 555 452.5 570 454 565 455.5 561 457 551 458.5 557 460 537 461.5 550 463 554 464.5 549 466 541 467.5 551 469 547 470.5 538 472 550 473.5 542 475 531 476.5 544 478 537 479.5 541 481 527 482.5 501 484 536 485.5 530 487 530 488.5 517 490 505 491.5 529 493 520 494.5 537 496 503 497.5 514 499 514 500.5 500 502 521 503.5 511 505 506 506.5 515 508 503 509.5 493 511 497 512.5 516 514 507 515.5 481 517 459 518.5 509 520 512 521.5 488 523 490 524.5 470 526 497 527.5 462 529 473 530.5 483 532 475 533.5 480 535 506 536.5 476 538 478 539.5 482 541 473 542.5 452 544 474 545.5 474 547 456 548.5 446 550 468 551.5 465 553 473 554.5 467 556 472 557.5 444 559 475 560.5 459 562 460 563.5 470 565 443 566.5 461 568 463 569.5 441 571 445 572.5 445 574 432 575.5 447 577 466 578.5 443 580 436 581.5 444 583 452 584.5 431 586 445 587.5 440 589 461 590.5 439 592 445 593.5 450 595 421 596.5 410 598 424 599.5 442 601 431 602.5 433 604 433 605.5 429 607 440 608.5 440 610 421 611.5 425 613 426 614.5 432 616 411 617.5 423 619 423 620.5 406 622 418 623.5 420 625 445 626.5 414 628 423 629.5 417 631 417 632.5 421 634 400 635.5 408 637 406 638.5 421 640 394 641.5 416 643 406 644.5 408 646 407 647.5 412 649 388 650.5 417 652 405 653.5 403 655 389 656.5 399 658 416 659.5 404 661 401 662.5 396 664 402 665.5 389 667 403 668.5 411 670 384 671.5 415 673 403 674.5 397 676 370 677.5 394 679 397 680.5 384 682 375 683.5 413 685 411 686.5 402 688 397 689.5 398 691 400 692.5 384 694 400 695.5 375 697 400 698.5 400 700 377 701.5 404 703 397 704.5 361 706 370 707.5 373 709 365 710.5 371 712 378 713.5 381 715 395 716.5 379 718 372 719.5 366 721 373 722.5 391 724 389 725.5 393 727 401 728.5 366 730 380 731.5 380 733 386 734.5 376 736 376 737.5 385 739 390 740.5 376 742 387 743.5 382 745 386 746.5 373 748 361 749.5 391 751 382 752.5 393 754 404 755.5 383 757 385 758.5 351 760 377 761.5 385 763 363 764.5 363 766 395 767.5 379 769 385 770.5 359 772 375 773.5 388 775 375 776.5 381 778 371 779.5 379 781 396 782.5 354 784 357 785.5 386 787 401 788.5 389 790 373 791.5 367 793 381 794.5 368 796 362 797.5 366 799 371 800.5 369 802 380 803.5 379 805 380 806.5 388 808 394 809.5 401 811 393 812.5 372 814 401 815.5 388 817 383 818.5 394 820 380 821.5 388 823 375 824.5 391 826 404 827.5 387 829 378 830.5 397 832 398 833.5 389 835 384 836.5 395 838 396 839.5 389 841 406 842.5 399 844 404 845.5 382 847 381 848.5 397 850 391 851.5 403 853 383 854.5 395 856 392 857.5 390 859 410 860.5 389 862 395 863.5 389 865 395 866.5 402 868 405 869.5 378 871 408 872.5 404 874 383 875.5 406 877 386 878.5 413 880 406 881.5 406 883 400 884.5 416 886 408 887.5 416 889 396 890.5 398 892 409 893.5 389 895 394 896.5 418 898 405 899.5 415 901 393 902.5 403 904 409 905.5 426 907 428 908.5 407 910 405 911.5 423 913 416 914.5 411 916 408 917.5 412 919 438 920.5 432 922 418 923.5 413 925 425 926.5 431 928 426 929.5 440 931 444 932.5 423 934 429 935.5 431 937 417 938.5 427 940 421 941.5 427 943 415 944.5 423 946 442 947.5 446 949 440 950.5 450 952 444 953.5 453 955 438 956.5 440 958 448 959.5 448 961 448 962.5 449 964 461 965.5 442 967 445 968.5 460 970 454 971.5 435 973 452 974.5 460 976 455 977.5 451 979 463 980.5 450 982 462 983.5 443 985 451 986.5 484 988 451 989.5 464 991 487 992.5 496 994 475 995.5 468 997 472 998.5 484 1000 466" stroke="#76b7b2"/>
<path d="M388 648 389.5 673 391 645 392.5 630 394 623 395.5 628 397 642 398.5 642 400 637 401.5 655 403 640 404.5 616 406 596 407.5 623 409 622 410.5 621 412 628 413.5 615 415 615 416.5 631 418 607 419.5 610 421 602 422.5 604 424 608 425.5 628 427 608 428.5 580 430 596 431.5 610 433 576 434.5 602 436 569 437.5 584 439 569 440.5 589 442 569 443.5 577 445 551 446.5 586 448 567 449.5 582 451 577 452.5 529 454 564 455.5 580 457 596 458.5 564 460 563 461.5 558 463 584 464.5 550 466 539 467.5 557 469 550 470.5 560 472 548 473.5 549 475 564 476.5 550 478 545 479.5 534 481 533 482.5 534 484 526 485.5 531 487 534 488.5 542 490 529 491.5 531 493 521 494.5 522 496 518 497.5 536 499 515 500.5 502 502 508 503.5 525 505 518 506.5 510 508 518 509.5 495 511 509 512.5 527 514 524 515.5 503 517 513 518.5 503 520 514 521.5 475 523 503 524.5 493 526 487 527.5 476 529 487 530.5 486 532 485 533.5 501 535 480 536.5 492 538 493 539.5 484 541 478 542.5 488 544 474 545.5 481 547 487 548.5 471 550 502 551.5 439 553 464 554.5 455 556 457 557.5 473 559 471 560.5 468 562 477 563.5 475 565 450 566.5 467 568 458 569.5 475 571 449 572.5 479 574 463 575.5 464 577 457 578.5 457 580 463 581.5 469 583 443 584.5 450 586 455 587.5 448 589 448 590.5 434 592 430 593.5 446 595 433 596.5 456 598 438 599.5 435 601 424 602.5 451 604 429 605.5 447 607 422 608.5 442 610 434 611.5 444 613 427 614.5 430 616 424 617.5 464 619 433 620.5 436 622 433 623.5 408 625 458 626.5 431 628 438 629.5 439 631 431 632.5 421 634 424 635.5 439 637 428 638.5 433 640 427 641.5 434 643 420 644.5 396 646 422 647.5 411 649 437 650.5 429 652 418 653.5 431 655 429 656.5 415 658 408 659.5 408 661 418 662.5 418 664 397 665.5 424 667 408 668.5 407 670 383 671.5 401 673 395 674.5 418 676 408 677.5 403 679 405 680.5 426 682 409 683.5 414 685 404 686.5 385 688 406 689.5 414 691 374 692.5 412 694 401 695.5 404 697 404 698.5 393 700 373 701.5 410 703 400 704.5 408 706 378 707.5 395 709 384 710.5 394 712 384 713.5 402 715 404 716.5 397 718 373 719.5 409 721 386 722.5 404 724 398 725.5 399 727 399 728.5 392 730 397 731.5 386 733 380 734.5 378 736 385 737.5 402 739 388 740.5 389 742 411 743.5 390 745 373 746.5 385 748 419 749.5 377 751 387 752.5 381 754 394 755.5 395 757 398 758.5 403 760 401 761.5 412 763 386 764.5 392 766 408 767.5 376 769 383 770.5 370 772 395 773.5 397 775 369 776.5 395 778 402 779.5 397 781 374 782.5 397 784 387 785.5 391 787 408 788.5 382 790 389 791.5 384 793 386 794.5 408 796 395 797.5 389 799 391 800.5 391 802 384 803.5 389 805 380 806.5 410 808 405 809.5 399 811 383 812.5 391 814 402 815.5 370 817 389 818.5 392 820 409 821.5 406 823 366 824.5 384 826 398 827.5 399 829 406 830.5 393 832 412 833.5 405 835 426 836.5 414 838 403 839.5 428 841 412 842.5 410 844 410 845.5 399 847 408 848.5 403 850 418 851.5 413 853 389 854.5 408 856 407 857.5 415 859 405 860.5 415 862 394 863.5 430 865 423 866.5 405 868 424 869.5 409 871 425 872.5 397 874 416 875.5 398 877 423 878.5 421 880 429 881.5 415 883 399 884.5 396 886 413 887.5 417 889 401 890.5 408 892 431 893.5 412 895 426 896.5 417 898 422 899.5 427 901 446 902.5 442 904 414 905.5 412 907 427 908.5 417 910 422 911.5 444 913 429 914.5 444 916 427 917.5 448 919 443 920.5 438 922 433 923.5 420 925 439 926.5 449 928 438 929.5 441 931 442 932.5 445 934 444 935.5 441 937 443 938.5 440 940 443 941.5 429 943 461 944.5 436 946 447 947.5 459 949 436 950.5 446 952 458 953.5 457 955 451 956.5 441 958 450 959.5 445 961 461 962.5 474 964 481 965.5 478 967 467 968.5 452 970 470 971.5 468 973 480 974.5 469 976 477 977.5 458 979 479 980.5 463 982 486 983.5 494 985 486 986.5 467 988 496 989.5 472 991 496 992.5 489 994 494 995.5 485 997 475 998.5 494 1000 480" stroke="#59a14f"/>
<path d="M388 677 389.5 663 391 656 392.5 633 394 657 395.5 640 397 656 398.5 644 400 642 401.5 639 403 619 404.5 635 406 623 407.5 619 409 643 410.5 636 412 623 413.5 627 415 613 416.5 625 418 591 419.5 634 421 615 422.5 599 424 631 425.5 613 427 630 428.5 615 430 599 431.5 597 433 583 434.5 597 436 602 437.5 573 439 605 440.5 584 442 580 443.5 589 445 596 446.5 589 448 589 449.5 582 451 559 452.5 573 454 584 455.5 568 457 575 458.5 595 460 560 461.5 572 463 569 464.5 553 466 559 467.5 585 469 563 470.5 555 472 562 473.5 558 475 543 476.5 543 478 563 479.5 550 481 552 482.5 555 484 543 485.5 549 487 524 488.5 535 490 550 491.5 522 493 552 494.5 532 496 538 497.5 532 499 542 500.5 526 502 527 503.5 538 505 529 506.5 533 508 528 509.5 530 511 520 512.5 521 514 506 515.5 510 517 513 518.5 533 520 508 521.5 509 523 495 524.5 508 526 509 527.5 518 529 509 530.5 506 532 476 533.5 498 535 519 536.5 490 538 476 539.5 499 541 499 542.5 487 544 515 545.5 493 547 485 548.5 503 550 487 551.5 475 553 495 554.5 485 556 482 557.5 463 559 492 560.5 486 562 493 563.5 477 565 470 566.5 478 568 475 569.5 486 571 479 572.5 480 574 465 575.5 461 577 466 578.5 477 580 462 581.5 485 583 458 584.5 461 586 451 587.5 455 589 459 590.5 450 592 467 593.5 451 595 441 596.5 461 598 420 599.5 442 601 432 602.5 450 604 438 605.5 445 607 464 608.5 440 610 432 611.5 436 613 424 614.5 439 616 449 617.5 439 619 436 620.5 436 622 436 623.5 444 625 448 626.5 441 628 418 629.5 436 631 437 632.5 453 634 447 635.5 440 637 433 638.5 424 640 416 641.5 448 643 447 644.5 445 646 412 647.5 428 649 424 650.5 422 652 441 653.5 427 655 429 656.5 406 658 428 659.5 415 661 423 662.5 421 664 420 665.5 395 667 414 668.5 415 670 424 671.5 445 673 411 674.5 429 676 405 677.5 411 679 409 680.5 428 682 437 683.5 402 685 411 686.5 402 688 431 689.5 382 691 416 692.5 411 694 413 695.5 424 697 406 698.5 422 700 399 701.5 412 703 440 704.5 404 706 398 707.5 418 709 418 710.5 408 712 404 713.5 393 715 413 716.5 417 718 384 719.5 416 721 399 722.5 403 724 411 725.5 394 727 407 728.5 424 730 406 731.5 377 733 405 734.5 433 736 429 737.5 380 739 429 740.5 398 742 424 743.5 386 745 412 746.5 429 748 406 749.5 390 751 418 752.5 383 754 374 755.5 412 757 412 758.5 406 760 379 761.5 410 763 401 764.5 409 766 388 767.5 384 769 399 770.5 394 772 409 773.5 388 775 387 776.5 414 778 413 779.5 413 781 392 782.5 409 784 420 785.5 413 787 384 788.5 410 790 391 791.5 384 793 415 794.5 405 796 398 797.5 398 799 401 800.5 425 802 394 803.5 405 805 386 806.5 403 808 396 809.5 424 811 415 812.5 419 814 416 815.5 422 817 401 818.5 424 820 397 821.5 392 823 418 824.5 410 826 411 827.5 406 829 425 830.5 407 832 412 833.5 416 835 391 836.5 408 838 413 839.5 403 841 406 842.5 387 844 424 845.5 404 847 403 848.5 416 850 419 851.5 437 853 447 854.5 431 856 431 857.5 399 859 433 860.5 430 862 430 863.5 420 865 422 866.5 443 868 420 869.5 440 871 428 872.5 403 874 431 875.5 434 877 416 878.5 438 880 432 881.5 437 883 415 884.5 437 886 426 887.5 419 889 428 890.5 438 892 424 893.5 442 895 415 896.5 446 898 428 899.5 427 901 445 902.5 433 904 440 905.5 440 907 425 908.5 437 910 444 911.5 448 913 462 914.5 427 916 460 917.5 449 919 443 920.5 439 922 449 923.5 413 925 468 926.5 454 928 459 929.5 469 931 451 932.5 451 934 461 935.5 480 937 435 938.5 450 940 448 941.5 471 943 440 944.5 436 946 478 947.5 471 949 468 950.5 460 952 494 953.5 452 955 479 956.5 484 958 468 959.5 459 961 478 962.5 466 964 472 965.5 480 967 488 968.5 469 970 478 971.5 478 973 483 974.5 475 976 473 977.5 493 979 492 980.5 481 982 484 983.5 490 985 492 986.5 485 988 456 989.5 490 991 484 992.5 489 994 494 995.5 504 997 509 998.5 492 1000 497" stroke="#edc948"/>
<path d="M388 681 389.5 664 391 656 392.5 678 394 654 395.5 666 397 656 398.5 644 400 652 401.5 655 403 685 404.5 650 406 659 407.5 643 409 642 410.5 642 412 640 413.5 655 415 625 416.5 639 418 630 419.5 639 421 618 422.5 608 424 626 425.5 624 427 613 428.5 629 430 620 431.5 629 433 617 434.5 611 436 595 437.5 611 439 576 440.5 597 442 605 443.5 602 445 588 446.5 601 448 600 449.5 583 451 578 452.5 604 454 542 455.5 579 457 579 458.5 590 460 592 461.5 594 463 555 464.5 570 466 599 467.5 569 469 563 470.5 574 472 568 473.5 544 475 548 476.5 538 478 566 479.5 564 481 560 482.5 555 484 562 485.5 538 487 552 488.5 558 490 526 491.5 545 493 541 494.5 539 496 533 497.5 545 499 523 500.5 530 502 522 503.5 547 505 531 506.5 531 508 528 509.5 522 511 527 512.5 531 514 513 515.5 518 517 510 518.5 536 520 516 521.5 495 523 518 524.5 521 526 522 527.5 510 529 524 530.5 482 532 499 533.5 518 535 512 536.5 491 538 490 539.5 524 541 501 542.5 505 544 494 545.5 481 547 488 548.5 483 550 500 551.5 493 553 493 554.5 485 556 507 557.5 478 559 483 560.5 490 562 455 563.5 481 565 464 566.5 482 568 491 569.5 447 571 467 572.5 475 574 476 575.5 467 577 458 578.5 468 580 482 581.5 463 583 464 584.5 455 586 460 587.5 458 589 483 590.5 474 592 451 593.5 461 595 474 596.5 453 598 466 599.5 441 601 475 602.5 460 604 456 605.5 464 607 464 608.5 459 610 456 611.5 462 613 455 614.5 461 616 462 617.5 440 619 439 620.5 455 622 431 623.5 443 625 451 626.5 439 628 440 629.5 436 631 463 632.5 453 634 438 635.5 428 637 440 638.5 439 640 456 641.5 450 643 443 644.5 458 646 426 647.5 431 649 439 650.5 447 652 439 653.5 459 655 419 656.5 430 658 429 659.5 426 661 414 662.5 436 664 418 665.5 434 667 443 668.5 451 670 442 671.5 433 673 417 674.5 420 676 410 677.5 433 679 415 680.5 446 682 417 683.5 426 685 416 686.5 414 688 417 689.5 417 691 427 692.5 433 694 411 695.5 408 697 427 698.5 427 700 408 701.5 421 703 426 704.5 426 706 420 707.5 417 709 410 710.5 412 712 405 713.5 425 715 412 716.5 418 718 411 719.5 420 721 415 722.5 406 724 426 725.5 418 727 410 728.5 404 730 413 731.5 425 733 420 734.5 420 736 393 737.5 410 739 397 740.5 400 742 421 743.5 420 745 423 746.5 406 748 404 749.5 411 751 425 752.5 405 754 414 755.5 435 757 405 758.5 411 760 404 761.5 421 763 397 764.5 403 766 400 767.5 406 769 409 770.5 385 772 416 773.5 399 775 418 776.5 405 778 388 779.5 437 781 400 782.5 422 784 384 785.5 378 787 415 788.5 423 790 411 791.5 422 793 416 794.5 400 796 384 797.5 415 799 406 800.5 420 802 404 803.5 403 805 404 806.5 433 808 417 809.5 421 811 413 812.5 425 814 397 815.5 411 817 393 818.5 408 820 416 821.5 425 823 419 824.5 426 826 422 827.5 417 829 393 830.5 397 832 423 833.5 423 835 423 836.5 419 838 422 839.5 425 841 413 842.5 432 844 420 845.5 415 847 426 848.5 436 850 411 851.5 409 853 426 854.5 420 856 421 857.5 401 859 432 860.5 418 862 429 863.5 420 865 424 866.5 407 868 437 869.5 413 871 426 872.5 435 874 437 875.5 443 877 433 878.5 425 880 450 881.5 442 883 430 884.5 429 886 428 887.5 425 889 438 890.5 426 892 434 893.5 442 895 429 896.5 451 898 464 899.5 454 901 437 902.5 402 904 448 905.5 429 907 451 908.5 460 910 450 911.5 451 913 437 914.5 455 916 451 917.5 443 919 445 920.5 471 922 467 923.5 443 925 468 926.5 431 928 439 929.5 440 931 437 932.5 475 934 453 935.5 433 937 473 938.5 456 940 458 941.5 459 943 459 944.5 467 946 464 947.5 457 949 477 950.5 464 952 468 953.5 447 955 499 956.5 477 958 482 959.5 490 961 467 962.5 471 964 469 965.5 476 967 502 968.5 485 970 514 971.5 487 973 496 974.5 501 976 463 977.5 479 979 504 980.5 469 982 490 983.5 489 985 499 986.5 478 988 506 989.5 499 991 499 992.5 506 994 486 995.5 511 997 501 998.5 508 1000 517" stroke="#b07aa1"/>
<path d="M388 659 389.5 657 391 656 392.5 662 394 631 395.5 640 397 629 398.5 662 400 634 401.5 612 403 624 404.5 629 406 621 407.5 642 409 634 410.5 633 412 637 413.5 648 415 630 416.5 617 418 610 419.5 615 421 605 422.5 595 424 618 425.5 593 427 611 428.5 611 430 608 431.5 602 433 618 434.5 599 436 574 437.5 595 439 613 440.5 595 442 613 443.5 588 445 606 446.5 596 448 583 449.5 554 451 590 452.5 585 454 564 455.5 574 457 574 458.5 562 460 553 461.5 579 463 587 464.5 577 466 555 467.5 557 469 587 470.5 537 472 557 473.5 578 475 564 476.5 551 478 566 479.5 553 481 560 482.5 553 484 540 485.5 527 487 539 488.5 554 490 537 491.5 546 493 547 494.5 540 496 530 497.5 531 499 529 500.5 548 502 521 503.5 519 505 524 506.5 511 508 520 509.5 532 511 518 512.5 512 514 507 515.5 513 517 499 518.5 523 520 515 521.5 530 523 500 524.5 529 526 510 527.5 505 529 498 530.5 521 532 485 533.5 515 535 491 536.5 495 538 477 539.5 494 541 487 542.5 512 544 505 545.5 477 547 472 548.5 485 550 497 551.5 486 553 473 554.5 474 556 478 557.5 477 559 483 560.5 480 562 453 563.5 508 565 452 566.5 471 568 481 569.5 479 571 455 572.5 470 574 469 575.5 457 577 475 578.5 461 580 471 581.5 475 583 459 584.5 455 586 481 587.5 460 589 474 590.5 476 592 462 593.5 459 595 441 596.5 436 598 461 599.5 445 601 468 602.5 477 604 459 605.5 430 607 453 608.5 447 610 444 611.5 435 613 470 614.5 444 616 456 617.5 435 619 446 620.5 446 622 443 623.5 459 625 446 626.5 442 628 453 629.5 415 631 458 632.5 426 634 441 635.5 422 637 443 638.5 439 640 424 641.5 442 643 437 644.5 406 646 420 647.5 437 649 430 650.5 411 652 435 653.5 433 655 437 656.5 432 658 414 659.5 407 661 422 662.5 439 664 424 665.5 411 667 399 668.5 422 670 409 671.5 418 673 437 674.5 408 676 416 677.5 427 679 418 680.5 412 682 437 683.5 441 685 417 686.5 415 688 396 689.5 430 691 430 692.5 423 694 425 695.5 425 697 414 698.5 398 700 430 701.5 402 703 417 704.5 374 706 416 707.5 410 709 414 710.5 408 712 386 713.5 407 715 380 716.5 421 718 414 719.5 398 721 390 722.5 412 724 412 725.5 420 727 449 728.5 398 730 416 731.5 403 733 391 734.5 413 736 413 737.5 396 739 391 740.5 414 742 420 743.5 403 745 427 746.5 408 748 405 749.5 416 751 379 752.5 403 754 401 755.5 414 757 401 758.5 403 760 411 761.5 408 763 409 764.5 381 766 409 767.5 391 769 417 770.5 415 772 385 773.5 398 775 395 776.5 403 778 417 779.5 416 781 415 782.5 411 784 406 785.5 406 787 386 788.5 398 790 402 791.5 380 793 387 794.5 391 796 392 797.5 381 799 398 800.5 424 802 411 803.5 410 805 413 806.5 407 808 401 809.5 415 811 407 812.5 400 814 402 815.5 406 817 406 818.5 425 820 435 821.5 402 823 413 824.5 409 826 418 827.5 407 829 409 830.5 436 832 394 833.5 417 835 396 836.5 421 838 422 839.5 403 841 384 842.5 434 844 431 845.5 430 847 432 848.5 392 850 420 851.5 413 853 385 854.5 415 856 423 857.5 417 859 424 860.5 432 862 433 863.5 415 865 432 866.5 431 868 436 869.5 409 871 418 872.5 424 874 421 875.5 451 877 423 878.5 422 880 415 881.5 430 883 428 884.5 420 886 405 887.5 443 889 408 890.5 446 892 417 893.5 425 895 437 896.5 444 898 439 899.5 435 901 438 902.5 448 904 425 905.5 427 907 446 908.5 440 910 453 911.5 442 913 451 914.5 445 916 447 917.5 467 919 451 920.5 448 922 449 923.5 472 925 433 926.5 459 928 460 929.5 460 931 483 932.5 453 934 455 935.5 459 937 447 938.5 428 940 435 941.5 443 943 472 944.5 450 946 462 947.5 442 949 468 950.5 468 952 451 953.5 473 955 454 956.5 471 958 483 959.5 467 961 490 962.5 463 964 479 965.5 479 967 477 968.5 463 970 477 971.5 482 973 467 974.5 483 976 490 977.5 458 979 468 980.5 496 982 482 983.5 466 985 487 986.5 493 988 490 989.5 494 991 516 992.5 477 994 509 995.5 500 997 475 998.5 487 1000 511" stroke="#ff9da7"/>
<path d="M388 664 389.5 653 391 652 392.5 638 394 652 395.5 613 397 641 398.5 653 400 618 401.5 624 403 652 404.5 631 406 611 407.5 631 409 606 410.5 615 412 643 413.5 631 415 619 416.5 606 418 619 419.5 611 421 592 422.5 618 424 615 425.5 596 427 601 428.5 586 430 592 431.5 597 433 588 434.5 604 436 596 437.5 581 439 598 440.5 560 442 591 443.5 565 445 579 446.5 556 448 583 449.5 585 451 568 452.5 560 454 592 455.5 574 457 586 458.5 557 460 568 461.5 570 463 570 464.5 557 466 546 467.5 572 469 570 470.5 559 472 527 473.5 539 475 540 476.5 575 478 539 479.5 540 481 540 482.5 523 484 518 485.5 545 487 554 488.5 530 490 540 491.5 526 493 521 494.5 529 496 535 497.5 509 499 532 500.5 524 502 518 503.5 511 505 524 506.5 524 508 523 509.5 491 511 514 512.5 492 514 518 515.5 517 517 498 518.5 499 520 484 521.5 484 523 493 524.5 506 526 498 527.5 504 529 497 530.5 488 532 511 533.5 494 535 487 536.5 486 538 485 539.5 482 541 495 542.5 480 544 488 545.5 490 547 484 548.5 484 550 487 551.5 468 553 469 554.5 485 556 494 557.5 480 559 461 560.5 460 562 466 563.5 473 565 468 566.5 456 568 486 569.5 454 571 450 572.5 471 574 465 575.5 466 577 481 578.5 436 580 463 581.5 448 583 476 584.5 454 586 460 587.5 446 589 452 590.5 449 592 446 593.5 450 595 451 596.5 452 598 447 599.5 448 601 425 602.5 430 604 428 605.5 438 607 440 608.5 457 610 417 611.5 437 613 433 614.5 433 616 435 617.5 425 619 456 620.5 428 622 444 623.5 461 625 415 626.5 442 628 409 629.5 445 631 420 632.5 415 634 430 635.5 430 637 428 638.5 428 640 443 641.5 443 643 417 644.5 423 646 434 647.5 387 649 410 650.5 409 652 436 653.5 421 655 403 656.5 408 658 408 659.5 419 661 415 662.5 417 664 408 665.5 396 667 434 668.5 420 670 392 671.5 377 673 409 674.5 414 676 410 677.5 412 679 388 680.5 419 682 398 683.5 421 685 409 686.5 398 688 410 689.5 410 691 427 692.5 395 694 406 695.5 393 697 416 698.5 418 700 396 701.5 389 703 405 704.5 404 706 391 707.5 408 709 432 710.5 400 712 387 713.5 400 715 410 716.5 398 718 413 719.5 396 721 430 722.5 409 724 386 725.5 397 727 374 728.5 366 730 405 731.5 404 733 399 734.5 401 736 381 737.5 385 739 404 740.5 379 742 392 743.5 393 745 385 746.5 387 748 410 749.5 401 751 392 752.5 398 754 397 755.5 377 757 408 758.5 411 760 388 761.5 398 763 391 764.5 376 766 420 767.5 395 769 398 770.5 380 772 380 773.5 393 775 397 776.5 416 778 393 779.5 382 781 416 782.5 393 784 402 785.5 397 787 415 788.5 397 790 410 791.5 379 793 407 794.5 391 796 399 797.5 385 799 378 800.5 410 802 409 803.5 393 805 395 806.5 402 808 402 809.5 396 811 390 812.5 416 814 395 815.5 387 817 402 818.5 391 820 395 821.5 414 823 379 824.5 408 826 419 827.5 398 829 382 830.5 388 832 409 833.5 390 835 391 836.5 409 838 427 839.5 394 841 414 842.5 399 844 414 845.5 389 847 419 848.5 398 850 401 851.5 404 853 417 854.5 405 856 395 857.5 423 859 421 860.5 411 862 403 863.5 411 865 400 866.5 398 868 405 869.5 405 871 429 872.5 422 874 404 875.5 418 877 415 878.5 390 880 409 881.5 429 883 405 884.5 419 886 402 887.5 424 889 414 890.5 431 892 435 893.5 412 895 416 896.5 441 898 400 899.5 409 901 422 902.5 428 904 395 905.5 431 907 433 908.5 413 910 422 911.5 424 913 450 914.5 431 916 431 917.5 455 919 438 920.5 454 922 456 923.5 442 925 435 926.5 436 928 432 929.5 442 931 446 932.5 441 934 448 935.5 441 937 455 938.5 459 940 434 941.5 451 943 451 944.5 434 946 446 947.5 452 949 455 950.5 456 952 448 953.5 479 955 470 956.5 460 958 472 959.5 474 961 462 962.5 443 964 456 965.5 457 967 459 968.5 461 970 471 971.5 473 973 479 974.5 469 976 480 977.5 482 979 464 980.5 484 982 505 983.5 484 985 473 986.5 489 988 472 989.5 470 991 494 992.5 484 994 493 995.5 473 997 487 998.5 478 1000 477" stroke="#9c755f"/>
<path d="M388 636 389.5 636 391 615 392.5 631 394 645 395.5 636 397 647 398.5 631 400 631 401.5 580 403 615 404.5 614 406 615 407.5 620 409 594 410.5 634 412 605 413.5 614 415 583 416.5 593 418 600 419.5 583 421 585 422.5 594 424 582 425.5 583 427 590 428.5 585 430 582 431.5 577 433 571 434.5 583 436 565 437.5 589 439 573 440.5 578 442 544 443.5 541 445 567 446.5 556 448 549 449.5 550 451 542 452.5 570 454 572 455.5 560 457 546 458.5 552 460 530 461.5 543 463 529 464.5 543 466 538 467.5 528 469 510 470.5 509 472 524 473.5 531 475 537 476.5 525 478 541 479.5 519 481 530 482.5 533 484 508 485.5 522 487 511 488.5 506 490 497 491.5 504 493 514 494.5 520 496 513 497.5 522 499 486 500.5 470 502 505 503.5 495 505 529 506.5 506 508 496 509.5 503 511 504 512.5 493 514 498 515.5 500 517 487 518.5 501 520 492 521.5 486 523 489 524.5 471 526 485 527.5 480 529 481 530.5 479 532 475 533.5 469 535 475 536.5 476 538 482 539.5 483 541 479 542.5 462 544 468 545.5 470 547 453 548.5 465 550 460 551.5 439 553 452 554.5 450 556 459 557.5 455 559 458 560.5 448 562 444 563.5 445 565 434 566.5 459 568 430 569.5 469 571 436 572.5 429 574 455 575.5 453 577 452 578.5 454 580 430 581.5 428 583 437 584.5 430 586 431 587.5 431 589 430 590.5 430 592 451 593.5 441 595 417 596.5 443 598 412 599.5 422 601 431 602.5 414 604 429 605.5 411 607 440 608.5 418 610 411 611.5 422 613 415 614.5 417 616 407 617.5 413 619 408 620.5 435 622 414 623.5 397 625 409 626.5 418 628 411 629.5 392 631 386 632.5 418 634 420 635.5 424 637 415 638.5 419 640 396 641.5 399 643 391 644.5 412 646 416 647.5 406 649 390 650.5 406 652 402 653.5 403 655 400 656.5 412 658 404 659.5 400 661 382 662.5 400 664 411 665.5 396 667 411 668.5 397 670 385 671.5 398 673 398 674.5 379 676 409 677.5 396 679 390 680.5 375 682 376 683.5 391 685 402 686.5 367 688 383 689.5 393 691 389 692.5 369 694 390 695.5 366 697 386 698.5 392 700 370 701.5 366 703 400 704.5 376 706 379 707.5 374 709 384 710.5 373 712 372 713.5 398 715 400 716.5 401 718 390 719.5 358 721 390 722.5 381 724 391 725.5 379 727 377 728.5 368 730 364 731.5 391 733 414 734.5 378 736 379 737.5 398 739 381 740.5 395 742 378 743.5 389 745 384 746.5 382 748 381 749.5 362 751 356 752.5 395 754 381 755.5 385 757 396 758.5 399 760 387 761.5 389 763 403 764.5 376 766 369 767.5 386 769 356 770.5 367 772 403 773.5 340 775 371 776.5 371 778 391 779.5 363 781 376 782.5 380 784 365 785.5 375 787 384 788.5 387 790 380 791.5 395 793 346 794.5 399 796 355 797.5 383 799 369 800.5 364 802 377 803.5 351 805 390 806.5 380 808 376 809.5 401 811 372 812.5 373 814 378 815.5 377 817 388 818.5 381 820 350 821.5 378 823 383 824.5 386 826 380 827.5 373 829 359 830.5 402 832 390 833.5 403 835 382 836.5 389 838 397 839.5 365 841 408 842.5 410 844 413 845.5 397 847 382 848.5 394 850 371 851.5 377 853 389 854.5 398 856 403 857.5 372 859 389 860.5 386 862 385 863.5 388 865 391 866.5 419 868 393 869.5 399 871 398 872.5 391 874 394 875.5 377 877 400 878.5 406 880 400 881.5 405 883 407 884.5 406 886 389 887.5 384 889 432 890.5 405 892 403 893.5 371 895 416 896.5 406 898 409 899.5 421 901 407 902.5 407 904 405 905.5 429 907 396 908.5 418 910 411 911.5 398 913 420 914.5 422 916 410 917.5 417 919 406 920.5 418 922 420 923.5 438 925 438 926.5 439 928 412 929.5 413 931 452 932.5 433 934 423 935.5 419 937 442 938.5 431 940 413 941.5 427 943 462 944.5 431 946 436 947.5 446 949 436 950.5 451 952 450 953.5 450 955 463 956.5 427 958 446 959.5 444 961 435 962.5 429 964 430 965.5 459 967 462 968.5 458 970 439 971.5 453 973 456 974.5 462 976 455 977.5 452 979 436 980.5 456 982 469 983.5 476 985 459 986.5 468 988 462 989.5 473 991 459 992.5 472 994 453 995.5 481 997 468 998.5 478 1000 475" stroke="#bab0ac"/>
<path d="M388 597 389.5 600 391 594 392.5 599 394 604 395.5 579 397 589 398.5 576 400 582 401.5 572 403 591 404.5 594 406 572 407.5 566 409 597 410.5 587 412 563 413.5 582 415 556 416.5 551 418 567 419.5 555 421 575 422.5 550 424 567 425.5 568 427 560 428.5 565 430 551 431.5 557 433 544 434.5 548 436 557 437.5 527 439 555 440.5 534 442 518 443.5 544 445 538 446.5 548 448 544 449.5 532 451 525 452.5 537 454 526 455.5 502 457 523 458.5 492 460 523 461.5 518 463 501 464.5 516 466 511 467.5 506 469 489 470.5 520 472 510 473.5 485 475 496 476.5 504 478 487 479.5 506 481 498 482.5 489 484 494 485.5 494 487 490 488.5 482 490 488 491.5 485 493 484 494.5 491 496 470 497.5 475 499 467 500.5 473 502 443 503.5 460 505 458 506.5 454 508 478 509.5 467 511 463 512.5 469 514 456 515.5 455 517 453 518.5 477 520 462 521.5 454 523 460 524.5 455 526 445 527.5 447 529 440 530.5 427 532 458 533.5 428 535 451 536.5 429 538 434 539.5 444 541 454 542.5 448 544 441 545.5 420 547 405 548.5 428 550 428 551.5 415 553 441 554.5 418 556 428 557.5 410 559 431 560.5 428 562 401 563.5 428 565 423 566.5 431 568 433 569.5 404 571 423 572.5 398 574 416 575.5 415 577 410 578.5 386 580 411 581.5 408 583 402 584.5 408 586 401 587.5 415 589 378 590.5 385 592 397 593.5 399 595 390 596.5 405 598 396 599.5 407 601 389 602.5 377 604 404 605.5 405 607 398 608.5 402 610 397 611.5 398 613 393 614.5 383 616 371 617.5 404 619 386 620.5 376 622 351 623.5 379 625 383 626.5 377 628 374 629.5 384 631 379 632.5 377 634 368 635.5 370 637 387 638.5 370 640 374 641.5 356 643 381 644.5 360 646 377 647.5 386 649 377 650.5 353 652 368 653.5 384 655 355 656.5 379 658 373 659.5 371 661 382 662.5 371 664 388 665.5 360 667 367 668.5 368 670 336 671.5 362 673 361 674.5 354 676 353 677.5 369 679 361 680.5 334 682 371 683.5 363 685 357 686.5 358 688 350 689.5 347 691 355 692.5 355 694 351 695.5 340 697 345 698.5 350 700 356 701.5 355 703 361 704.5 352 706 353 707.5 361 709 364 710.5 364 712 351 713.5 328 715 355 716.5 351 718 356 719.5 341 721 362 722.5 348 724 345 725.5 335 727 370 728.5 335 730 337 731.5 333 733 363 734.5 352 736 348 737.5 344 739 350 740.5 355 742 367 743.5 338 745 372 746.5 362 748 341 749.5 342 751 372 752.5 350 754 349 755.5 343 757 349 758.5 325 760 341 761.5 346 763 358 764.5 332 766 346 767.5 366 769 341 770.5 335 772 346 773.5 363 775 347 776.5 329 778 350 779.5 332 781 335 782.5 362 784 350 785.5 361 787 363 788.5 359 790 360 791.5 363 793 363 794.5 320 796 356 797.5 350 799 344 800.5 350 802 368 803.5 354 805 372 806.5 353 808 344 809.5 357 811 350 812.5 360 814 362 815.5 349 817 355 818.5 352 820 370 821.5 358 823 343 824.5 348 826 345 827.5 354 829 338 830.5 371 832 354 833.5 350 835 347 836.5 358 838 351 839.5 351 841 353 842.5 351 844 349 845.5 373 847 362 848.5 354 850 363 851.5 372 853 358 854.5 360 856 357 857.5 366 859 355 860.5 355 862 368 863.5 362 865 379 866.5 359 868 360 869.5 363 871 366 872.5 361 874 368 875.5 374 877 373 878.5 384 880 347 881.5 381 883 374 884.5 361 886 353 887.5 384 889 359 890.5 389 892 368 893.5 363 895 393 896.5 389 898 365 899.5 365 901 387 902.5 367 904 382 905.5 404 907 377 908.5 408 910 381 911.5 381 913 382 914.5 394 916 397 917.5 396 919 393 920.5 372 922 403 923.5 386 925 396 926.5 406 928 407 929.5 379 931 379 932.5 409 934 397 935.5 417 937 388 938.5 387 940 397 941.5 405 943 407 944.5 388 946 406 947.5 391 949 393 950.5 403 952 403 953.5 420 955 409 956.5 402 958 394 959.5 407 961 414 962.5 405 964 405 965.5 391 967 403 968.5 403 970 419 971.5 413 973 428 974.5 441 976 445 977.5 433 979 438 980.5 438 982 419 983.5 441 985 437 986.5 430 988 459 989.5 430 991 443 992.5 439 994 439 995.5 446 997 452 998.5 445 1000 461" stroke="#4e79a7"/>
</g>
<path d="M764 158.5V702.5" stroke="#4e79a7" stroke-width="1.1" stroke-dasharray="6 3.85" clip-path="url(#ax)"/>
<path d="M766 158.5V702.5" stroke="#9c755f" stroke-width="1.1" stroke-dasharray="6 3.85" clip-path="url(#ax)"/>
<path d="M767.5 158.5V702.5" stroke="#76b7b2" stroke-width="1.1" stroke-dasharray="6 3.85" clip-path="url(#ax)"/>
<path d="M769 158.5V702.5" stroke="#bab0ac" stroke-width="1.1" stroke-dasharray="6 3.85" clip-path="url(#ax)"/>
<path d="M770.5 158.5V702.5" stroke="#59a14f" stroke-width="1.1" stroke-dasharray="6 3.85" clip-path="url(#ax)"/>
<path d="M771.5 158.5V702.5" stroke="#e15759" stroke-width="1.1" stroke-dasharray="6 3.85" clip-path="url(#ax)"/>
<path d="M773 158.5V702.5" stroke="#e15759" stroke-width="1.1" stroke-dasharray="6 3.85" clip-path="url(#ax)"/>
<path d="M774.5 158.5V702.5" stroke="#bab0ac" stroke-width="1.1" stroke-dasharray="6 3.85" clip-path="url(#ax)"/>
<path d="M776 158.5V702.5" stroke="#9c755f" stroke-width="1.1" stroke-dasharray="6 3.85" clip-path="url(#ax)"/>
<path d="M760.3 158.5V702.5" stroke="#ff9da7" stroke-width="1" stroke-dasharray="6 3.85" clip-path="url(#ax)"/>
<circle cx="771.3" cy="215" r="3.8" fill="#4e79a7" stroke="#111" stroke-width="1.3"/>
<circle cx="770.4" cy="222" r="3.8" fill="#f28e2b" stroke="#111" stroke-width="1.3"/>
<circle cx="776" cy="227" r="3.8" fill="#e15759" stroke="#111" stroke-width="1.3"/>
<circle cx="771.3" cy="229.6" r="3.8" fill="#76b7b2" stroke="#111" stroke-width="1.3"/>
<circle cx="773.3" cy="234" r="3.8" fill="#59a14f" stroke="#111" stroke-width="1.3"/>
<circle cx="772.5" cy="240" r="3.8" fill="#edc948" stroke="#111" stroke-width="1.3"/>
<circle cx="773.8" cy="245" r="3.8" fill="#b07aa1" stroke="#111" stroke-width="1.3"/>
<circle cx="772.5" cy="250" r="3.8" fill="#ff9da7" stroke="#111" stroke-width="1.3"/>
<circle cx="776" cy="255" r="3.8" fill="#9c755f" stroke="#111" stroke-width="1.3"/>
<circle cx="772" cy="260" r="3.8" fill="#bab0ac" stroke="#111" stroke-width="1.3"/>
<circle cx="773.5" cy="267" r="3.8" fill="#4e79a7" stroke="#111" stroke-width="1.3"/>
<circle cx="772.5" cy="273.5" r="3.8" fill="#f28e2b" stroke="#111" stroke-width="1.3"/>
<circle cx="771.5" cy="281" r="3.8" fill="#e15759" stroke="#111" stroke-width="1.3"/>
<circle cx="769.6" cy="289" r="3.8" fill="#76b7b2" stroke="#111" stroke-width="1.3"/>
<circle cx="768.5" cy="296" r="3.8" fill="#59a14f" stroke="#111" stroke-width="1.3"/>
<circle cx="772.5" cy="306.5" r="3.8" fill="#edc948" stroke="#111" stroke-width="1.3"/>
<circle cx="768.5" cy="314" r="3.8" fill="#b07aa1" stroke="#111" stroke-width="1.3"/>
<circle cx="772.5" cy="325" r="3.8" fill="#ff9da7" stroke="#111" stroke-width="1.3"/>
<circle cx="768.5" cy="335" r="3.8" fill="#9c755f" stroke="#111" stroke-width="1.3"/>
<circle cx="766" cy="347" r="3.8" fill="#bab0ac" stroke="#111" stroke-width="1.3"/>
<circle cx="764.6" cy="346" r="3.8" fill="#4e79a7" stroke="#111" stroke-width="1.3"/>
<circle cx="769.6" cy="358" r="3.8" fill="#4e79a7" stroke="#111" stroke-width="1.3"/>
<circle cx="767.5" cy="366" r="3.8" fill="#bab0ac" stroke="#111" stroke-width="1.3"/>
<circle cx="770.8" cy="379" r="3.8" fill="#e15759" stroke="#111" stroke-width="1.3"/>
<circle cx="766.5" cy="381" r="3.8" fill="#9c755f" stroke="#111" stroke-width="1.3"/>
<circle cx="768.5" cy="387" r="3.8" fill="#76b7b2" stroke="#111" stroke-width="1.3"/>
<circle cx="760.5" cy="392" r="3.8" fill="#ff9da7" stroke="#111" stroke-width="1.3"/>
<circle cx="768" cy="394" r="3.8" fill="#59a14f" stroke="#111" stroke-width="1.3"/>
<circle cx="763.7" cy="398" r="3.8" fill="#b07aa1" stroke="#111" stroke-width="1.3"/>
<circle cx="767.5" cy="399" r="3.8" fill="#edc948" stroke="#111" stroke-width="1.3"/>
<rect x="357.5" y="158.5" width="672.0" height="544.0" fill="none" stroke="#000" stroke-width="1.3"/>
<path d="M412.7 702.5v8M489.2 702.5v8M565.7 702.5v8M642.1 702.5v8M718.6 702.5v8M795.0 702.5v8M871.5 702.5v8M947.9 702.5v8M1024.4 702.5v8M374.5 702.5v4M393.6 702.5v4M431.9 702.5v4M451.0 702.5v4M470.1 702.5v4M508.3 702.5v4M527.4 702.5v4M546.5 702.5v4M584.8 702.5v4M603.9 702.5v4M623.0 702.5v4M661.2 702.5v4M680.3 702.5v4M699.5 702.5v4M737.7 702.5v4M756.8 702.5v4M775.9 702.5v4M814.1 702.5v4M833.2 702.5v4M852.4 702.5v4M890.6 702.5v4M909.7 702.5v4M928.8 702.5v4M967.0 702.5v4M986.2 702.5v4M1005.3 702.5v4M357.5 193.1h-8M357.5 262.1h-8M357.5 331.1h-8M357.5 400.1h-8M357.5 469.1h-8M357.5 538.1h-8M357.5 607.1h-8M357.5 676.1h-8M357.5 158.6h-4M357.5 175.8h-4M357.5 210.3h-4M357.5 227.6h-4M357.5 244.8h-4M357.5 279.3h-4M357.5 296.6h-4M357.5 313.9h-4M357.5 348.3h-4M357.5 365.6h-4M357.5 382.9h-4M357.5 417.4h-4M357.5 434.6h-4M357.5 451.9h-4M357.5 486.4h-4M357.5 503.6h-4M357.5 520.9h-4M357.5 555.4h-4M357.5 572.6h-4M357.5 589.9h-4M357.5 624.4h-4M357.5 641.6h-4M357.5 658.9h-4M357.5 693.3h-4" stroke="#000" stroke-width="1.1" fill="none"/>
<text x="412.7" y="723" text-anchor="middle" font-size="10.3" fill="#000" stroke="#000" stroke-width="0.25">−150</text>
<text x="489.2" y="723" text-anchor="middle" font-size="10.3" fill="#000" stroke="#000" stroke-width="0.25">0</text>
<text x="565.7" y="723" text-anchor="middle" font-size="10.3" fill="#000" stroke="#000" stroke-width="0.25">150</text>
<text x="642.1" y="723" text-anchor="middle" font-size="10.3" fill="#000" stroke="#000" stroke-width="0.25">300</text>
<text x="718.6" y="723" text-anchor="middle" font-size="10.3" fill="#000" stroke="#000" stroke-width="0.25">450</text>
<text x="795.0" y="723" text-anchor="middle" font-size="10.3" fill="#000" stroke="#000" stroke-width="0.25">600</text>
<text x="871.5" y="723" text-anchor="middle" font-size="10.3" fill="#000" stroke="#000" stroke-width="0.25">750</text>
<text x="947.9" y="723" text-anchor="middle" font-size="10.3" fill="#000" stroke="#000" stroke-width="0.25">900</text>
<text x="1024.4" y="723" text-anchor="middle" font-size="10.3" fill="#000" stroke="#000" stroke-width="0.25">1050</text>
<text x="342.5" y="196.7" text-anchor="end" font-size="10.3" fill="#000" stroke="#000" stroke-width="0.25">−1.8</text>
<text x="342.5" y="265.7" text-anchor="end" font-size="10.3" fill="#000" stroke="#000" stroke-width="0.25">−2.4</text>
<text x="342.5" y="334.7" text-anchor="end" font-size="10.3" fill="#000" stroke="#000" stroke-width="0.25">−3.0</text>
<text x="342.5" y="403.7" text-anchor="end" font-size="10.3" fill="#000" stroke="#000" stroke-width="0.25">−3.6</text>
<text x="342.5" y="472.7" text-anchor="end" font-size="10.3" fill="#000" stroke="#000" stroke-width="0.25">−4.2</text>
<text x="342.5" y="541.7" text-anchor="end" font-size="10.3" fill="#000" stroke="#000" stroke-width="0.25">−4.8</text>
<text x="342.5" y="610.7" text-anchor="end" font-size="10.3" fill="#000" stroke="#000" stroke-width="0.25">−5.4</text>
<text x="342.5" y="679.7" text-anchor="end" font-size="10.3" fill="#000" stroke="#000" stroke-width="0.25">−6.0</text>
<text transform="translate(312.5,431) rotate(-90)" text-anchor="middle" font-size="13.7" fill="#000" stroke="#000" stroke-width="0.2">OC_M1_Freq_Shift_Hz (Hz)</text>
<rect x="362.5" y="163.5" width="181.5" height="486" rx="2.5" fill="#fff" fill-opacity="0.85" stroke="#111" stroke-width="1"/>
<path d="M366 172.2H391" stroke="#4e79a7" stroke-width="3"/>
<text x="398.2" y="176.1" font-size="11" fill="#000" stroke="#000" stroke-width="0.2">KPFM-z_200_pm_00062.dat</text>
<path d="M366 187.8H391" stroke="#f28e2b" stroke-width="3"/>
<text x="398.2" y="191.7" font-size="11" fill="#000" stroke="#000" stroke-width="0.2">KPFM-z_200_pm_00061.dat</text>
<path d="M366 203.3H391" stroke="#e15759" stroke-width="3"/>
<text x="398.2" y="207.2" font-size="11" fill="#000" stroke="#000" stroke-width="0.2">KPFM-z_200_pm_00060.dat</text>
<path d="M366 218.9H391" stroke="#76b7b2" stroke-width="3"/>
<text x="398.2" y="222.8" font-size="11" fill="#000" stroke="#000" stroke-width="0.2">KPFM-z_200_pm_00059.dat</text>
<path d="M366 234.5H391" stroke="#59a14f" stroke-width="3"/>
<text x="398.2" y="238.4" font-size="11" fill="#000" stroke="#000" stroke-width="0.2">KPFM-z_200_pm_00058.dat</text>
<path d="M366 250.0H391" stroke="#edc948" stroke-width="3"/>
<text x="398.2" y="253.9" font-size="11" fill="#000" stroke="#000" stroke-width="0.2">KPFM-z_200_pm_00057.dat</text>
<path d="M366 265.6H391" stroke="#b07aa1" stroke-width="3"/>
<text x="398.2" y="269.5" font-size="11" fill="#000" stroke="#000" stroke-width="0.2">KPFM-z_200_pm_00056.dat</text>
<path d="M366 281.2H391" stroke="#ff9da7" stroke-width="3"/>
<text x="398.2" y="285.1" font-size="11" fill="#000" stroke="#000" stroke-width="0.2">KPFM-z_200_pm_00055.dat</text>
<path d="M366 296.8H391" stroke="#9c755f" stroke-width="3"/>
<text x="398.2" y="300.7" font-size="11" fill="#000" stroke="#000" stroke-width="0.2">KPFM-z_200_pm_00054.dat</text>
<path d="M366 312.3H391" stroke="#bab0ac" stroke-width="3"/>
<text x="398.2" y="316.2" font-size="11" fill="#000" stroke="#000" stroke-width="0.2">KPFM-z_200_pm_00053.dat</text>
<path d="M366 327.9H391" stroke="#4e79a7" stroke-width="3"/>
<text x="398.2" y="331.8" font-size="11" fill="#000" stroke="#000" stroke-width="0.2">KPFM-z_200_pm_00052.dat</text>
<path d="M366 343.5H391" stroke="#f28e2b" stroke-width="3"/>
<text x="398.2" y="347.4" font-size="11" fill="#000" stroke="#000" stroke-width="0.2">KPFM-z_200_pm_00051.dat</text>
<path d="M366 359.0H391" stroke="#e15759" stroke-width="3"/>
<text x="398.2" y="362.9" font-size="11" fill="#000" stroke="#000" stroke-width="0.2">KPFM-z_200_pm_00050.dat</text>
<path d="M366 374.6H391" stroke="#76b7b2" stroke-width="3"/>
<text x="398.2" y="378.5" font-size="11" fill="#000" stroke="#000" stroke-width="0.2">KPFM-z_200_pm_00049.dat</text>
<path d="M366 390.2H391" stroke="#59a14f" stroke-width="3"/>
<text x="398.2" y="394.1" font-size="11" fill="#000" stroke="#000" stroke-width="0.2">KPFM-z_200_pm_00048.dat</text>
<path d="M366 405.8H391" stroke="#edc948" stroke-width="3"/>
<text x="398.2" y="409.6" font-size="11" fill="#000" stroke="#000" stroke-width="0.2">KPFM-z_200_pm_00047.dat</text>
<path d="M366 421.3H391" stroke="#b07aa1" stroke-width="3"/>
<text x="398.2" y="425.2" font-size="11" fill="#000" stroke="#000" stroke-width="0.2">KPFM-z_200_pm_00046.dat</text>
<path d="M366 436.9H391" stroke="#ff9da7" stroke-width="3"/>
<text x="398.2" y="440.8" font-size="11" fill="#000" stroke="#000" stroke-width="0.2">KPFM-z_200_pm_00045.dat</text>
<path d="M366 452.5H391" stroke="#9c755f" stroke-width="3"/>
<text x="398.2" y="456.4" font-size="11" fill="#000" stroke="#000" stroke-width="0.2">KPFM-z_200_pm_00044.dat</text>
<path d="M366 468.0H391" stroke="#bab0ac" stroke-width="3"/>
<text x="398.2" y="471.9" font-size="11" fill="#000" stroke="#000" stroke-width="0.2">KPFM-z_200_pm_00043.dat</text>
<path d="M366 483.6H391" stroke="#4e79a7" stroke-width="3"/>
<text x="398.2" y="487.5" font-size="11" fill="#000" stroke="#000" stroke-width="0.2">KPFM-z_200_pm_00042.dat</text>
<path d="M366 499.2H391" stroke="#f28e2b" stroke-width="3"/>
<text x="398.2" y="503.1" font-size="11" fill="#000" stroke="#000" stroke-width="0.2">KPFM-z_200_pm_00041.dat</text>
<path d="M366 514.7H391" stroke="#e15759" stroke-width="3"/>
<text x="398.2" y="518.6" font-size="11" fill="#000" stroke="#000" stroke-width="0.2">KPFM-z_200_pm_00040.dat</text>
<path d="M366 530.3H391" stroke="#76b7b2" stroke-width="3"/>
<text x="398.2" y="534.2" font-size="11" fill="#000" stroke="#000" stroke-width="0.2">KPFM-z_200_pm_00039.dat</text>
<path d="M366 545.9H391" stroke="#59a14f" stroke-width="3"/>
<text x="398.2" y="549.8" font-size="11" fill="#000" stroke="#000" stroke-width="0.2">KPFM-z_200_pm_00038.dat</text>
<path d="M366 561.5H391" stroke="#edc948" stroke-width="3"/>
<text x="398.2" y="565.4" font-size="11" fill="#000" stroke="#000" stroke-width="0.2">KPFM-z_200_pm_00037.dat</text>
<path d="M366 577.0H391" stroke="#b07aa1" stroke-width="3"/>
<text x="398.2" y="580.9" font-size="11" fill="#000" stroke="#000" stroke-width="0.2">KPFM-z_200_pm_00036.dat</text>
<path d="M366 592.6H391" stroke="#ff9da7" stroke-width="3"/>
<text x="398.2" y="596.5" font-size="11" fill="#000" stroke="#000" stroke-width="0.2">KPFM-z_200_pm_00035.dat</text>
<path d="M366 608.2H391" stroke="#9c755f" stroke-width="3"/>
<text x="398.2" y="612.1" font-size="11" fill="#000" stroke="#000" stroke-width="0.2">KPFM-z_200_pm_00034.dat</text>
<path d="M366 623.7H391" stroke="#bab0ac" stroke-width="3"/>
<text x="398.2" y="627.6" font-size="11" fill="#000" stroke="#000" stroke-width="0.2">KPFM-z_200_pm_00033.dat</text>
<path d="M366 639.3H391" stroke="#4e79a7" stroke-width="3"/>
<text x="398.2" y="643.2" font-size="11" fill="#000" stroke="#000" stroke-width="0.2">KPFM-z_200_pm_00032.dat</text>
</svg>
<svg class="a" style="left:401px;top:528px" width="154" height="153"><defs><filter id="nz" x="0" y="0" width="100%" height="100%"><feTurbulence type="fractalNoise" baseFrequency="0.6" numOctaves="2" seed="3"/><feColorMatrix type="matrix" values="0 0 0 0 0  0 0 0 0 0  0 0 0 0 0  0 0 0 -1.6 1.0"/><feComposite in2="SourceGraphic" operator="in"/></filter><radialGradient id="rg"><stop offset="0" stop-color="#262626" stop-opacity="0.95"/><stop offset="0.35" stop-color="#303030" stop-opacity="0.8"/><stop offset="0.7" stop-color="#555" stop-opacity="0.3"/><stop offset="1" stop-color="#777" stop-opacity="0"/></radialGradient></defs><rect x="0" y="0" width="154" height="153" fill="#e6e6e6"/><radialGradient id="rg2"><stop offset="0" stop-color="#777" stop-opacity="0.45"/><stop offset="0.6" stop-color="#888" stop-opacity="0.25"/><stop offset="1" stop-color="#999" stop-opacity="0"/></radialGradient><circle cx="80" cy="80" r="75" fill="url(#rg2)"/><circle cx="77" cy="84" r="62" fill="url(#rg)" fill-opacity="0.55"/><circle cx="77" cy="83" r="44" fill="url(#rg)" fill-opacity="1.0"/><circle cx="77" cy="83" r="34" fill="url(#rg)" fill-opacity="1.0"/><circle cx="77" cy="83" r="22" fill="url(#rg)" fill-opacity="0.8"/><circle cx="61" cy="38" r="30" fill="url(#rg)" fill-opacity="1.0"/><circle cx="99" cy="42" r="30" fill="url(#rg)" fill-opacity="1.0"/><circle cx="37" cy="60" r="24" fill="url(#rg)" fill-opacity="0.75"/><circle cx="122" cy="77" r="30" fill="url(#rg)" fill-opacity="1.0"/><circle cx="103" cy="113" r="30" fill="url(#rg)" fill-opacity="1.0"/><circle cx="61" cy="121" r="25" fill="url(#rg)" fill-opacity="0.7"/><rect x="0" y="0" width="154" height="153" fill="#000" filter="url(#nz)" opacity="0.2"/><rect x="0.75" y="0.75" width="152.5" height="151.5" fill="none" stroke="#000" stroke-width="1.5"/><rect x="110" y="3" width="39" height="11" rx="4" fill="#555"/><text x="129.5" y="11.5" text-anchor="middle" font-size="8" font-weight="bold" fill="#eee">S:62 M:0</text><rect x="57" y="74.5" width="23" height="11" rx="2" fill="#333" fill-opacity="0.8" stroke="#aaa" stroke-width="0.8"/><text x="68.5" y="83" text-anchor="middle" font-size="8.5" fill="#eee">Zx31</text><circle cx="30" cy="95" r="5" fill="#777" stroke="#4e79a7" stroke-width="2"/><rect x="32.5" y="80.5" width="25" height="13" rx="2" fill="#2e2414" stroke="#d8b860" stroke-width="1"/><text x="45" y="90.5" text-anchor="middle" font-size="9.5" font-weight="bold" fill="#f4d466">Zx31</text></svg>
<div class="t" style="left:458.0px;top:511.1px;font-size:10px;color:#333;">Position</div>
<div class="t" style="left:248.2px;top:793.1px;font-size:17.5px;color:#000;letter-spacing:0.093px;">31 selected / 31 total | showing 31 | XY stacks 1 |</div>
<div class="a" style="left:638px;top:793px;width:2px;height:15px;background:#f28e2b"></div>
<div class="t" style="left:248.0px;top:824.5px;font-size:17.5px;color:#000;letter-spacing:-0.047px;">x: 296.3   y: -5.049</div>
<div class="t" style="left:248.0px;top:856.4px;font-size:17.5px;color:#000;letter-spacing:0.082px;">Hint: Shift+click two LCPD lines to show </div>
<div class="t" style="left:566.0px;top:856.4px;font-size:17.5px;color:#000;letter-spacing:-1.274px;">ΔLCPD</div>
<div class="t" style="left:621.5px;top:856.4px;font-size:17.5px;color:#000;">and drag</div>
<div class="t" style="left:917.8px;top:856.4px;font-size:17.5px;color:#000;letter-spacing:-0.006px;">to change what is visible.</div>
<div class="a" style="left:248px;top:895px;width:868px;height:108px;border:1px solid #d8d8d8;border-radius:2px"></div>
<div class="t" style="left:258.6px;top:888.6px;font-size:17.5px;color:#000;letter-spacing:-0.087px;background:#f0f0f0;padding:0 3px;margin-left:-3px">Visualization</div>
<div class="a" style="left:260px;top:927px;width:16px;height:16px;background:#f6f6f6;border:1px solid #5f5f5f;border-radius:3px"></div>
<div class="t" style="left:282.0px;top:928.2px;font-size:17.5px;color:#000;letter-spacing:0.012px;">Waterfall</div>
<div class="a" style="left:363px;top:927px;width:16px;height:16px;background:#f6f6f6;border:1px solid #5f5f5f;border-radius:3px"></div>
<div class="t" style="left:385.5px;top:928.2px;font-size:17.5px;color:#000;letter-spacing:-0.240px;">Points</div>
<div class="a" style="left:445px;top:927px;width:16px;height:16px;background:#005fb8;border-radius:3px"><svg width="16" height="16" style="position:absolute;left:0;top:0"><path d="M4 8.3 L6.8 11 L12 5.2" fill="none" stroke="#fff" stroke-width="1.1"/></svg></div>
<div class="t" style="left:467.0px;top:928.2px;font-size:17.5px;color:#000;letter-spacing:-0.767px;">Lines</div>
<div class="a" style="left:518px;top:927px;width:16px;height:16px;background:#005fb8;border-radius:3px"><svg width="16" height="16" style="position:absolute;left:0;top:0"><path d="M4 8.3 L6.8 11 L12 5.2" fill="none" stroke="#fff" stroke-width="1.1"/></svg></div>
<div class="t" style="left:540.5px;top:928.2px;font-size:17.5px;color:#000;letter-spacing:-0.292px;">Position inset</div>
<div class="a" style="left:261px;top:959px;width:91px;height:32px;background:#fdfdfd;border:1px solid #0067c0;border-bottom-color:#0067c0;border-radius:4px"></div>
<div class="t" style="left:261px;width:91px;text-align:center;top:967.8px;font-size:17.5px;letter-spacing:-0.523px;text-indent:0.52px">Undo</div>
<div class="a" style="left:1511px;top:69px;width:2px;height:939px;background:#fff"></div>
<div class="a" style="left:1520px;top:90px;width:3px;height:588px;background:#888;border-radius:2px"></div>
<div class="a" style="left:1132px;top:87px;width:373px;height:105px;border:1px solid #d8d8d8;border-radius:2px"></div>
<div class="t" style="left:1143.2px;top:80.5px;font-size:17.5px;color:#000;background:#f0f0f0;padding:0 3px;margin-left:-3px">Data Selection</div>
<div class="t" style="left:1144.6px;top:120.4px;font-size:17.5px;color:#000;letter-spacing:-0.569px;">Channel:</div>
<div class="a" style="left:1218px;top:112px;width:275px;height:31px;background:#e5f1fb;border:1px solid #0078d4;border-radius:3px"></div>
<div class="t" style="left:1223.0px;top:120.5px;font-size:17.5px;color:#000;letter-spacing:-0.636px;">OC_M1_Freq_Shift_Hz</div>
<svg class="a" style="left:1475px;top:124px" width="12" height="8"><path d="M1 1.5 L6 6.5 L11 1.5" fill="none" stroke="#333" stroke-width="1.1"/></svg>
<div class="t" style="left:1144.4px;top:158.5px;font-size:17.5px;color:#000;letter-spacing:-0.385px;">Axis:</div>
<div class="a" style="left:1188px;top:151px;width:92px;height:30px;background:#fdfdfd;border:1px solid #d0d0d0;border-radius:3px"></div>
<div class="t" style="left:1193.0px;top:159.0px;font-size:17.5px;color:#000;letter-spacing:-0.670px;">Bias calc</div>
<svg class="a" style="left:1262px;top:163px" width="12" height="8"><path d="M1 1.5 L6 6.5 L11 1.5" fill="none" stroke="#333" stroke-width="1.1"/></svg>
<div class="a" style="left:1287px;top:157px;width:16px;height:16px;background:#f6f6f6;border:1px solid #5f5f5f;border-radius:3px"></div>
<div class="t" style="left:1309.8px;top:158.5px;font-size:17.5px;color:#000;letter-spacing:-0.173px;">Relative Z (zero at min)</div>
<div class="a" style="left:1132px;top:212px;width:373px;height:102px;border:1px solid #d8d8d8;border-radius:2px"></div>
<div class="t" style="left:1142.3px;top:206.4px;font-size:17.5px;color:#000;background:#f0f0f0;padding:0 3px;margin-left:-3px">Appearance</div>
<div class="t" style="left:1144.4px;top:245.8px;font-size:17.5px;color:#000;letter-spacing:-0.285px;">Color cycle:</div>
<div class="a" style="left:1242px;top:238px;width:251px;height:30px;background:#fdfdfd;border:1px solid #d0d0d0;border-radius:3px"></div>
<div class="t" style="left:1247.0px;top:246.0px;font-size:17.5px;color:#000;">Vivid</div>
<svg class="a" style="left:1475px;top:250px" width="12" height="8"><path d="M1 1.5 L6 6.5 L11 1.5" fill="none" stroke="#333" stroke-width="1.1"/></svg>
<div class="a" style="left:1144px;top:279px;width:20px;height:20px;background:#4e79a7;border:1px solid #8a8a8a"></div>
<div class="a" style="left:1167px;top:279px;width:20px;height:20px;background:#f28e2b;border:1px solid #8a8a8a"></div>
<div class="a" style="left:1190px;top:279px;width:20px;height:20px;background:#e15759;border:1px solid #8a8a8a"></div>
<div class="a" style="left:1213px;top:279px;width:20px;height:20px;background:#76b7b2;border:1px solid #8a8a8a"></div>
<div class="a" style="left:1236px;top:279px;width:20px;height:20px;background:#59a14f;border:1px solid #8a8a8a"></div>
<div class="a" style="left:1259px;top:279px;width:20px;height:20px;background:#edc948;border:1px solid #8a8a8a"></div>
<div class="a" style="left:1282px;top:279px;width:20px;height:20px;background:#b07aa1;border:1px solid #8a8a8a"></div>
<div class="a" style="left:1305px;top:279px;width:20px;height:20px;background:#ff9da7;border:1px solid #8a8a8a"></div>
<div class="a" style="left:1328px;top:279px;width:20px;height:20px;background:#9c755f;border:1px solid #8a8a8a"></div>
<div class="a" style="left:1351px;top:279px;width:20px;height:20px;background:#bab0ac;border:1px solid #8a8a8a"></div>
<div class="a" style="left:1132px;top:334px;width:373px;height:297px;border:1px solid #d8d8d8;border-radius:2px"></div>
<div class="t" style="left:1142.5px;top:327.6px;font-size:17.5px;color:#000;background:#f0f0f0;padding:0 3px;margin-left:-3px">Filters</div>
<div class="a" style="left:1144px;top:366px;width:16px;height:16px;background:#f6f6f6;border:1px solid #5f5f5f;border-radius:3px"></div>
<div class="a" style="left:1144px;top:404px;width:16px;height:16px;background:#f6f6f6;border:1px solid #5f5f5f;border-radius:3px"></div>
<div class="a" style="left:1144px;top:442px;width:16px;height:16px;background:#f6f6f6;border:1px solid #5f5f5f;border-radius:3px"></div>
<div class="a" style="left:1144px;top:480px;width:16px;height:16px;background:#f6f6f6;border:1px solid #5f5f5f;border-radius:3px"></div>
<div class="a" style="left:1144px;top:518px;width:16px;height:16px;background:#f6f6f6;border:1px solid #5f5f5f;border-radius:3px"></div>
<div class="a" style="left:1144px;top:556px;width:16px;height:16px;background:#f6f6f6;border:1px solid #5f5f5f;border-radius:3px"></div>
<div class="t" style="left:1166.3px;top:367.8px;font-size:17.5px;color:#000;letter-spacing:-0.492px;">Gaussian</div>
<div class="t" style="left:1247.0px;top:367.8px;font-size:17.5px;color:#000;letter-spacing:-1.331px;">σ:</div>
<div class="a" style="left:1268px;top:360px;width:224px;height:30px;background:#fff;border-bottom:1.5px solid #858585;border-radius:2px 2px 0 0"></div>
<div class="t" style="left:1271.2px;top:368.4px;font-size:17.5px;color:#000;">1.00</div>
<div class="a" style="left:1471px;top:361.5px;width:19px;height:13.5px;background:#fafafa;border:1px solid #dadada;border-radius:2px 2px 0 0"></div>
<div class="a" style="left:1471px;top:375.0px;width:19px;height:12.0px;background:#fafafa;border:1px solid #dadada;border-top:none;border-radius:0 0 2px 2px"></div>
<svg class="a" style="left:1471px;top:360px" width="19" height="30"><path d="M5.5 10.5 L9.5 6.0 L13.5 10.5 Z" fill="#1a1a1a"/><path d="M5.5 19.5 L9.5 24.0 L13.5 19.5 Z" fill="#1a1a1a"/></svg>
<div class="t" style="left:1166.3px;top:405.8px;font-size:17.5px;color:#000;letter-spacing:-0.101px;">Savitzky-Gol</div>
<div class="t" style="left:1272.5px;top:405.8px;font-size:17.5px;color:#000;letter-spacing:0.460px;">Window</div>
<div class="a" style="left:1345px;top:398px;width:55px;height:30px;background:#fff;border-bottom:1.5px solid #858585;border-radius:2px 2px 0 0"></div>
<div class="t" style="left:1348.2px;top:406.4px;font-size:17.5px;color:#000;">11</div>
<div class="a" style="left:1385px;top:399.5px;width:13px;height:13.5px;background:#fafafa;border:1px solid #dadada;border-radius:2px 2px 0 0"></div>
<div class="a" style="left:1385px;top:413.0px;width:13px;height:12.0px;background:#fafafa;border:1px solid #dadada;border-top:none;border-radius:0 0 2px 2px"></div>
<svg class="a" style="left:1385px;top:398px" width="13" height="30"><path d="M2.5 10.5 L6.5 6.0 L10.5 10.5 Z" fill="#1a1a1a"/><path d="M2.5 19.5 L6.5 24.0 L10.5 19.5 Z" fill="#1a1a1a"/></svg>
<div class="t" style="left:1407.8px;top:405.8px;font-size:17.5px;color:#000;letter-spacing:-0.511px;">Poly</div>
<div class="a" style="left:1447px;top:398px;width:45px;height:30px;background:#fff;border-bottom:1.5px solid #858585;border-radius:2px 2px 0 0"></div>
<div class="t" style="left:1450.2px;top:406.4px;font-size:17.5px;color:#000;">3</div>
<div class="a" style="left:1477px;top:399.5px;width:13px;height:13.5px;background:#fafafa;border:1px solid #dadada;border-radius:2px 2px 0 0"></div>
<div class="a" style="left:1477px;top:413.0px;width:13px;height:12.0px;background:#fafafa;border:1px solid #dadada;border-top:none;border-radius:0 0 2px 2px"></div>
<svg class="a" style="left:1477px;top:398px" width="13" height="30"><path d="M2.5 10.5 L6.5 6.0 L10.5 10.5 Z" fill="#1a1a1a"/><path d="M2.5 19.5 L6.5 24.0 L10.5 19.5 Z" fill="#1a1a1a"/></svg>
<div class="t" style="left:1166.3px;top:443.8px;font-size:17.5px;color:#000;letter-spacing:0.100px;">Median</div>
<div class="t" style="left:1262.0px;top:443.8px;font-size:17.5px;color:#000;letter-spacing:-0.761px;">Size</div>
<div class="a" style="left:1382px;top:436px;width:110px;height:30px;background:#fff;border-bottom:1.5px solid #858585;border-radius:2px 2px 0 0"></div>
<div class="t" style="left:1385.2px;top:444.4px;font-size:17.5px;color:#000;">3</div>
<div class="a" style="left:1471px;top:437.5px;width:19px;height:13.5px;background:#fafafa;border:1px solid #dadada;border-radius:2px 2px 0 0"></div>
<div class="a" style="left:1471px;top:451.0px;width:19px;height:12.0px;background:#fafafa;border:1px solid #dadada;border-top:none;border-radius:0 0 2px 2px"></div>
<svg class="a" style="left:1471px;top:436px" width="19" height="30"><path d="M5.5 10.5 L9.5 6.0 L13.5 10.5 Z" fill="#1a1a1a"/><path d="M5.5 19.5 L9.5 24.0 L13.5 19.5 Z" fill="#1a1a1a"/></svg>
<div class="t" style="left:1166.3px;top:481.8px;font-size:17.5px;color:#000;letter-spacing:-0.472px;">FFT low-pass</div>
<div class="t" style="left:1280.0px;top:481.8px;font-size:17.5px;color:#000;letter-spacing:0.604px;">Cutoff</div>
<div class="a" style="left:1391px;top:474px;width:101px;height:30px;background:#fff;border-bottom:1.5px solid #858585;border-radius:2px 2px 0 0"></div>
<div class="t" style="left:1394.2px;top:482.4px;font-size:17.5px;color:#000;">0.150</div>
<div class="a" style="left:1471px;top:475.5px;width:19px;height:13.5px;background:#fafafa;border:1px solid #dadada;border-radius:2px 2px 0 0"></div>
<div class="a" style="left:1471px;top:489.0px;width:19px;height:12.0px;background:#fafafa;border:1px solid #dadada;border-top:none;border-radius:0 0 2px 2px"></div>
<svg class="a" style="left:1471px;top:474px" width="19" height="30"><path d="M5.5 10.5 L9.5 6.0 L13.5 10.5 Z" fill="#1a1a1a"/><path d="M5.5 19.5 L9.5 24.0 L13.5 19.5 Z" fill="#1a1a1a"/></svg>
<div class="t" style="left:1166.3px;top:519.8px;font-size:17.5px;color:#000;letter-spacing:0.257px;">Notch</div>
<div class="t" style="left:1225.4px;top:519.8px;font-size:17.5px;color:#000;letter-spacing:-0.496px;">Freq</div>
<div class="a" style="left:1267px;top:512px;width:82px;height:30px;background:#fff;border-bottom:1.5px solid #858585;border-radius:2px 2px 0 0"></div>
<div class="t" style="left:1270.2px;top:520.4px;font-size:17.5px;color:#000;">50.00</div>
<div class="a" style="left:1334px;top:513.5px;width:13px;height:13.5px;background:#fafafa;border:1px solid #dadada;border-radius:2px 2px 0 0"></div>
<div class="a" style="left:1334px;top:527.0px;width:13px;height:12.0px;background:#fafafa;border:1px solid #dadada;border-top:none;border-radius:0 0 2px 2px"></div>
<svg class="a" style="left:1334px;top:512px" width="13" height="30"><path d="M2.5 10.5 L6.5 6.0 L10.5 10.5 Z" fill="#1a1a1a"/><path d="M2.5 19.5 L6.5 24.0 L10.5 19.5 Z" fill="#1a1a1a"/></svg>
<div class="t" style="left:1356.3px;top:519.8px;font-size:17.5px;color:#000;letter-spacing:0.653px;">Width</div>
<div class="a" style="left:1411px;top:512px;width:81px;height:30px;background:#fff;border-bottom:1.5px solid #858585;border-radius:2px 2px 0 0"></div>
<div class="t" style="left:1414.2px;top:520.4px;font-size:17.5px;color:#000;">5.000</div>
<div class="a" style="left:1477px;top:513.5px;width:13px;height:13.5px;background:#fafafa;border:1px solid #dadada;border-radius:2px 2px 0 0"></div>
<div class="a" style="left:1477px;top:527.0px;width:13px;height:12.0px;background:#fafafa;border:1px solid #dadada;border-top:none;border-radius:0 0 2px 2px"></div>
<svg class="a" style="left:1477px;top:512px" width="13" height="30"><path d="M2.5 10.5 L6.5 6.0 L10.5 10.5 Z" fill="#1a1a1a"/><path d="M2.5 19.5 L6.5 24.0 L10.5 19.5 Z" fill="#1a1a1a"/></svg>
<div class="t" style="left:1166.3px;top:557.8px;font-size:17.5px;color:#000;letter-spacing:-0.094px;">Derivative (d</div>
<div class="t" style="left:1272.5px;top:557.8px;font-size:17.5px;color:#000;letter-spacing:0.460px;">Window</div>
<div class="a" style="left:1345px;top:550px;width:55px;height:30px;background:#fff;border-bottom:1.5px solid #858585;border-radius:2px 2px 0 0"></div>
<div class="t" style="left:1348.2px;top:558.4px;font-size:17.5px;color:#000;">11</div>
<div class="a" style="left:1385px;top:551.5px;width:13px;height:13.5px;background:#fafafa;border:1px solid #dadada;border-radius:2px 2px 0 0"></div>
<div class="a" style="left:1385px;top:565.0px;width:13px;height:12.0px;background:#fafafa;border:1px solid #dadada;border-top:none;border-radius:0 0 2px 2px"></div>
<svg class="a" style="left:1385px;top:550px" width="13" height="30"><path d="M2.5 10.5 L6.5 6.0 L10.5 10.5 Z" fill="#1a1a1a"/><path d="M2.5 19.5 L6.5 24.0 L10.5 19.5 Z" fill="#1a1a1a"/></svg>
<div class="t" style="left:1407.8px;top:557.8px;font-size:17.5px;color:#000;letter-spacing:-0.511px;">Poly</div>
<div class="a" style="left:1447px;top:550px;width:45px;height:30px;background:#fff;border-bottom:1.5px solid #858585;border-radius:2px 2px 0 0"></div>
<div class="t" style="left:1450.2px;top:558.4px;font-size:17.5px;color:#000;">3</div>
<div class="a" style="left:1477px;top:551.5px;width:13px;height:13.5px;background:#fafafa;border:1px solid #dadada;border-radius:2px 2px 0 0"></div>
<div class="a" style="left:1477px;top:565.0px;width:13px;height:12.0px;background:#fafafa;border:1px solid #dadada;border-top:none;border-radius:0 0 2px 2px"></div>
<svg class="a" style="left:1477px;top:550px" width="13" height="30"><path d="M2.5 10.5 L6.5 6.0 L10.5 10.5 Z" fill="#1a1a1a"/><path d="M2.5 19.5 L6.5 24.0 L10.5 19.5 Z" fill="#1a1a1a"/></svg>
<div class="a" style="left:1145px;top:588px;width:347px;height:32px;background:#fdfdfd;border:1px solid #d0d0d0;border-bottom-color:#b8b8b8;border-radius:4px"></div>
<div class="t" style="left:1145px;width:347px;text-align:center;top:596.8px;font-size:17.5px;letter-spacing:-0.335px;text-indent:0.34px">Disable all filters</div>
<div class="a" style="left:1132px;top:653px;width:373px;height:355px;border:1px solid #d8d8d8;border-radius:2px"></div>
<div class="t" style="left:1142.8px;top:645.8px;font-size:17.5px;color:#000;background:#f0f0f0;padding:0 3px;margin-left:-3px">Analysis</div>
<div class="a" style="left:1144px;top:690px;width:349px;height:187px;border:1px solid #d8d8d8;border-radius:2px"></div>
<div class="t" style="left:1154.5px;top:682.8px;font-size:17.5px;color:#000;background:#f0f0f0;padding:0 3px;margin-left:-3px">KPFM</div>
<div class="a" style="left:1157px;top:715px;width:157px;height:32px;background:#fdfdfd;border:1px solid #d0d0d0;border-bottom-color:#b8b8b8;border-radius:4px"></div>
<div class="t" style="left:1157px;width:157px;text-align:center;top:723.8px;font-size:17.5px;letter-spacing:-0.365px;text-indent:0.36px">Fit selected (F)</div>
<div class="a" style="left:1323px;top:715px;width:157px;height:32px;background:#fdfdfd;border:1px solid #d0d0d0;border-bottom-color:#b8b8b8;border-radius:4px"></div>
<div class="t" style="left:1323px;width:157px;text-align:center;top:723.8px;font-size:17.5px;letter-spacing:-0.299px;text-indent:0.30px">Fit all</div>
<div class="a" style="left:1157px;top:756px;width:95px;height:32px;background:#fdfdfd;border:1px solid #d0d0d0;border-bottom-color:#b8b8b8;border-radius:4px"></div>
<div class="t" style="left:1157px;width:95px;text-align:center;top:764.8px;font-size:17.5px;letter-spacing:-0.457px;text-indent:0.46px">Export CSV</div>
<div class="a" style="left:1157px;top:797px;width:104px;height:32px;background:#fdfdfd;border:1px solid #d0d0d0;border-bottom-color:#b8b8b8;border-radius:4px"></div>
<div class="t" style="left:1157px;width:104px;text-align:center;top:805.8px;font-size:17.5px;letter-spacing:-0.340px;text-indent:0.34px">Plot fits vs Z</div>
<div class="a" style="left:1156px;top:843px;width:16px;height:16px;background:#f6f6f6;border:1px solid #5f5f5f;border-radius:3px"></div>
<div class="t" style="left:1178.6px;top:845.0px;font-size:17.5px;color:#000;letter-spacing:-0.366px;">Relative Z values</div>
<div class="a" style="left:1144px;top:898px;width:349px;height:110px;border:1px solid #d8d8d8;border-radius:2px"></div>
<div class="t" style="left:1154.5px;top:890.9px;font-size:17.5px;color:#000;background:#f0f0f0;padding:0 3px;margin-left:-3px">Forces/Background</div>
<div class="a" style="left:1157px;top:924px;width:157px;height:31px;background:#fdfdfd;border:1px solid #d0d0d0;border-bottom-color:#b8b8b8;border-radius:4px"></div>
<div class="t" style="left:1157px;width:157px;text-align:center;top:932.3px;font-size:17.5px;letter-spacing:-0.438px;text-indent:0.44px">Set background</div>
<div class="a" style="left:1323px;top:924px;width:157px;height:31px;background:#fdfdfd;border:1px solid #d0d0d0;border-bottom-color:#b8b8b8;border-radius:4px"></div>
<div class="t" style="left:1323px;width:157px;text-align:center;top:932.3px;font-size:17.5px;letter-spacing:-0.432px;text-indent:0.43px">Clear background</div>
<div class="a" style="left:1157px;top:965px;width:136px;height:30px;background:#fdfdfd;border:1px solid #d0d0d0;border-bottom-color:#b8b8b8;border-radius:4px"></div>
<div class="t" style="left:1157px;width:136px;text-align:center;top:972.8px;font-size:17.5px;letter-spacing:-0.389px;text-indent:0.39px">Convert to force</div>
<div class="a" style="left:640px;top:567px;width:279px;height:569px;background:#f0f0f0;border:1px solid #d6d6d6;box-shadow:2px 2px 3px rgba(0,0,0,.35)"></div>
<div class="a" style="left:670px;top:570px;width:3px;height:564px;background:#f8f8f8"></div>
<div class="t" style="left:677.5px;top:578.6px;font-size:17.5px;color:#000;letter-spacing:-0.008px;">Figure preset</div>
<svg class="a" style="left:898px;top:580px" width="6" height="10"><path d="M0 0 L5.5 5 L0 10 Z" fill="#111"/></svg>
<div class="a" style="left:673px;top:603px;width:242px;height:1px;background:#d4d4d4"></div>
<div class="t" style="left:677.5px;top:616.6px;font-size:17.5px;color:#000;letter-spacing:0.077px;">Copy plot as PNG (300 dpi)</div>
<div class="t" style="left:677.5px;top:645.6px;font-size:17.5px;color:#000;letter-spacing:0.077px;">Copy plot as PNG (600 dpi)</div>
<div class="t" style="left:677.5px;top:674.6px;font-size:17.5px;color:#000;letter-spacing:-0.131px;">Copy plot as SVG</div>
<div class="t" style="left:677.5px;top:703.6px;font-size:17.5px;color:#000;letter-spacing:-0.053px;">Copy all traces (table)</div>
<div class="t" style="left:677.5px;top:732.6px;font-size:17.5px;color:#000;letter-spacing:0.115px;">Save plot</div>
<svg class="a" style="left:898px;top:734px" width="6" height="10"><path d="M0 0 L5.5 5 L0 10 Z" fill="#111"/></svg>
<div class="a" style="left:673px;top:757px;width:242px;height:1px;background:#d4d4d4"></div>
<div class="t" style="left:677.5px;top:770.6px;font-size:17.5px;color:#000;letter-spacing:-0.345px;">Typography</div>
<svg class="a" style="left:898px;top:772px" width="6" height="10"><path d="M0 0 L5.5 5 L0 10 Z" fill="#111"/></svg>
<div class="a" style="left:673px;top:795px;width:242px;height:1px;background:#d4d4d4"></div>
<div class="t" style="left:677.5px;top:808.6px;font-size:17.5px;color:#000;letter-spacing:0.220px;">Find minima (x-position)</div>
<div class="t" style="left:677.5px;top:837.6px;font-size:17.5px;color:#000;letter-spacing:-0.039px;">Resolve minima overlaps</div>
<div class="a" style="left:673px;top:862px;width:242px;height:1px;background:#d4d4d4"></div>
<div class="t" style="left:677.5px;top:875.8px;font-size:17.5px;color:#000;letter-spacing:0.316px;">Add point label here</div>
<div class="t" style="left:677.5px;top:904.6px;font-size:17.5px;color:#000;letter-spacing:-0.012px;">Clear point labels</div>
<div class="t" style="left:677.5px;top:933.4px;font-size:17.5px;color:#000;letter-spacing:0.274px;">Show position inset</div>
<div class="a" style="left:673px;top:958px;width:242px;height:1px;background:#d4d4d4"></div>
<div class="t" style="left:677.5px;top:971.9px;font-size:17.5px;color:#000;letter-spacing:-0.767px;">Lines</div>
<svg class="a" style="left:898px;top:973.3px" width="6" height="10"><path d="M0 0 L5.5 5 L0 10 Z" fill="#111"/></svg>
<div class="a" style="left:673px;top:996px;width:242px;height:1px;background:#d4d4d4"></div>
<div class="t" style="left:677.5px;top:1009.6px;font-size:17.5px;color:#000;letter-spacing:-0.234px;">Filters</div>
<svg class="a" style="left:898px;top:1011px" width="6" height="10"><path d="M0 0 L5.5 5 L0 10 Z" fill="#111"/></svg>
<div class="a" style="left:673px;top:1034px;width:242px;height:1px;background:#d4d4d4"></div>
<div class="a" style="left:643px;top:1039px;width:269px;height:29px;background:#91c9f7"></div>
<div class="t" style="left:677.5px;top:1047.6px;font-size:17.5px;color:#000;letter-spacing:-0.233px;">Legend</div>
<svg class="a" style="left:898px;top:1049px" width="6" height="10"><path d="M0 0 L5.5 5 L0 10 Z" fill="#111"/></svg>
<div class="a" style="left:673px;top:1072px;width:242px;height:1px;background:#d4d4d4"></div>
<div class="t" style="left:677.5px;top:1085.2px;font-size:17.5px;color:#000;letter-spacing:0.196px;">Grid / ticks</div>
<svg class="a" style="left:898px;top:1086.6px" width="6" height="10"><path d="M0 0 L5.5 5 L0 10 Z" fill="#111"/></svg>
<div class="t" style="left:677.5px;top:1114.4px;font-size:17.5px;color:#000;letter-spacing:0.100px;">Plot style</div>
<svg class="a" style="left:898px;top:1115.8px" width="6" height="10"><path d="M0 0 L5.5 5 L0 10 Z" fill="#111"/></svg>
<svg class="a" style="left:649px;top:935px" width="12" height="10"><path d="M1 5 L4.5 8.5 L11 1.5" fill="none" stroke="#333" stroke-width="1.1"/></svg>
<div class="a" style="left:913px;top:1037px;width:222px;height:170px;background:#f0f0f0;border:1px solid #d6d6d6;box-shadow:2px 2px 3px rgba(0,0,0,.35)"></div>
<div class="a" style="left:940px;top:1040px;width:5px;height:29px;background:#f8f8f8"></div>
<div class="a" style="left:940px;top:1139px;width:5px;height:56px;background:#f8f8f8"></div>
<svg class="a" style="left:921px;top:1049px" width="12" height="10"><path d="M1 5 L4.5 8.5 L11 1.5" fill="none" stroke="#333" stroke-width="1.1"/></svg>
<svg class="a" style="left:921px;top:1148px" width="12" height="10"><path d="M1 5 L4.5 8.5 L11 1.5" fill="none" stroke="#333" stroke-width="1.1"/></svg>
<svg class="a" style="left:921px;top:1177px" width="12" height="10"><path d="M1 5 L4.5 8.5 L11 1.5" fill="none" stroke="#333" stroke-width="1.1"/></svg>
<div class="t" style="left:949.1px;top:1046.8px;font-size:17.5px;color:#000;letter-spacing:0.073px;">Show legend</div>
<div class="t" style="left:921.6px;top:1079.4px;font-size:17.5px;color:#000;letter-spacing:0.217px;">Position</div>
<div class="a" style="left:991px;top:1070px;width:134px;height:31px;background:#fdfdfd;border:1px solid #d0d0d0;border-radius:3px"></div>
<div class="t" style="left:996.0px;top:1078.5px;font-size:17.5px;color:#000;letter-spacing:-0.004px;">Best</div>
<svg class="a" style="left:1107px;top:1082px" width="12" height="8"><path d="M1 1.5 L6 6.5 L11 1.5" fill="none" stroke="#333" stroke-width="1.1"/></svg>
<div class="t" style="left:921.6px;top:1114.2px;font-size:17.5px;color:#000;letter-spacing:-0.222px;">Font size</div>
<div class="a" style="left:1028px;top:1106px;width:96px;height:30px;background:#fff;border-bottom:1.5px solid #858585;border-radius:2px 2px 0 0"></div>
<div class="t" style="left:1031.2px;top:1114.4px;font-size:17.5px;color:#000;">8</div>
<div class="a" style="left:1103px;top:1107.5px;width:19px;height:13.5px;background:#fafafa;border:1px solid #dadada;border-radius:2px 2px 0 0"></div>
<div class="a" style="left:1103px;top:1121.0px;width:19px;height:12.0px;background:#fafafa;border:1px solid #dadada;border-top:none;border-radius:0 0 2px 2px"></div>
<svg class="a" style="left:1103px;top:1106px" width="19" height="30"><path d="M5.5 10.5 L9.5 6.0 L13.5 10.5 Z" fill="#1a1a1a"/><path d="M5.5 19.5 L9.5 24.0 L13.5 19.5 Z" fill="#1a1a1a"/></svg>
<div class="t" style="left:949.1px;top:1145.8px;font-size:17.5px;color:#000;letter-spacing:0.160px;">Background</div>
<div class="t" style="left:949.1px;top:1174.8px;font-size:17.5px;color:#000;letter-spacing:-0.088px;">Border</div></body></html>
